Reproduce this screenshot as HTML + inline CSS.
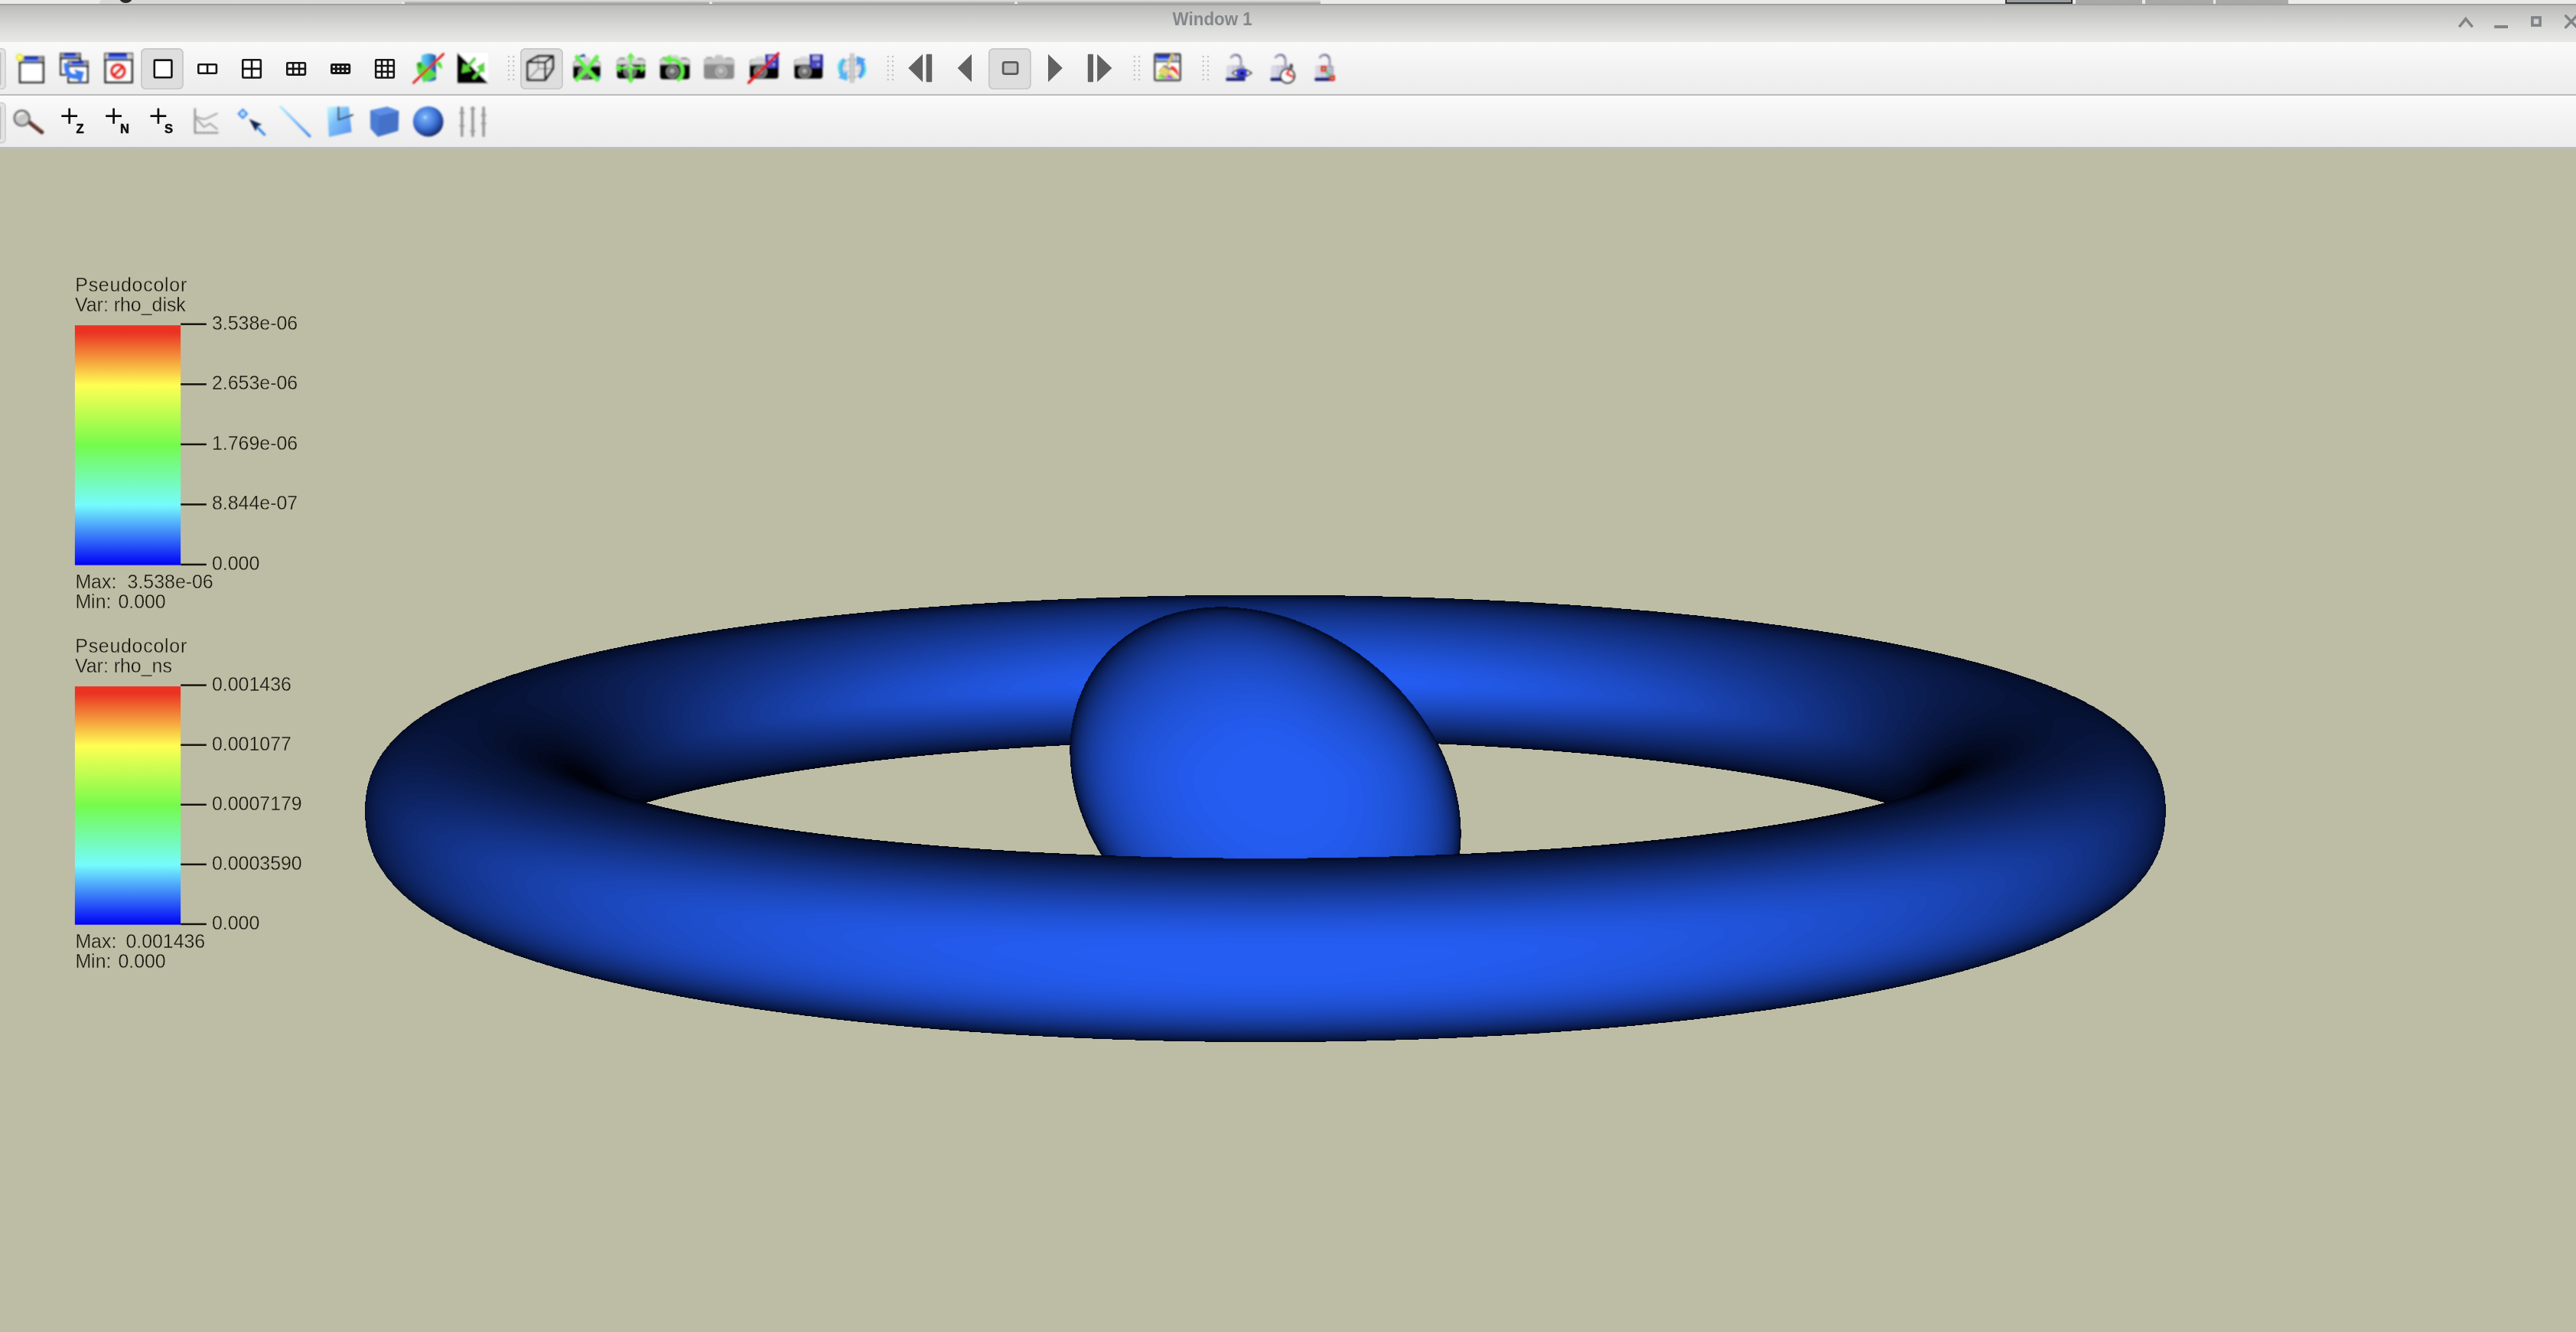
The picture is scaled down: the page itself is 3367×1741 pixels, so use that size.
<!DOCTYPE html>
<html lang="en">
<head>
<meta charset="utf-8">
<title>Window 1</title>
<style>
html,body{margin:0;padding:0;}
body{width:3367px;height:1741px;overflow:hidden;background:#bdbda5;position:relative;font-family:"Liberation Sans",sans-serif;}
#desk{position:absolute;left:0;top:0;width:3367px;height:5.4px;background:#ebebea;overflow:hidden;}
#tabs{position:absolute;left:130px;top:0;width:1596px;height:5px;background:#d9d9d8;border-radius:4px 0 0 0;}
#tabs2{position:absolute;left:527px;top:2.4px;width:1199px;height:3px;background:linear-gradient(#c4c5c2,#a2a4a0);}
.tsep{position:absolute;top:1.5px;width:4px;height:4px;border-radius:2px 2px 0 0;background:#ececec;}
#blob{position:absolute;left:155.5px;top:-11px;width:17px;height:14.5px;border-radius:50%;background:#26282a;}
.ws{position:absolute;top:-4px;height:8.6px;background:#a9a9a8;}
#topline{position:absolute;left:0;top:4.9px;width:3367px;height:2px;background:linear-gradient(#a2a3a0,#9a9b98 60%,#b4b4b2);}
#titlebar{position:absolute;left:0;top:6.8px;width:3367px;height:48px;background:linear-gradient(#bcbcba 0%,#cbcbc9 30%,#dcdcda 65%,#e8e8e6 100%);}
#tb1{position:absolute;left:0;top:54.8px;width:3367px;height:68.4px;background:linear-gradient(#fafafa,#f4f4f4 40%,#ececec);}
#tb2{position:absolute;left:0;top:125px;width:3367px;height:67.4px;background:linear-gradient(#fafafa,#f4f4f4 40%,#ececec);}
.sep{position:absolute;left:0;width:3367px;height:2.2px;background:#bdbdbd;}
#canvas{position:absolute;left:0;top:195px;width:3367px;height:1546px;background:#bdbda5;}
svg{position:absolute;left:0;top:0;will-change:transform;}
.lg{position:absolute;font-family:"Liberation Sans",sans-serif;font-size:24px;line-height:26px;color:#000;white-space:pre;}
</style>
</head>
<body>
<div id="desk"><div id="tabs"></div><div id="tabs2"></div><div class="tsep" style="left:525px"></div><div class="tsep" style="left:927px"></div><div class="tsep" style="left:1326px"></div><div id="blob"></div><div class="ws" style="left:2620.8px;width:88.7px;background:#9a9c9e;box-shadow:inset 0 0 0 2px #2e3436"></div><div class="ws" style="left:2713px;width:87px"></div><div class="ws" style="left:2804px;width:89px"></div><div class="ws" style="left:2896px;width:95px"></div></div>
<div id="topline"></div>
<div id="titlebar"></div>
<div id="tb1"></div>
<div class="sep" style="top:123px"></div>
<div id="tb2"></div>
<div class="sep" style="top:192.3px;height:2.4px"></div>
<svg id="tools" width="3367" height="200" viewBox="0 0 3367 200" style="position:absolute;left:0;top:0">
<defs>
<filter id="bl" x="-5%" y="-20%" width="110%" height="140%"><feGaussianBlur stdDeviation="0.85"/></filter>
<filter id="bl3" x="-5%" y="-20%" width="110%" height="140%"><feGaussianBlur stdDeviation="0.5"/></filter>
<filter id="bl2" x="-5%" y="-20%" width="110%" height="140%"><feGaussianBlur stdDeviation="0.7"/></filter>
<linearGradient id="wt" x1="0" y1="0" x2="0" y2="1"><stop offset="0" stop-color="#10108c"/><stop offset="0.45" stop-color="#2a48e0"/><stop offset="1" stop-color="#8fc0ff"/></linearGradient>
<linearGradient id="cyl" x1="0" y1="0" x2="1" y2="0"><stop offset="0" stop-color="#63d3f3"/><stop offset="0.45" stop-color="#49a8e6"/><stop offset="1" stop-color="#1c4c9c"/></linearGradient>
<linearGradient id="lk" x1="0" y1="0" x2="1" y2="0"><stop offset="0" stop-color="#dcdce8"/><stop offset="0.5" stop-color="#bcbcd0"/><stop offset="1" stop-color="#9c9cb8"/></linearGradient>
<linearGradient id="lkb" x1="0" y1="0" x2="0" y2="1"><stop offset="0" stop-color="#2a3a9c"/><stop offset="1" stop-color="#0c1460"/></linearGradient>
<radialGradient id="lens" cx="0.45" cy="0.4" r="0.6"><stop offset="0" stop-color="#d0d0d0"/><stop offset="0.5" stop-color="#8c8c8c"/><stop offset="1" stop-color="#5a5a5a"/></radialGradient>
<radialGradient id="lensg" cx="0.45" cy="0.4" r="0.6"><stop offset="0" stop-color="#d6d6d6"/><stop offset="0.6" stop-color="#b0b0b0"/><stop offset="1" stop-color="#8e8e8e"/></radialGradient>
<radialGradient id="sph" cx="0.40" cy="0.36" r="0.70"><stop offset="0" stop-color="#c8ecff"/><stop offset="0.10" stop-color="#74acf6"/><stop offset="0.5" stop-color="#4378da"/><stop offset="0.8" stop-color="#23449a"/><stop offset="1" stop-color="#0a1436"/></radialGradient>
<linearGradient id="pln" x1="0" y1="0" x2="1" y2="1"><stop offset="0" stop-color="#c8fbff"/><stop offset="0.4" stop-color="#7cc0f8"/><stop offset="1" stop-color="#5590ee"/></linearGradient>
<linearGradient id="lin" x1="0" y1="0" x2="1" y2="1"><stop offset="0" stop-color="#b4ecff"/><stop offset="1" stop-color="#4a8cec"/></linearGradient>
<linearGradient id="mag" x1="0" y1="0" x2="1" y2="1"><stop offset="0" stop-color="#f0f0f0"/><stop offset="0.5" stop-color="#c4c4c4"/><stop offset="1" stop-color="#e0e0e0"/></linearGradient>
<linearGradient id="rb" x1="0" y1="0" x2="1" y2="0"><stop offset="0" stop-color="#f0f040"/><stop offset="0.25" stop-color="#50e050"/><stop offset="0.5" stop-color="#e040e0"/><stop offset="0.75" stop-color="#4060f0"/><stop offset="1" stop-color="#50e0a0"/></linearGradient>
</defs>
<rect x="-6" y="63.6" width="13" height="52.7" rx="4.5" fill="#e3e3e3" stroke="#cdcdcd" stroke-width="1.6"/>
<rect x="0" y="68.6" width="1.3" height="42.7" fill="#bdbdbd"/>
<rect x="-6" y="134.4" width="13" height="52.2" rx="4.5" fill="#e3e3e3" stroke="#cdcdcd" stroke-width="1.6"/>
<rect x="0" y="139.4" width="1.3" height="42.2" fill="#bdbdbd"/>
<rect x="184.9" y="63.8" width="54.1" height="52.2" rx="5.5" fill="#dedede" stroke="#c6c6c6" stroke-width="1.7"/>
<rect x="680.9" y="63.8" width="54.1" height="52.2" rx="5.5" fill="#dedede" stroke="#c6c6c6" stroke-width="1.7"/>
<rect x="1292.8" y="63.8" width="54.1" height="52.2" rx="5.5" fill="#dedede" stroke="#c6c6c6" stroke-width="1.7"/>
<rect x="663.9" y="72.9" width="2.2" height="2.2" fill="#c3c3c3"/>
<rect x="663.9" y="78.9" width="2.2" height="2.2" fill="#c3c3c3"/>
<rect x="663.9" y="84.9" width="2.2" height="2.2" fill="#c3c3c3"/>
<rect x="663.9" y="90.9" width="2.2" height="2.2" fill="#c3c3c3"/>
<rect x="663.9" y="96.9" width="2.2" height="2.2" fill="#c3c3c3"/>
<rect x="663.9" y="102.9" width="2.2" height="2.2" fill="#c3c3c3"/>
<rect x="670.1" y="72.9" width="2.2" height="2.2" fill="#c3c3c3"/>
<rect x="670.1" y="78.9" width="2.2" height="2.2" fill="#c3c3c3"/>
<rect x="670.1" y="84.9" width="2.2" height="2.2" fill="#c3c3c3"/>
<rect x="670.1" y="90.9" width="2.2" height="2.2" fill="#c3c3c3"/>
<rect x="670.1" y="96.9" width="2.2" height="2.2" fill="#c3c3c3"/>
<rect x="670.1" y="102.9" width="2.2" height="2.2" fill="#c3c3c3"/>
<rect x="1159.6" y="72.9" width="2.2" height="2.2" fill="#c3c3c3"/>
<rect x="1159.6" y="78.9" width="2.2" height="2.2" fill="#c3c3c3"/>
<rect x="1159.6" y="84.9" width="2.2" height="2.2" fill="#c3c3c3"/>
<rect x="1159.6" y="90.9" width="2.2" height="2.2" fill="#c3c3c3"/>
<rect x="1159.6" y="96.9" width="2.2" height="2.2" fill="#c3c3c3"/>
<rect x="1159.6" y="102.9" width="2.2" height="2.2" fill="#c3c3c3"/>
<rect x="1165.8" y="72.9" width="2.2" height="2.2" fill="#c3c3c3"/>
<rect x="1165.8" y="78.9" width="2.2" height="2.2" fill="#c3c3c3"/>
<rect x="1165.8" y="84.9" width="2.2" height="2.2" fill="#c3c3c3"/>
<rect x="1165.8" y="90.9" width="2.2" height="2.2" fill="#c3c3c3"/>
<rect x="1165.8" y="96.9" width="2.2" height="2.2" fill="#c3c3c3"/>
<rect x="1165.8" y="102.9" width="2.2" height="2.2" fill="#c3c3c3"/>
<rect x="1481.7" y="72.9" width="2.2" height="2.2" fill="#c3c3c3"/>
<rect x="1481.7" y="78.9" width="2.2" height="2.2" fill="#c3c3c3"/>
<rect x="1481.7" y="84.9" width="2.2" height="2.2" fill="#c3c3c3"/>
<rect x="1481.7" y="90.9" width="2.2" height="2.2" fill="#c3c3c3"/>
<rect x="1481.7" y="96.9" width="2.2" height="2.2" fill="#c3c3c3"/>
<rect x="1481.7" y="102.9" width="2.2" height="2.2" fill="#c3c3c3"/>
<rect x="1487.9" y="72.9" width="2.2" height="2.2" fill="#c3c3c3"/>
<rect x="1487.9" y="78.9" width="2.2" height="2.2" fill="#c3c3c3"/>
<rect x="1487.9" y="84.9" width="2.2" height="2.2" fill="#c3c3c3"/>
<rect x="1487.9" y="90.9" width="2.2" height="2.2" fill="#c3c3c3"/>
<rect x="1487.9" y="96.9" width="2.2" height="2.2" fill="#c3c3c3"/>
<rect x="1487.9" y="102.9" width="2.2" height="2.2" fill="#c3c3c3"/>
<rect x="1571.6" y="72.9" width="2.2" height="2.2" fill="#c3c3c3"/>
<rect x="1571.6" y="78.9" width="2.2" height="2.2" fill="#c3c3c3"/>
<rect x="1571.6" y="84.9" width="2.2" height="2.2" fill="#c3c3c3"/>
<rect x="1571.6" y="90.9" width="2.2" height="2.2" fill="#c3c3c3"/>
<rect x="1571.6" y="96.9" width="2.2" height="2.2" fill="#c3c3c3"/>
<rect x="1571.6" y="102.9" width="2.2" height="2.2" fill="#c3c3c3"/>
<rect x="1577.9" y="72.9" width="2.2" height="2.2" fill="#c3c3c3"/>
<rect x="1577.9" y="78.9" width="2.2" height="2.2" fill="#c3c3c3"/>
<rect x="1577.9" y="84.9" width="2.2" height="2.2" fill="#c3c3c3"/>
<rect x="1577.9" y="90.9" width="2.2" height="2.2" fill="#c3c3c3"/>
<rect x="1577.9" y="96.9" width="2.2" height="2.2" fill="#c3c3c3"/>
<rect x="1577.9" y="102.9" width="2.2" height="2.2" fill="#c3c3c3"/>
<g filter="url(#bl)">
<rect x="26.1" y="74.7" width="30.5" height="32.8" fill="#fff" stroke="#1c1c1c" stroke-width="2.6"/>
<rect x="26.1" y="74.3" width="30.5" height="6.6" fill="#9a9aa0"/>
<rect x="31.42" y="74.3" width="18.536" height="6.6" fill="url(#wt)"/>
<rect x="24.8" y="80.9" width="33.1" height="2.2" fill="#101018"/>
<circle cx="25.6" cy="75" r="5.3" fill="#eaea52"/><circle cx="25.6" cy="75" r="2.2" fill="#ffffa0"/>
<rect x="79.4" y="70.2" width="25.1" height="27.4" fill="#fff" stroke="#1c1c1c" stroke-width="2.4"/>
<rect x="79.4" y="69.9" width="25.1" height="5.6" fill="#9a9aa0"/>
<rect x="83.7" y="69.9" width="15.4" height="5.6" fill="url(#wt)"/>
<rect x="78.2" y="75.5" width="27.5" height="2.2" fill="#101018"/>
<rect x="89.4" y="80.4" width="25.1" height="27.2" fill="#fff" stroke="#1c1c1c" stroke-width="2.4"/>
<rect x="89.4" y="80.1" width="25.1" height="5.6" fill="#9a9aa0"/>
<rect x="93.7" y="80.1" width="15.4" height="5.6" fill="url(#wt)"/>
<rect x="88.2" y="85.7" width="27.5" height="2.2" fill="#101018"/>
<path d="M83.6 82 C82.4 96 88 104.4 100.4 103.4 L106 108.4 L110 94 L96.6 90.4 L99.4 96.4 C92.6 97.4 89.4 93 90 82 Z" fill="#3a7eee"/>
<rect x="137.8" y="70.4" width="34.7" height="37" fill="#fff" stroke="#1c1c1c" stroke-width="2.8"/>
<rect x="137.8" y="69.9" width="34.7" height="7.4" fill="#9a9aa0"/>
<rect x="142.025" y="69.9" width="23.625" height="7.4" fill="url(#wt)"/>
<rect x="138.65" y="70.9" width="1.6" height="6" fill="#f4f4f4"/><rect x="167.15" y="70.9" width="1.8" height="6" fill="#f4f4f4"/><rect x="170.525" y="70.9" width="1.8" height="6" fill="#f4f4f4"/>
<rect x="136.4" y="77.3" width="37.5" height="2.2" fill="#101018"/>
<circle cx="154.4" cy="93.1" r="8.5" fill="none" stroke="#e6281c" stroke-width="4.2"/>
<path d="M148.6 98.9 L160.2 87.3" stroke="#e6281c" stroke-width="4"/>
</g>
<g filter="url(#bl2)" fill="#fff" stroke="#151515" stroke-width="2.6" stroke-linejoin="round">
<rect x="201.8" y="78.6" width="22.6" height="22.7" rx="1" stroke-width="2.6"/>
<rect x="259.3" y="84.3" width="23.6" height="11.4" rx="1" stroke-width="2.6"/>
<path d="M271.10 84.30V95.70" stroke-width="2.6" fill="none"/>
<rect x="317.3" y="78.3" width="23.5" height="23.2" rx="1" stroke-width="2.6"/>
<path d="M329.05 78.30V101.50M317.30 89.90H340.80" stroke-width="2.6" fill="none"/>
<rect x="375.3" y="82.2" width="23.6" height="15.4" rx="1" stroke-width="2.6"/>
<path d="M383.17 82.20V97.60M391.03 82.20V97.60M375.30 89.90H398.90" stroke-width="2.6" fill="none"/>
<rect x="433.45" y="84.45" width="23.3" height="11.1" rx="1" stroke-width="2.9"/>
<path d="M439.27 84.45V95.55M445.10 84.45V95.55M450.92 84.45V95.55M433.45 90.00H456.75" stroke-width="2.9" fill="none"/>
<rect x="491.2" y="78.3" width="23.6" height="23.2" rx="1" stroke-width="2.6"/>
<path d="M499.07 78.30V101.50M506.93 78.30V101.50M491.20 86.03H514.80M491.20 93.77H514.80" stroke-width="2.6" fill="none"/>
</g>
<g filter="url(#bl)">
<path d="M550.8 72.5 Q560.3 67.5 569.8 72.5 V104 Q560.3 109.5 550.8 104 Z" fill="url(#cyl)"/>
<path d="M544.5 83 Q547 80 551.5 81.5 L569 95.5 L569.5 100 L553 108 L552.5 101.5 Q545 99.5 544.5 83 Z" fill="#58dc42"/>
<path d="M545 83.5 Q547.5 80.6 551 82 L551 89 Q547 89.5 545 83.5Z" fill="#2f9a2a"/>
<path d="M569.5 82.5 L574.5 80.3 Q578.5 84.5 577.7 90.5 Q573 88 569.5 82.5Z" fill="#58dc42"/>
<path d="M540.6 108.2 L579.6 70.6" stroke="#dc2020" stroke-width="3" stroke-linecap="round"/>
<rect x="598" y="69" width="40" height="39.4" fill="#fff"/>
<path d="M598 69 L638 108.4 L598 108.4 Z" fill="#000"/>
<path d="M619.6 74.6 L609.2 86 L605.6 82.4 L603.4 95.6 L616.2 92.6 L612.4 89 L622.6 77.6 Q621.5 74.8 619.6 74.6Z" fill="#5ad23c"/>
<path d="M617.2 101.2 L626.4 91 L622.6 87.4 L633.2 81 L633.4 95.6 L629.6 93.6 L620.2 103.8 Q617.6 103.2 617.2 101.2Z" fill="#5ad23c"/>
<path d="M689.6 81.4 L703.4 73.4 L722.8 73.4 L722.8 89.4 L712.6 104.4 L689.6 104.4 Z" fill="#e4e4e4" fill-opacity="0.9"/>
<path d="M703.4 73.4 L703.4 90 L689.6 104.4 M703.4 90 L722.8 89.4" stroke="#9a9a9a" stroke-width="2" fill="none"/>
<path d="M689.6 81.4 H712.6 V104.4 H689.6 Z M689.6 81.4 L703.4 73.4 H722.8 L712.6 81.4 M722.8 73.4 V89.4 L712.6 104.4" stroke="#202020" stroke-width="2.7" fill="none" stroke-linejoin="round"/>
<rect x="749.5" y="79.5" width="35.1" height="24" rx="3.6" fill="#000"/>
<path d="M749.5 86.94 Q749.5 79.5 753.3 79.5 H780.8 Q784.6 79.5 784.6 86.94 Z" fill="#d6d6d6"/>
<path d="M761.083 80 L763.189 75.1 H770.56 L772.666 80 Z" fill="#d6d6d6"/>
<rect x="752.308" y="77.7" width="7.02" height="2.4" fill="#8c8c8c"/>
<rect x="774.772" y="78.3" width="7.02" height="2.4" fill="#8c8c8c"/>
<rect x="749.5" y="86.04" width="35.1" height="1.8" fill="#4a4a4a"/>
<circle cx="764.242" cy="94.86" r="9.4" fill="#2c2c2c"/>
<circle cx="764.242" cy="94.86" r="8.2" fill="#8e8e8e"/>
<circle cx="764.242" cy="94.86" r="6.4" fill="#4c4c4c"/>
<circle cx="764.242" cy="94.86" r="5.3" fill="url(#lens)"/>
<path d="M754 74.5 L763.5 70.3 L766 74.8 Z" fill="#1f5ca8"/><path d="M781.5 99.5 L785.6 100.5 L782 104.6 Z" fill="#39c6dc"/>
<path d="M750.6 74.4 L754.2 71 L767.2 86.6 L779.6 71 L783.6 74.6 L770.8 90.6 L784.4 104.6 L780 107.6 L767 94.6 L754.4 107.6 L750.4 104 L763.4 90.6 Z" fill="#62ee46"/>
<rect x="806.6" y="77" width="36.6" height="25.4" rx="3.6" fill="#000"/>
<path d="M806.6 84.874 Q806.6 77 810.4 77 H839.4 Q843.2 77 843.2 84.874 Z" fill="#d6d6d6"/>
<path d="M818.678 77.5 L820.874 72.6 H828.56 L830.756 77.5 Z" fill="#d6d6d6"/>
<rect x="809.528" y="75.2" width="7.32" height="2.4" fill="#8c8c8c"/>
<rect x="832.952" y="75.8" width="7.32" height="2.4" fill="#8c8c8c"/>
<rect x="806.6" y="83.974" width="36.6" height="1.8" fill="#4a4a4a"/>
<circle cx="823.436" cy="93.256" r="9.4" fill="#2c2c2c"/>
<circle cx="823.436" cy="93.256" r="8.2" fill="#8e8e8e"/>
<circle cx="823.436" cy="93.256" r="6.4" fill="#4c4c4c"/>
<circle cx="823.436" cy="93.256" r="5.3" fill="url(#lens)"/>
<path d="M824.4 68.8 L829.8 75.6 H826 V87.4 H837.6 V83.8 L844 89 L837.6 94.4 V90.6 H826 V102.4 H829.8 L824.4 109.2 L819 102.4 H822.8 V90.6 H810.8 V94.4 L804 89 L810.8 83.8 V87.4 H822.8 V75.6 H819 Z" fill="#62ee46"/>
<path d="M815.4 88 Q821.6 82.4 827.4 88.4" stroke="#e8e8e8" stroke-width="1.6" fill="none"/>
<rect x="862.8" y="76.4" width="38.6" height="27" rx="3.6" fill="#000"/>
<path d="M862.8 84.77 Q862.8 76.4 866.6 76.4 H897.6 Q901.4 76.4 901.4 84.77 Z" fill="#d6d6d6"/>
<path d="M875.538 76.9 L877.854 72 H885.96 L888.276 76.9 Z" fill="#d6d6d6"/>
<rect x="865.888" y="74.6" width="7.72" height="2.4" fill="#8c8c8c"/>
<rect x="890.592" y="75.2" width="7.72" height="2.4" fill="#8c8c8c"/>
<rect x="862.8" y="83.87" width="38.6" height="1.8" fill="#4a4a4a"/>
<circle cx="879.012" cy="93.68" r="9.4" fill="#2c2c2c"/>
<circle cx="879.012" cy="93.68" r="8.2" fill="#8e8e8e"/>
<circle cx="879.012" cy="93.68" r="6.4" fill="#4c4c4c"/>
<circle cx="879.012" cy="93.68" r="5.3" fill="url(#lens)"/>
<path d="M865.4 78.2 L876.6 71 L877 75.6 C888 75.2 894.6 83 894.4 93 C894.2 100.6 890.6 105 886.4 107 L883.6 103.4 C887.4 101 889.6 97.6 889.6 92.6 C889.6 85.4 884.6 80.4 877.4 80.6 L877.8 84.6 Z" fill="#62ee46"/>
<rect x="920" y="76.2" width="39.6" height="27" rx="3.6" fill="#8a8a8a"/>
<path d="M920 84.57 Q920 76.2 923.8 76.2 H955.8 Q959.6 76.2 959.6 84.57 Z" fill="#c6c6c6"/>
<path d="M933.068 76.7 L935.444 71.8 H943.76 L946.136 76.7 Z" fill="#c6c6c6"/>
<rect x="923.168" y="74.4" width="7.92" height="2.4" fill="#a6a6a6"/>
<rect x="948.512" y="75" width="7.92" height="2.4" fill="#a6a6a6"/>
<rect x="920" y="83.67" width="39.6" height="1.8" fill="#9a9a9a"/>
<circle cx="942.572" cy="93.48" r="9.4" fill="#7c7c7c"/>
<circle cx="942.572" cy="93.48" r="8.2" fill="#bcbcbc"/>
<circle cx="942.572" cy="93.48" r="6.4" fill="#9a9a9a"/>
<circle cx="942.572" cy="93.48" r="5.3" fill="url(#lensg)"/>
<rect x="980.2" y="77.6" width="37.2" height="25.2" rx="3.6" fill="#000"/>
<path d="M980.2 85.412 Q980.2 77.6 984 77.6 H1013.6 Q1017.4 77.6 1017.4 85.412 Z" fill="#d6d6d6"/>
<rect x="980.2" y="84.512" width="37.2" height="1.8" fill="#4a4a4a"/>
<circle cx="993.964" cy="93.728" r="9.4" fill="#2c2c2c"/>
<circle cx="993.964" cy="93.728" r="8.2" fill="#8e8e8e"/>
<circle cx="993.964" cy="93.728" r="6.4" fill="#4c4c4c"/>
<circle cx="993.964" cy="93.728" r="5.3" fill="url(#lens)"/>
<path d="M986 77.4 L989 73.4 H997 L1000 77.4Z" fill="#dcdcdc"/>
<rect x="1000.2" y="71.2" width="17.4" height="17.4" fill="#2c2ca6"/>
<rect x="1004.03" y="72.94" width="9.57" height="5.916" fill="#a8a8e0"/>
<rect x="1002.81" y="80.944" width="10.44" height="7.656" fill="#5050c4"/>
<rect x="1010.29" y="82.684" width="2.436" height="3.48" fill="#b0b0e8"/>
<path d="M978.6 108 L1017.2 70" stroke="#e01818" stroke-width="3.6" stroke-linecap="round"/>
<rect x="1038.4" y="77.6" width="36.8" height="25.2" rx="3.6" fill="#000"/>
<path d="M1038.4 85.412 Q1038.4 77.6 1042.2 77.6 H1071.4 Q1075.2 77.6 1075.2 85.412 Z" fill="#d6d6d6"/>
<rect x="1038.4" y="84.512" width="36.8" height="1.8" fill="#4a4a4a"/>
<circle cx="1052.02" cy="93.728" r="9.4" fill="#2c2c2c"/>
<circle cx="1052.02" cy="93.728" r="8.2" fill="#8e8e8e"/>
<circle cx="1052.02" cy="93.728" r="6.4" fill="#4c4c4c"/>
<circle cx="1052.02" cy="93.728" r="5.3" fill="url(#lens)"/>
<path d="M1044 77.4 L1047 73.4 H1055 L1058 77.4Z" fill="#dcdcdc"/>
<rect x="1058.2" y="71.2" width="17.4" height="17.4" fill="#2c2ca6"/>
<rect x="1062.03" y="72.94" width="9.57" height="5.916" fill="#a8a8e0"/>
<rect x="1060.81" y="80.944" width="10.44" height="7.656" fill="#5050c4"/>
<rect x="1068.29" y="82.684" width="2.436" height="3.48" fill="#b0b0e8"/>
<circle cx="1113.6" cy="89.4" r="12.6" fill="#d4d4d4" stroke="#aaaaaa" stroke-width="1.4"/>
<path d="M1101 89.4 H1126.2 M1104 82.4 H1123.2 M1104 96.4 H1123.2 M1107.6 78.4 V100.4 M1119.6 78.4 V100.4" stroke="#f2f2f2" stroke-width="1.3" fill="none"/>
<rect x="1111" y="69.6" width="5.4" height="38.8" fill="#b4b4b4"/><rect x="1113" y="69.6" width="1.4" height="38.8" fill="#e8e8e8"/>
<path d="M1102.6 75.6 C1094.4 82.6 1093.6 92.4 1098.6 98.8 L1095.4 101.4 L1107.4 105.4 L1107.6 92.6 L1103.4 95.6 C1100.4 90.4 1101 84.6 1105.6 79.4 Z" fill="#52b6f0"/>
<path d="M1099.6 78.6 C1095.2 84 1095.2 90 1097.4 94" stroke="#62e6ec" stroke-width="2.4" fill="none"/>
<path d="M1124.4 103 C1132.8 96.2 1133.4 86.4 1128.6 80 L1131.8 77.4 L1119.6 73.2 L1119.4 86.2 L1123.6 83.2 C1126.6 88.2 1126 94.2 1121.4 99.2 Z" fill="#4a9cf0"/>
<path d="M1127.4 100 C1131.8 94.6 1131.8 88.6 1129.6 84.6" stroke="#62e6dc" stroke-width="2.4" fill="none"/>
</g>
<g filter="url(#bl2)" fill="#626262">
<path d="M1187.2 89 L1206 70.8 V107.2 Z"/><rect x="1210.6" y="70.8" width="7.6" height="36.4" rx="1"/>
<path d="M1251.6 89 L1270 70.8 V107.2 Z"/>
<rect x="1311.1" y="81.4" width="19" height="15.2" rx="2.4" fill="#c2c2c2" stroke="#595959" stroke-width="2.7"/>
<path d="M1388.8 89 L1370 70.8 V107.2 Z"/>
<rect x="1421.8" y="70.8" width="7.2" height="36.4" rx="1"/><path d="M1453.4 89 L1434.2 70.8 V107.2 Z"/>
</g>
<g filter="url(#bl)">
<rect x="1509.6" y="71" width="32.8" height="33.8" fill="#fff" stroke="#444" stroke-width="2.8" rx="1"/>
<rect x="1511.4" y="72.2" width="29.2" height="6.6" fill="url(#wt)"/><rect x="1534" y="72.4" width="6.4" height="6" fill="#e0e0e0"/><rect x="1536.6" y="72.4" width="1.4" height="6" fill="#444"/>
<rect x="1509" y="79.4" width="34" height="2.2" fill="#444"/>
<path d="M1512.6 102.6 V97.4 Q1524 94 1532.2 98.6 Q1536.6 100.6 1540 102.6 Z" fill="url(#rb)"/>
<path d="M1531 85.4 Q1538.4 87.4 1540.2 95 L1540.2 101 Q1536 93 1528.6 90.6 Z" fill="#ee3c2a"/>
<path d="M1526.6 92.6 Q1533.6 94.6 1538.4 101.6 L1534.4 102.4 Q1530.4 97.4 1525.4 96 Z" fill="#f4e63c"/>
<path d="M1531.2 70 L1534.8 71.6 L1526.4 88.6 L1530.6 91.2 L1524.4 101.2 L1513.2 93.6 L1520.6 85 L1523.4 86.6 Z" fill="#dcc65c"/>
<path d="M1521 85.6 L1530 90.6" stroke="#5a4ab4" stroke-width="1.8"/>
<path d="M1516.4 92.6 L1523.6 98.2 M1519 89.6 L1526.4 95" stroke="#f4ec9c" stroke-width="1.4"/>
<path d="M1608.6 76.2 C1611.4 70.4 1621.2 69.6 1622 78.6 V87" stroke="#9c9cb4" stroke-width="3" fill="none"/>
<path d="M1613.8 72.2 C1616.8 70.8 1620 72 1620.8 76.4" stroke="#5c5c8a" stroke-width="1.3" fill="none"/>
<path d="M1602.8 101.6 V88.4 Q1602.8 85.4 1605.8 85.4 H1624.2 Q1627.2 85.4 1627.2 88.4 V101.6 Z" fill="url(#lk)"/>
<path d="M1602.8 90 H1627.2 M1602.8 94 H1627.2 M1602.8 98 H1627.2 M1608.8 86 V101 M1614.8 86 V101" stroke="#e4e4f0" stroke-width="1.1" fill="none"/>
<rect x="1602.5" y="101" width="25" height="4.8" rx="1.2" fill="url(#lkb)"/>
<path d="M1610.6 95.4 Q1623 85.4 1635.6 95.4 Q1623 105.4 1610.6 95.4 Z" fill="#fff" stroke="#1c1c1c" stroke-width="1.7"/>
<ellipse cx="1623" cy="95.4" rx="7.2" ry="5.4" fill="#3a3ae0"/><ellipse cx="1623.6" cy="95.8" rx="2.6" ry="2.1" fill="#04041c"/>
<path d="M1666.8 76.2 C1669.6 70.4 1679.4 69.6 1680.2 78.6 V87" stroke="#9c9cb4" stroke-width="3" fill="none"/>
<path d="M1672 72.2 C1675 70.8 1678.2 72 1679 76.4" stroke="#5c5c8a" stroke-width="1.3" fill="none"/>
<path d="M1661 101.6 V88.4 Q1661 85.4 1664 85.4 H1682.4 Q1685.4 85.4 1685.4 88.4 V101.6 Z" fill="url(#lk)"/>
<path d="M1661 90 H1685.4 M1661 94 H1685.4 M1661 98 H1685.4 M1667 86 V101 M1673 86 V101" stroke="#e4e4f0" stroke-width="1.1" fill="none"/>
<rect x="1660.7" y="101" width="25" height="4.8" rx="1.2" fill="url(#lkb)"/>
<rect x="1685.6" y="83.6" width="4.2" height="6.4" rx="1.4" fill="#4a4a4a"/>
<circle cx="1682.8" cy="99.2" r="9.2" fill="#fbfbfb" stroke="#262626" stroke-width="2.2"/>
<path d="M1684.6 92.4 L1682 96.6 L1689 100" stroke="#ee2a1c" stroke-width="3.2" fill="none" stroke-linejoin="round" stroke-linecap="round"/>
<path d="M1724.6 76.2 C1727.4 70.4 1737.2 69.6 1738 78.6 V87" stroke="#9c9cb4" stroke-width="3" fill="none"/>
<path d="M1729.8 72.2 C1732.8 70.8 1736 72 1736.8 76.4" stroke="#5c5c8a" stroke-width="1.3" fill="none"/>
<path d="M1718.8 101.6 V88.4 Q1718.8 85.4 1721.8 85.4 H1740.2 Q1743.2 85.4 1743.2 88.4 V101.6 Z" fill="url(#lk)"/>
<path d="M1718.8 90 H1743.2 M1718.8 94 H1743.2 M1718.8 98 H1743.2 M1724.8 86 V101 M1730.8 86 V101" stroke="#e4e4f0" stroke-width="1.1" fill="none"/>
<rect x="1718.5" y="101" width="25" height="4.8" rx="1.2" fill="url(#lkb)"/>
<path d="M1730.2 90.2 L1741.2 102" stroke="#44d68c" stroke-width="3.6"/>
<rect x="1727.2" y="87.2" width="5.6" height="5.6" fill="#46cc84" stroke="#e42828" stroke-width="2.6"/>
<rect x="1738.8" y="99.4" width="4.8" height="4.8" fill="#46cc84" stroke="#e42828" stroke-width="2.6"/>
</g>
<g filter="url(#bl)">
<path d="M38.6 160 L54.6 172.8" stroke="#4a2c28" stroke-width="5.2" stroke-linecap="round"/>
<path d="M40.6 160.4 L53.6 170.8" stroke="#8a4a3c" stroke-width="1.6" stroke-linecap="round"/>
<circle cx="28.6" cy="154.4" r="9.8" fill="url(#mag)" stroke="#6c6c6c" stroke-width="2.6"/>
<path d="M22.6 151.6 Q26 146.6 31.6 148.4" stroke="#fafafa" stroke-width="2.2" fill="none"/>
<path d="M254.9 141.6 V173.6 H285.6" stroke="#8a8a8a" stroke-width="2.4" fill="none"/>
<path d="M253 143.8 H255 M253 148.6 H255 M253 153.4 H255 M253 158.2 H255 M253 163 H255 M253 167.8 H255 M259.6 174.6 V172.6 M264.6 174.6 V172.6 M269.6 174.6 V172.6 M274.6 174.6 V172.6 M279.6 174.6 V172.6 M284.4 174.6 V172.6" stroke="#b4b4b4" stroke-width="1.4" fill="none"/>
<path d="M256.4 152.4 L262.6 155 L268 155.8 L284.4 148.2" stroke="#9c9c9c" stroke-width="2" fill="none"/>
<path d="M256.4 154.6 L266.6 166 L274.4 161.4 L284.4 169.2" stroke="#9c9c9c" stroke-width="2" fill="none"/>
<path d="M317.3 143.2 L322.8 148.7 L317.3 154.2 L311.8 148.7 Z" fill="#b4e4ff" stroke="#4a8cee" stroke-width="2.4"/>
<path d="M335.6 165.6 L346.6 176.8" stroke="#3c8ae4" stroke-width="3.2"/>
<path d="M325.6 155.4 L342.2 162.8 L336.6 165 L334.2 171.6 Z" fill="#0c2450"/>
<path d="M366.8 139.6 L404.8 178" stroke="url(#lin)" stroke-width="3.4" stroke-linecap="round"/>
<path d="M427.4 139.4 H456 L459.6 172.4 L430 179 Z" fill="url(#pln)"/>
<path d="M442.4 139.4 V156.6 L461.6 150" stroke="#2c3c5c" stroke-width="2" fill="none"/>
<path d="M484 144.4 L506 139.4 L521.4 145.2 L520.6 171 L494 178.8 L484.4 168 Z" fill="#4472c8"/>
<path d="M484 144.4 L506 139.4 L521.4 145.2 L496 151.6 Z" fill="#5c8ee6"/>
<path d="M484 144.4 L496 151.6 L494 178.8 L484.4 168 Z" fill="#4c7cd6"/>
<circle cx="559.7" cy="158.8" r="19.8" fill="url(#sph)"/>
<path d="M603.8 139.6 V178.8 M617.9 139.6 V178.8 M632.1 139.6 V178.8" stroke="#9a9a9a" stroke-width="3.6" fill="none"/>
<path d="M599.6 148.4 H608 L603.8 143.4Z M599.6 163.6 H608 L603.8 168.6Z M613.7 143 H622.1 L617.9 139Z M613.7 170.6 H622.1 L617.9 175.6Z M627.9 151.6 H636.3 L632.1 146.6Z M627.9 160.6 H636.3 L632.1 165.6Z" fill="#9a9a9a"/>
</g>
<g filter="url(#bl2)">
<path d="M90.7 141.6 V161.8 M80.3 151.6 H101.1" stroke="#111" stroke-width="2.7" fill="none"/>
<text x="99.6" y="174.4" font-family="'Liberation Sans',sans-serif" font-weight="bold" font-size="16.6" fill="#111" stroke="#111" stroke-width="0.5">Z</text>
<path d="M148.6 141.6 V161.8 M138.2 151.6 H159" stroke="#111" stroke-width="2.7" fill="none"/>
<text x="156.9" y="174.4" font-family="'Liberation Sans',sans-serif" font-weight="bold" font-size="16.6" fill="#111" stroke="#111" stroke-width="0.5">N</text>
<path d="M206.9 141.6 V161.8 M196.5 151.6 H217.3" stroke="#111" stroke-width="2.7" fill="none"/>
<text x="215.1" y="174.4" font-family="'Liberation Sans',sans-serif" font-weight="bold" font-size="16.6" fill="#111" stroke="#111" stroke-width="0.5">S</text>
</g>
<g fill="none" stroke="#808487" stroke-width="3.3">
<path d="M3215.4 33.9 L3222.9 24.6 L3230.6 33.9" stroke-linecap="square" stroke-linejoin="miter" stroke-width="3.5"/>
<path d="M3260.2 35 H3278" stroke-width="3.9"/>
<rect x="3309.9" y="22.9" width="10.2" height="10.2" stroke-width="3.6"/>
<path d="M3353.6 20.8 L3368 35.6 M3353.6 35.6 L3368 20.8" stroke-linecap="round" stroke-width="3.5"/>
</g>
<text x="1532.6" y="32.9" textLength="104.2" lengthAdjust="spacingAndGlyphs" font-family="'Liberation Sans',sans-serif" font-weight="bold" font-size="24.4" fill="#84878a" filter="url(#bl3)">Window 1</text>
</svg>
<svg id="scene" width="3367" height="1741" viewBox="0 0 3367 1741">
<defs><linearGradient id="hot" x1="0" y1="0" x2="0" y2="1"><stop offset="0" stop-color="#ea3323"/><stop offset="0.03" stop-color="#ea3323"/><stop offset="0.25" stop-color="#ffff54"/><stop offset="0.5" stop-color="#75fb4c"/><stop offset="0.75" stop-color="#75fbfd"/><stop offset="1" stop-color="#0000f5"/></linearGradient></defs>
<g font-family="'Liberation Sans',sans-serif" font-size="24.9" fill="#15150f" stroke="#bdbda5" stroke-width="0.35">
<text x="98.3" y="381" letter-spacing="0.75" xml:space="preserve">Pseudocolor</text>
<text x="98" y="406.6" xml:space="preserve">Var: rho_disk</text>
<rect x="97.8" y="425" width="138.4" height="313.9" fill="url(#hot)"/>
<rect x="236.2" y="422.45" width="33.6" height="2.5" fill="#15150f" stroke="none"/>
<text x="277" y="430.6" xml:space="preserve">3.538e-06</text>
<rect x="236.2" y="501" width="33.6" height="2.5" fill="#15150f" stroke="none"/>
<text x="277" y="509.15" xml:space="preserve">2.653e-06</text>
<rect x="236.2" y="579.55" width="33.6" height="2.5" fill="#15150f" stroke="none"/>
<text x="277" y="587.7" xml:space="preserve">1.769e-06</text>
<rect x="236.2" y="658.1" width="33.6" height="2.5" fill="#15150f" stroke="none"/>
<text x="277" y="666.25" xml:space="preserve">8.844e-07</text>
<rect x="236.2" y="736.65" width="33.6" height="2.5" fill="#15150f" stroke="none"/>
<text x="277" y="744.8" xml:space="preserve">0.000</text>
<text y="768.6" xml:space="preserve"><tspan x="98.4">Max:</tspan><tspan x="150"> </tspan><tspan x="166.6">3.538e-06</tspan></text>
<text y="794.8" xml:space="preserve"><tspan x="98.4">Min:</tspan><tspan x="146"> </tspan><tspan x="154.4">0.000</tspan></text>
<text x="98.3" y="853" letter-spacing="0.75" xml:space="preserve">Pseudocolor</text>
<text x="98" y="878.6" xml:space="preserve">Var: rho_ns</text>
<rect x="97.8" y="897" width="138.4" height="311.9" fill="url(#hot)"/>
<rect x="236.2" y="894.35" width="33.6" height="2.5" fill="#15150f" stroke="none"/>
<text x="277" y="902.5" xml:space="preserve">0.001436</text>
<rect x="236.2" y="972.425" width="33.6" height="2.5" fill="#15150f" stroke="none"/>
<text x="277" y="980.575" xml:space="preserve">0.001077</text>
<rect x="236.2" y="1050.5" width="33.6" height="2.5" fill="#15150f" stroke="none"/>
<text x="277" y="1058.65" xml:space="preserve">0.0007179</text>
<rect x="236.2" y="1128.58" width="33.6" height="2.5" fill="#15150f" stroke="none"/>
<text x="277" y="1136.73" xml:space="preserve">0.0003590</text>
<rect x="236.2" y="1206.65" width="33.6" height="2.5" fill="#15150f" stroke="none"/>
<text x="277" y="1214.8" xml:space="preserve">0.000</text>
<text y="1238.6" xml:space="preserve"><tspan x="98.4">Max:</tspan><tspan x="150"> </tspan><tspan x="164.4">0.001436</tspan></text>
<text y="1264.8" xml:space="preserve"><tspan x="98.4">Min:</tspan><tspan x="146"> </tspan><tspan x="154.4">0.000</tspan></text>
</g>
<g fill-rule="evenodd">
<path fill="#00020c" d="M1549 778.5l0.5-0.5 208 0 1 1 48 0 1 1 36 0 1 1 30 0 1 1 25 0 1 1 23 0 1 1 21 0 1 1 19 0 1 1 18 0 1 1 17 0 1 1 15 0 1 1 15 0 1 1 15 0 1 1 13 0 1 1 13 0 1 1 13 0 1 1 12 0 1 1 11 0 1 1 12 0 1 1 10 0 1 1 11 0 1 1 10 0 1 1 10 0 1 1 9 0 1 1 10 0 1 1 9 0 1 1 9 0 1 1 8 0 1 1 8 0 1 1 9 0 1 1 8 0 1 1 7 0 1 1 8 0 1 1 7 0 1 1 8 0 1 1 7 0 1 1 7 0 1 1 6 0 1 1 7 0 1 1 7 0 1 1 6 0 1 1 6 0 1 1 6 0 1 1 6 0 1 1 6 0 1 1 6 0 1 1 6 0 1 1 5 0 1 1 6 0 1 1 5 0 1 1 6 0 1 1 5 0 1 1 5 0 1 1 5 0 1 1 5 0 1 1 5 0 1 1 4 0 1 1 5 0 1 1 4 0 1 1 5 0 1 1 4 0 1 1 5 0 1 1 4 0 1 1 4 0 1 1 4 0 1 1 4 0 1 1 4 0 1 1 4 0 1 1 4 0 1 1 4 0 1 1 4 0 1 1 3 0 1 1 4 0 1 1 3 0 1 1 4 0 1 1 3 0 1 1 4 0 1 1 3 0 1 1 3 0 1 1 3 0 1 1 3 0 1 1 4 0 1 1 3 0 1 1 3 0 1 1 2 0 1 1 3 0 1 1 3 0 1 1 3 0 1 1 3 0 1 1 2 0 1 1 3 0 1 1 3 0 1 1 2 0 1 1 3 0 1 1 2 0 1 1 3 0 1 1 2 0 1 1 2 0 1 1 3 0 1 1 2 0 1 1 2 0 1 1 2 0 1 1 2 0 1 1 2 0 1 1 2 0 1 1 2 0 1 1 2 0 1 1 2 0 1 1 2 0 1 1 2 0 1 1 5 1 3 2 2 0 1 1 2 0 3 2 5 1 3 2 2 0 3 2 2 0 5 3 2 0 5 3 2 0 9 5 2 0 1 1 1 0 1 1 1 0 1 1 1 0 1 1 1 0 1 1 7 3 2 2 1 0 1 1 7 3 2 2 1 0 4 3 3 1 2 2 1 0 2 2 1 0 2 2 1 0 2 2 1 0 2 2 1 0 3 3 1 0 3 3 1 0 4 4 1 0 5 5 1 0 15.5 15.5 0 1 5 5 0 1 6 7 0 1 4 5 1 3 2 2 0 1 6 11 0 2 2 3 0 2 1 1 0 2 1 1 0 2 1 1 0 3 1 1 0 3 1 1 0 4 1 1 0 5 1 1 0 10 1 1 0 16-1 1 0 11-1 1 0 6-1 1 0 4-1 1 0 4-1 1 0 2-1 1 0 3-1 1-1 5-2 3 0 2-1 1 0 1-1 1 0 1-1 1 0 1-1 1 0 1-1 1-3 7-2 2-1 3-2 2 0 1-2 2 0 1-7 8 0 1-6 6 0 1-11.5 11.5-1 0-7 7-1 0-9 8-1 0-3 3-1 0-2 2-1 0-2 2-1 0-2 2-1 0-8 6-3 1-2 2-3 1-2 2-5 2-2 2-1 0-1 1-1 0-1 1-1 0-1 1-7 3-4 3-2 0-1 1-1 0-1 1-1 0-11 6-2 0-1 1-1 0-5 3-2 0-5 3-2 0-3 2-2 0-3 2-2 0-1 1-1 0-1 1-2 0-3 2-5 1-3 2-2 0-1 1-2 0-1 1-5 1-3 2-2 0-1 1-2 0-1 1-2 0-1 1-2 0-1 1-2 0-1 1-2 0-1 1-2 0-1 1-2 0-1 1-3 0-1 1-2 0-1 1-2 0-1 1-2 0-1 1-3 0-1 1-2 0-1 1-2 0-1 1-3 0-1 1-2 0-1 1-3 0-1 1-2 0-1 1-3 0-1 1-2 0-1 1-3 0-1 1-3 0-1 1-2 0-1 1-3 0-1 1-3 0-1 1-3 0-1 1-3 0-1 1-3 0-1 1-3 0-1 1-3 0-1 1-3 0-1 1-3 0-1 1-3 0-1 1-3 0-1 1-4 0-1 1-3 0-1 1-3 0-1 1-4 0-1 1-3 0-1 1-4 0-1 1-4 0-1 1-3 0-1 1-4 0-1 1-4 0-1 1-4 0-1 1-3 0-1 1-4 0-1 1-4 0-1 1-5 0-1 1-4 0-1 1-4 0-1 1-4 0-1 1-5 0-1 1-4 0-1 1-5 0-1 1-4 0-1 1-5 0-1 1-5 0-1 1-4 0-1 1-5 0-1 1-5 0-1 1-5 0-1 1-6 0-1 1-5 0-1 1-5 0-1 1-6 0-1 1-5 0-1 1-6 0-1 1-6 0-1 1-5 0-1 1-6 0-1 1-6 0-1 1-7 0-1 1-6 0-1 1-6 0-1 1-7 0-1 1-7 0-1 1-7 0-1 1-7 0-1 1-7 0-1 1-7 0-1 1-8 0-1 1-7 0-1 1-8 0-1 1-8 0-1 1-9 0-1 1-8 0-1 1-9 0-1 1-9 0-1 1-9 0-1 1-9 0-1 1-10 0-1 1-10 0-1 1-11 0-1 1-10 0-1 1-12 0-1 1-11 0-1 1-12 0-1 1-13 0-1 1-13 0-1 1-13 0-1 1-15 0-1 1-15 0-1 1-16 0-1 1-18 0-1 1-18 0-1 1-20 0-1 1-23 0-1 1-25 0-1 1-29 0-1 1-37 0-1 1-52 0-1 1-157 0-1-1-53 0-1-1-36 0-1-1-29 0-1-1-25 0-1-1-23 0-1-1-20 0-1-1-19 0-1-1-17 0-1-1-16 0-1-1-15 0-1-1-15 0-1-1-13 0-1-1-14 0-1-1-12 0-1-1-12 0-1-1-12 0-1-1-11 0-1-1-11 0-1-1-10 0-1-1-10 0-1-1-10 0-1-1-9 0-1-1-9 0-1-1-9 0-1-1-9 0-1-1-9 0-1-1-8 0-1-1-8 0-1-1-8 0-1-1-7 0-1-1-8 0-1-1-7 0-1-1-7 0-1-1-8 0-1-1-6 0-1-1-7 0-1-1-7 0-1-1-6 0-1-1-7 0-1-1-6 0-1-1-6 0-1-1-6 0-1-1-6 0-1-1-5 0-1-1-6 0-1-1-6 0-1-1-5 0-1-1-5 0-1-1-6 0-1-1-5 0-1-1-5 0-1-1-5 0-1-1-5 0-1-1-5 0-1-1-4 0-1-1-5 0-1-1-5 0-1-1-4 0-1-1-5 0-1-1-4 0-1-1-4 0-1-1-4 0-1-1-5 0-1-1-4 0-1-1-4 0-1-1-4 0-1-1-4 0-1-1-3 0-1-1-4 0-1-1-4 0-1-1-4 0-1-1-3 0-1-1-4 0-1-1-3 0-1-1-4 0-1-1-3 0-1-1-4 0-1-1-3 0-1-1-3 0-1-1-3 0-1-1-3 0-1-1-3 0-1-1-4 0-1-1-3 0-1-1-2 0-1-1-3 0-1-1-3 0-1-1-3 0-1-1-3 0-1-1-3 0-1-1-2 0-1-1-3 0-1-1-3 0-1-1-2 0-1-1-3 0-1-1-2 0-1-1-3 0-1-1-2 0-1-1-2 0-1-1-3 0-1-1-2 0-1-1-2 0-1-1-2 0-1-1-3 0-1-1-2 0-1-1-2 0-1-1-2 0-1-1-2 0-1-1-2 0-1-1-2 0-1-1-2 0-1-1-2 0-1-1-5-1-3-2-2 0-1-1-5-1-3-2-5-1-3-2-2 0-3-2-2 0-3-2-2 0-3-2-2 0-5-3-2 0-5-3-2 0-11-6-2 0-1-1-1 0-1-1-1 0-1-1-1 0-1-1-7-3-2-2-1 0-1-1-7-3-2-2-5-2-2-2-1 0-4-3-3-1-2-2-1 0-2-2-1 0-2-2-1 0-2-2-1 0-3-3-1 0-3-3-1 0-3-3-1 0-4-4-1 0-6-6-1 0-15.5-15.5 0-1-9-10 0-1-2-2 0-1-6-8 0-1-3-4 0-1-5-9 0-2-2-3 0-2-1-1 0-2-1-1 0-2-1-1 0-2-1-1 0-2-1-1 0-4-1-1 0-4-1-1 0-5-1-1 0-9-1-1 0-23 1-1 0-8 1-1 0-5 1-1 0-4 1-1 0-3 1-1 0-2 1-1 0-3 1-1 0-2 2-3 0-2 1-1 0-1 1-1 0-1 1-1 0-1 1-1 0-1 1-1 3-7 2-2 0-1 3-4 0-1 3-3 0-1 3-3 0-1 4-4 0-1 18.5-18.5 1 0 10-9 1 0 3-3 1 0 2-2 1 0 3-3 1 0 5-4 3-1 2-2 1 0 2-2 5-2 2-2 5-2 2-2 1 0 1-1 1 0 1-1 1 0 1-1 1 0 1-1 1 0 1-1 1 0 1-1 1 0 11-6 2 0 7-4 2 0 5-3 2 0 3-2 2 0 3-2 2 0 1-1 1 0 1-1 2 0 3-2 5-1 3-2 2 0 1-1 2 0 1-1 2 0 1-1 5-1 3-2 2 0 1-1 2 0 1-1 2 0 1-1 3 0 1-1 2 0 1-1 2 0 1-1 2 0 1-1 2 0 1-1 3 0 1-1 2 0 1-1 2 0 1-1 3 0 1-1 2 0 1-1 3 0 1-1 2 0 1-1 3 0 1-1 2 0 1-1 3 0 1-1 3 0 1-1 3 0 1-1 2 0 1-1 3 0 1-1 3 0 1-1 3 0 1-1 3 0 1-1 3 0 1-1 3 0 1-1 4 0 1-1 3 0 1-1 3 0 1-1 4 0 1-1 3 0 1-1 3 0 1-1 4 0 1-1 4 0 1-1 3 0 1-1 4 0 1-1 4 0 1-1 4 0 1-1 3 0 1-1 4 0 1-1 5 0 1-1 4 0 1-1 4 0 1-1 4 0 1-1 4 0 1-1 5 0 1-1 4 0 1-1 5 0 1-1 5 0 1-1 4 0 1-1 5 0 1-1 5 0 1-1 5 0 1-1 5 0 1-1 5 0 1-1 6 0 1-1 5 0 1-1 5 0 1-1 6 0 1-1 6 0 1-1 5 0 1-1 6 0 1-1 6 0 1-1 6 0 1-1 7 0 1-1 6 0 1-1 7 0 1-1 6 0 1-1 7 0 1-1 7 0 1-1 7 0 1-1 7 0 1-1 8 0 1-1 7 0 1-1 8 0 1-1 8 0 1-1 8 0 1-1 9 0 1-1 8 0 1-1 9 0 1-1 9 0 1-1 9 0 1-1 10 0 1-1 10 0 1-1 10 0 1-1 10 0 1-1 11 0 1-1 11 0 1-1 12 0 1-1 12 0 1-1 13 0 1-1 13 0 1-1 13 0 1-1 14 0 1-1 15 0 1-1 16 0 1-1 17 0 1-1 18 0 1-1 19 0 1-1 21 0 1-1 23 0 1-1 25 0 1-1 30 0 1-1 35 0 1-1 48 0zM1880.5 972l-0.5 1.5 1 1 0 1 4 7 0 2 4 7 0 2 2 3 0 2 2 3 1 5 2 3 0 2 1 1 0 2 1 1 0 2 1 1 0 3 1 1 0 2 1 1 0 3 1 1 0 3 1 1 0 3 1 1 0 4 1 1 0 4 1 1 0 4 1 1 0 6 1 1 0 8 1 1 0 15 1 1 0 10-1 1 0 15-1 1 0 4 0.5 0.5 14 0 1-1 19 0 1-1 18 0 1-1 16 0 1-1 16 0 1-1 15 0 1-1 14 0 1-1 13 0 1-1 13 0 1-1 12 0 1-1 11 0 1-1 12 0 1-1 10 0 1-1 11 0 1-1 10 0 1-1 9 0 1-1 10 0 1-1 9 0 1-1 9 0 1-1 8 0 1-1 9 0 1-1 8 0 1-1 8 0 1-1 7 0 1-1 8 0 1-1 7 0 1-1 7 0 1-1 7 0 1-1 7 0 1-1 7 0 1-1 6 0 1-1 6 0 1-1 7 0 1-1 6 0 1-1 5 0 1-1 6 0 1-1 6 0 1-1 5 0 1-1 6 0 1-1 5 0 1-1 5 0 1-1 5 0 1-1 5 0 1-1 5 0 1-1 5 0 1-1 4 0 1-1 5 0 1-1 4 0 1-1 4 0 1-1 5 0 1-1 4 0 1-1 4 0 1-1 4 0 1-1 4 0 1-1 3 0 1-1 4 0 1-1 4 0 1-1 3 0 1-1 4 0 1-1 3 0 1-1 3 0 1-1 4 0 1-1 3 0 1-1 3 0 1-1 3 0 1-1 3 0 1-1 3 0 0.5-0.5-2.5-1.5-3 0-1-1-2 0-1-1-3 0-1-1-3 0-1-1-2 0-1-1-3 0-1-1-3 0-1-1-3 0-1-1-2 0-1-1-3 0-1-1-3 0-1-1-4 0-1-1-3 0-1-1-3 0-1-1-3 0-1-1-4 0-1-1-3 0-1-1-4 0-1-1-3 0-1-1-4 0-1-1-3 0-1-1-4 0-1-1-4 0-1-1-4 0-1-1-4 0-1-1-4 0-1-1-4 0-1-1-5 0-1-1-4 0-1-1-4 0-1-1-5 0-1-1-5 0-1-1-4 0-1-1-5 0-1-1-5 0-1-1-5 0-1-1-5 0-1-1-5 0-1-1-6 0-1-1-5 0-1-1-6 0-1-1-5 0-1-1-6 0-1-1-6 0-1-1-6 0-1-1-7 0-1-1-6 0-1-1-6 0-1-1-7 0-1-1-7 0-1-1-7 0-1-1-7 0-1-1-7 0-1-1-8 0-1-1-8 0-1-1-8 0-1-1-8 0-1-1-8 0-1-1-9 0-1-1-9 0-1-1-9 0-1-1-10 0-1-1-10 0-1-1-10 0-1-1-11 0-1-1-11 0-1-1-11 0-1-1-12 0-1-1-13 0-1-1-13 0-1-1-14 0-1-1-15 0-1-1-16 0-1-1-17 0-1-1-18 0-1-1-20 0-1-1zM1385.5 974l-1 1-17 0-1 1-16 0-1 1-15 0-1 1-14 0-1 1-13 0-1 1-13 0-1 1-12 0-1 1-11 0-1 1-11 0-1 1-11 0-1 1-10 0-1 1-10 0-1 1-10 0-1 1-9 0-1 1-9 0-1 1-9 0-1 1-8 0-1 1-8 0-1 1-8 0-1 1-8 0-1 1-8 0-1 1-7 0-1 1-7 0-1 1-7 0-1 1-7 0-1 1-7 0-1 1-6 0-1 1-7 0-1 1-6 0-1 1-6 0-1 1-6 0-1 1-6 0-1 1-5 0-1 1-6 0-1 1-5 0-1 1-6 0-1 1-5 0-1 1-5 0-1 1-5 0-1 1-5 0-1 1-5 0-1 1-5 0-1 1-4 0-1 1-5 0-1 1-4 0-1 1-5 0-1 1-4 0-1 1-4 0-1 1-4 0-1 1-4 0-1 1-4 0-1 1-4 0-1 1-4 0-1 1-3 0-1 1-4 0-1 1-4 0-1 1-3 0-1 1-4 0-1 1-3 0-1 1-3 0-1 1-4 0-1 1-3 0-1 1-3 0-1 1-3 0-1 1-3 0-1 1-3 0-1 1-2 0-1 1-3 0-1 1-3 0-1 1-3 0-1 1-2 0-1 1-3 0-1 1-2 0-1 1-3 0-2.5 1.5 0.5 0.5 3 0 1 1 3 0 1 1 3 0 1 1 3 0 1 1 3 0 1 1 3 0 1 1 4 0 1 1 3 0 1 1 4 0 1 1 3 0 1 1 4 0 1 1 3 0 1 1 4 0 1 1 4 0 1 1 4 0 1 1 4 0 1 1 4 0 1 1 4 0 1 1 5 0 1 1 4 0 1 1 5 0 1 1 4 0 1 1 5 0 1 1 5 0 1 1 5 0 1 1 5 0 1 1 5 0 1 1 5 0 1 1 6 0 1 1 5 0 1 1 6 0 1 1 5 0 1 1 6 0 1 1 6 0 1 1 6 0 1 1 7 0 1 1 6 0 1 1 7 0 1 1 7 0 1 1 6 0 1 1 8 0 1 1 7 0 1 1 7 0 1 1 8 0 1 1 8 0 1 1 8 0 1 1 8 0 1 1 9 0 1 1 9 0 1 1 9 0 1 1 9 0 1 1 10 0 1 1 10 0 1 1 11 0 1 1 10 0 1 1 11 0 1 1 12 0 1 1 12 0 1 1 13 0 1 1 13 0 1 1 14 0 1 1 15 0 1 1 15 0 1 1 17 0 1 1 18 0 1 1 19 0 1 1 21 0 1 1 23 0 1 1 8 0 0.5-0.5-2-2-1-3-2-2-3-7-2-2 0-1-1-1 0-1-6-11 0-2-4-7 0-2-1-1 0-1-1-1 0-2-2-3 0-2-1-1 0-2-2-3 0-2-1-1 0-2-1-1 0-2-1-1 0-3-1-1 0-2-1-1 0-3-1-1 0-3-1-1 0-3-1-1 0-4-1-1 0-4-1-1 0-4-1-1 0-6-1-1 0-8-1-1 0-15-1-1 0-10 1-1-0.5-0.5z"/>
<path fill="#010412" d="M1549.4 778.5l199.1-0.2 9 0.1 1 0.7 45 0.2 3 0.1 1 0.7 35 0.2 2 0.8 29 0.3 2 0.7 25 0.3 1 0.7 22 0.2 2 0.8 20 0.2 2 0.8 18 0.2 2 0.8 18 0.3 1 0.7 33 1.2 1 0.8 15 0.2 1 0.8 14 0.2 2 0.8 13 0.2 1 0.8 13 0.2 1 0.8 12 0.2 2 0.8 24 1.2 1 0.8 11 0.2 2 0.8 10 0.2 1 0.8 22 1.2 1 0.8 10 0.3 1 0.7 9 0.2 1 0.8 10 0.3 1 0.8 9 0.2 1 0.8 18 1.1 1 0.9 8 0.1 1 0.8 18 1.3 1 0.8 7 0.1 1 0.9 8 0.1 1 0.9 7 0.1 1 0.9 16 1.2 1 0.8 7 0.2 1 0.8 6 0.1 1 0.9 7 0.1 1 0.9 7 0.2 1 0.8 6 0.1 1 0.9 6 0.1 1 0.9 6 0.1 1 0.9 6 0.1 1 0.9 6 0.1 1 0.9 6 0.1 1 0.9 6 0.1 1 0.9 5 0.1 1 0.9 6 0.1 1 0.9 5 0.1 1 0.9 6 0.2 1 0.8 5 0.1 1 0.9 5 0.1 1 0.9 5 0.1 1 0.9 11 1.2 1 0.8 4 0.1 1 0.9 5 0.1 1 0.9 4 0.1 1 0.9 5 0.1 1 0.9 4 0.1 1 0.9 5 0.1 1 0.9 4 0.1 1 0.9 4 0.1 1 0.9 4 0.1 1 0.9 4 0.1 1 0.9 4 0.1 1 0.9 4 0.1 1 0.9 4 0.1 1 0.9 9 1.1 1 0.9 3 0.1 1 0.9 4 0.1 1 0.9 3 0.1 1 0.9 4 0.1 1 0.9 3 0.1 1 0.9 4 0.1 1 0.9 3 0.1 1 0.9 3 0.1 1 0.9 3 0.1 1 0.9 3 0.1 1 0.9 4 0.1 1 0.9 3 0.1 1 0.9 6 1.1 1 0.9 3 0.1 1 0.9 3 0.1 1 0.9 7 1.1 1 0.9 2 0.1 1 0.9 7 1.1 1 0.9 2 0.1 1 0.9 3 0.1 1 0.9 2 0.1 1 0.9 3 0.1 1 0.9 2 0.1 1 0.9 2 0.1 1 0.9 3 0.1 1 0.9 2 0.1 1 0.9 2 0.1 1 0.9 2 0.1 1 0.9 2 0.1 1 0.9 2 0 1 1 2 0 1 1 2 0 1 1 2 0 1 1 2 0 1 1 2 0 1 1 2 0.1 1 0.9 5 1.1 3 1.9 5 1.1 3 1.9 2 0 1 1 2 0.1 1 0.9 1 0 1 1 2 0.1 3 1.9 2 0.1 5 2.9 2 0 1 1 1 0 3 2 2 0.1 9 4.9 2 0.1 16 7.9 2 2 9 4 2 2 3 1 2 2 3 1 8 5.9 1 0.1 2 1.9 1 0.1 2 1.9 1 0.1 7 5.9 1 0.1 4 3.9 1 0.1 5 4.9 1 0.1 15.4 15.3 0 1 5 5 0 1 6 7 0 1 4 5 1 3 2 2 0 1 6 11 0.1 2 1.9 3 1.1 5 0.9 1 0.1 2 0.9 1 0.1 3 0.9 1 0.1 3 0.9 1 0.1 4 0.9 1 0.1 5 0.9 1 0.1 10 0.9 1 0 16-0.9 1-0.1 11-0.9 1-0.1 6-0.9 1-0.1 4-0.9 1-0.1 4-0.9 1-0.1 2-0.9 1-0.1 3-0.9 1-1.1 5-1.9 3-0.1 2-7.9 15-0.1 1-1.9 2-1.1 3-1.9 2-0.1 1-1.9 2-0.1 1-6.9 8-0.1 1-6 6 0 1-6.4 6.4-13 12-1 0-9 7.9-1 0.1-3 2.9-1 0.1-2 2-1 0-2 2-1 0-2 2-1 0-2 2-1 0-2 2-1 0-2 1.9-3 1.1-2 1.9-3 1.1-2 1.9-5 2.1-2 1.9-13 6.1-4 2.8-2 0.2-15 7.9-2 0.1-3 1.9-4 2-2 0.1-5 2.8-2 0.2-3 1.9-2 0.1-3 1.9-2 0.1-1 0.9-4 1.1-3 1.8-5 1.2-3 1.8-5 1.2-1 0.9-2 0.1-1 0.9-2 0.1-3 1.8-2 0.2-1 0.9-2 0.1-1 0.9-2 0.1-1 0.9-2 0.1-1 0.9-2 0.1-1 0.9-2 0.1-1 0.9-2 0.1-4 1.8-3 0.2-1 0.9-2 0.1-1 0.9-2 0.1-4 1.9-3 0.1-1 0.9-2 0.1-4 1.9-3 0.1-1 0.9-2 0.1-1 0.9-3 0.1-4 1.9-3 0.1-4 1.8-7 1.2-1 0.9-2 0.1-1 0.8-7 1.2-1 0.9-3 0.1-1 0.9-3 0.1-1 0.9-3 0.1-1 0.9-3 0.1-1 0.9-3 0.1-1 0.9-3 0.1-1 0.9-3 0.1-1 0.9-3 0.1-1 0.8-3 0.2-1 0.8-4 0.2-1 0.9-3 0.1-1 0.8-3 0.2-1 0.8-4 0.2-1 0.9-3 0.1-1 0.8-9 1.2-1 0.9-3 0.1-1 0.8-4 0.2-1 0.9-4 0.1-1 0.9-4 0.1-1 0.9-3 0.1-1 0.8-4 0.2-1 0.8-4 0.2-1 0.8-5 0.2-1 0.9-4 0.1-1 0.9-4 0.1-1 0.8-4 0.2-1 0.8-5 0.2-1 0.9-4 0.1-1 0.8-5 0.2-1 0.9-4 0.1-1 0.8-5 0.2-1 0.8-5 0.2-1 0.9-4 0.1-1 0.8-11 1.2-1 0.8-5 0.2-1 0.8-6 0.2-1 0.9-5 0.1-1 0.8-5 0.2-1 0.8-6 0.2-1 0.9-5 0.1-1 0.8-13 1.2-1 0.9-12 1.1-1 0.8-6 0.2-1 0.7-7 0.3-1 0.8-6 0.2-1 0.8-14 1.2-1 0.8-7 0.2-1 0.8-7 0.2-1 0.8-7 0.2-1 0.8-7 0.2-1 0.8-7 0.2-1 0.8-8 0.2-1 0.8-7 0.2-1 0.8-8 0.2-1 0.8-8 0.2-1 0.8-9 0.2-1 0.8-18 1.2-1 0.8-9 0.2-1 0.8-9 0.2-1 0.8-9 0.2-1 0.8-10 0.2-1 0.8-10 0.2-1 0.8-11 0.2-1 0.8-10 0.2-2 0.8-11 0.2-1 0.8-11 0.2-1 0.8-12 0.2-1 0.8-13 0.2-1 0.8-13 0.2-1 0.8-29 1.2-1 0.8-15 0.2-1 0.8-16 0.2-2 0.8-17 0.2-1 0.8-18 0.2-1 0.8-20 0.2-1 0.7-2 0.1-21 0.2-2 0.8-24 0.2-2 0.8-28 0.2-2 0.8-36 0.2-1 0.8-3 0-49 0.2-2 0.8-155 0-2-0.8-49-0.2-4-0.1-1-0.7-35-0.2-2-0.8-28-0.2-2-0.8-25-0.2-1-0.8-22-0.2-2-0.8-20-0.2-1-0.8-18-0.2-2-0.8-17-0.2-1-0.8-16-0.2-1-0.8-31-1.2-1-0.8-13-0.2-1-0.8-13-0.2-2-0.8-12-0.2-1-0.8-12-0.2-1-0.8-24-1.2-1-0.8-11-0.3-1-0.7-10-0.2-1-0.8-10-0.2-1-0.8-20-1.2-1-0.8-9-0.2-1-0.8-9-0.2-1-0.8-9-0.2-1-0.8-9-0.2-1-0.8-8-0.2-1-0.8-8-0.2-1-0.8-16-1.2-1-0.8-16-1.2-1-0.8-7-0.2-1-0.8-8-0.3-1-0.7-6-0.2-1-0.8-15-1.2-1-0.8-6-0.2-1-0.8-7-0.3-1-0.7-6-0.2-1-0.8-6-0.2-1-0.8-6-0.2-1-0.8-12-1.2-1-0.8-13-1.2-1-0.8-5-0.2-1-0.8-5-0.1-1-0.9-6-0.2-1-0.8-5-0.2-1-0.8-5-0.2-1-0.8-5-0.2-1-0.8-11-1.2-1-0.8-4-0.1-1-0.9-5-0.2-1-0.8-5-0.2-1-0.8-4-0.2-1-0.8-5-0.2-1-0.8-4-0.2-1-0.8-4-0.1-1-0.9-4-0.1-1-0.9-5-0.2-1-0.8-4-0.2-1-0.8-4-0.2-1-0.8-4-0.2-1-0.8-4-0.2-1-0.8-3-0.1-1-0.9-9-1.2-1-0.8-4-0.2-1-0.8-3-0.1-1-0.9-4-0.2-1-0.8-3-0.1-1-0.9-4-0.2-1-0.8-3-0.1-1-0.9-4-0.2-1-0.8-3-0.2-1-0.8-3-0.1-1-0.9-3-0.1-1-0.9-3-0.1-1-0.9-3-0.1-1-0.9-4-0.2-1-0.8-6-1.1-1-0.9-3-0.1-1-0.9-7-1.1-1-0.9-3-0.2-1-0.8-6-1.1-1-0.9-7-1.2-1-0.8-2-0.1-1-0.9-3-0.2-4-1.8-3-0.2-4-1.8-2-0.1-1-0.9-3-0.2-4-1.8-2-0.1-1-0.9-2-0.1-1-0.9-3-0.2-4-1.8-2-0.1-1-0.9-2-0.1-1-0.9-2-0.1-1-0.9-2-0.1-1-0.9-2-0.1-1-0.9-2-0.1-1-0.9-2-0.1-1-0.9-2-0.1-1-0.9-2-0.2-3-1.8-2-0.1-1-0.9-5-1.1-3-1.9-5-1.1-3-1.9-2-0.1-2-1-1-0.9-2-0.1-3-1.9-2-0.1-3-1.9-2-0.1-5-2.9-2-0.1-5-2.9-2-0.1-11-5.9-2-0.1-14-7-2-1.9-9-4.1-2-1.9-5-2.1-2-1.9-1 0-4-3-3-1.1-8-5.9-1-0.1-2-1.9-1-0.1-11-8.9-1 0-4-4-1 0-6-6-1-0.1-15.4-15.3 0-1-9-10-0.1-1-1.9-2-0.1-1-1.9-2-0.1-1-1.9-2-0.1-1-1.9-2-1.1-3-1.9-2-1.1-3-0.9-1-0.1-1-2.9-5-0.1-2-1.9-3-0.1-2-0.9-1-0.1-2-0.9-1-0.1-2-0.9-1-0.1-2-0.9-1-0.1-2-0.9-1-0.1-4-0.9-1-0.1-4-0.9-1-0.1-5-0.9-1-0.1-9-0.9-1 0-23 0.9-1 0.1-8 0.9-1 0.1-5 0.9-1 0.1-4 0.9-1 0.1-3 0.9-1 0.1-2 0.9-1 0.1-3 0.9-1 0.1-2 0.9-1 0.1-1 0.9-1 0.1-2 8-15 0-1 2-2 0-1 3-4 0-1 6-7 0-1 4-4 0.1-1 18.3-18.3 1-0.1 5-4.9 1-0.1 8-6.9 1-0.1 2-1.9 1-0.1 3-2.9 1 0 5-4 3-1 5-4 5-2 2-2 5-2 2-1.9 24-12 2-0.1 3-2 1 0 3-1.9 2-0.1 5-2.9 2-0.1 3-1.9 2-0.1 3-2 2 0 1-1 1 0 1-0.9 2-0.1 3-1.9 5-1.1 3-1.9 5-1.1 1-0.9 2-0.1 1-1 2 0 1-1 2 0 3-1.9 2-0.1 1-0.9 2-0.1 4-1.9 3-0.1 1-1 2 0 1-1 2 0 1-0.9 2-0.1 1-0.9 2-0.1 1-0.9 3-0.1 1-1 2 0 1-0.9 2-0.1 1-0.9 3-0.1 1-0.9 2-0.1 1-0.9 3-0.1 1-0.9 2-0.1 1-0.9 3-0.1 1-0.9 2-0.1 1-0.9 7-1.1 1-0.9 3-0.1 1-0.9 2-0.1 1-0.9 7-1.1 1-0.9 3-0.1 1-0.9 3-0.1 1-0.9 3-0.1 1-0.9 3-0.1 1-0.9 4-0.1 1-0.9 3-0.1 1-0.9 3-0.1 1-0.9 4-0.1 1-0.9 3-0.1 1-0.9 3-0.1 1-0.9 4-0.1 1-0.9 4-0.1 1-0.9 3-0.1 1-0.9 4-0.1 1-0.9 4-0.1 1-0.9 4-0.1 1-0.9 3-0.1 1-0.8 4-0.2 1-0.8 5-0.2 1-0.9 4-0.1 1-0.9 4-0.1 1-0.9 4-0.1 1-0.9 4-0.1 1-0.8 5-0.2 1-0.9 4-0.1 1-0.9 5-0.1 1-0.9 5-0.1 1-0.9 4-0.1 1-0.9 5-0.1 1-0.9 5-0.1 1-0.9 5-0.1 1-0.9 5-0.1 1-0.9 5-0.1 1-0.9 6-0.1 1-0.9 5-0.1 1-0.9 5-0.1 1-0.8 13-1.2 1-0.9 12-1.1 1-0.8 6-0.2 1-0.8 6-0.2 1-0.8 7-0.2 1-0.9 6-0.1 1-0.9 7-0.1 1-0.9 6-0.1 1-0.8 7-0.2 1-0.9 7-0.1 1-0.9 7-0.1 1-0.9 7-0.1 1-0.8 8-0.2 1-0.9 7-0.1 1-0.8 8-0.2 1-0.8 8-0.2 1-0.9 18-1.2 1-0.8 8-0.1 1-0.8 9-0.2 1-0.9 9-0.1 1-0.9 9-0.1 1-0.8 10-0.3 1-0.8 10-0.2 1-0.8 10-0.2 1-0.8 22-1.2 1-0.7 11-0.3 2-0.8 11-0.2 1-0.8 12-0.2 1-0.8 13-0.2 1-0.8 13-0.2 1-0.8 28-1.2 2-0.8 14-0.2 2-0.8 15-0.2 1-0.7 17-0.3 1-0.7 38-1.3 2-0.8 20-0.2 1-0.7 23-0.3 2-0.8 24-0.2 2-0.8 29-0.2 2-0.8 34-0.2 1-0.7 4-0.1 44-0.2zM1880.5 971.8l-0.8 0.7 0.2 1 8.7 18 0.3 2 1.8 3 0.2 2 1.8 3 1.2 5 2.7 6 2.3 9 1.7 4 0.3 3 0.8 1 0.2 3 0.8 1 0.2 3 0.7 1 0.3 4 0.8 1 0.2 4 0.8 1 1.2 11 0.8 2 0.2 7 0.7 1 0.3 15 0.7 2-0.9 23-0.8 3-0.1 4 0.7 0.9 14-0.2 2.4-0.7 36.6-1.3 2.2-0.7 31.8-1.3 2.2-0.7 13.8-0.3 1.8-0.7 13.2-0.3 1.7-0.7 12.3-0.3 2-0.7 25-1.3 1.7-0.7 23.3-1.3 1.5-0.7 9.5-0.2 2.2-0.8 9.8-0.2 1.6-0.8 9.4-0.2 1.7-0.8 19.3-1.2 1.8-0.8 8.2-0.2 1.9-0.8 8.1-0.2 1.7-0.8 7.3-0.2 2.3-0.8 7.7-0.2 1.6-0.8 7.4-0.2 1.7-0.8 15.3-1.2 2.3-0.8 6.7-0.2 1.8-0.8 6.2-0.2 2.1-0.8 21.9-2.2 1.9-0.8 6.1-0.2 1.5-0.8 5.5-0.2 1.9-0.8 5.1-0.2 2.3-0.8 5.7-0.2 1.4-0.8 5.6-0.2 1.5-0.8 18.5-2.2 1.7-0.8 11.3-1.2 1.6-0.8 4.4-0.2 1.9-0.8 4.1-0.2 2-0.8 10-1.2 2-0.8 4-0.2 1.8-0.8 4.2-0.2 1.6-0.8 9.4-1.2 1.7-0.8 3.3-0.1 7.5-1.9 3.5-0.2 1.7-0.8 3.3-0.1 1.9-0.9 3.1-0.1 1.9-0.9 3.1-0.1 1.9-0.9 3.1-0.1 1.8-0.9 12.2-2.1 2-0.9 20-4.1 22.2-5.9-0.2-1-2-0.6-43-11.3-35-8-7.1-1.1-1.9-0.9-3-0.1-2-0.9-12.9-2.1-2.1-0.9-3.1-0.1-1.9-0.9-14-2.1-2-0.9-3.4-0.1-1.6-0.8-4-0.2-2-0.9-9.4-1.1-1.6-0.8-4.2-0.2-1.8-0.8-10.2-1.2-1.8-0.8-4.3-0.2-1.7-0.8-4.6-0.2-1.4-0.8-5-0.2-2-0.8-4.4-0.2-1.6-0.8-11.7-1.2-1.3-0.8-5.5-0.2-1.5-0.8-5.5-0.2-1.5-0.8-5.6-0.2-1.4-0.8-5.9-0.2-2.1-0.8-5.2-0.2-1.8-0.8-5.8-0.2-1.2-0.8-6.4-0.2-1.6-0.8-6.3-0.2-1.7-0.8-6.3-0.2-1.7-0.8-6.5-0.2-1.5-0.8-6.9-0.2-1.1-0.8-7.4-0.2-1.6-0.8-7.2-0.2-1.8-0.8-7.2-0.2-1.8-0.8-7.3-0.2-1.7-0.8-7.8-0.2-1.2-0.7-8.5-0.3-1.5-0.7-8.5-0.3-1.5-0.7-8.7-0.3-1.3-0.7-9.3-0.3-1.7-0.7-9.2-0.3-1.8-0.7-9.4-0.3-1.6-0.7-22-1.3-2-0.7-10.7-0.3-1.3-0.7-11.7-0.3-1.3-0.7-12.3-0.3-1.7-0.7-12.6-0.3-1.4-0.7-13.5-0.3-1.5-0.7-31-1.3-2-0.7-16-0.3-2-0.7-17-0.3-2-0.7-19-0.3zM2503.5 1037.1l0 1.2 2.6-0.8zM2554.5 1004.5l-9 3.2-10 5.8-9.9 8-10.1 11-3 1.2-1 1.3-2-0.1-1 1.3-2-0.1-0.4 0.4 0.4 0.8 30-11.1 11-5.1 9.6-5.6 7.1-6 1.2-2 0.2-2-1.1-1.1-3-0.8zM743.5 1004.2l-1.2 1.3-0.2 1 1.5 3 4.3 4 7.7 5 19.9 9.5 26 9.4 0.4-0.9-0.4-0.4-2 0.1-1-1.3-2 0.1-1-1.3-3.2-1.2-12.2-13-12.6-9.1-7-3.5-7-2.4-6-0.9zM802.5 1037.3l-0.8 0.2 2.8 0.9 0.3-0.9zM805.5 1038.3l-0.7 0.2 2.7 0.8 0.3-0.8zM1383.5 974.5l-16 0.3-2.1 0.7-30.9 1.3-1.7 0.7-13.3 0.3-1.7 0.7-12.3 0.3-2 0.7-12 0.3-1.5 0.7-11.5 0.3-1.5 0.7-10.5 0.3-2 0.7-22 1.3-1.8 0.7-9.2 0.3-2 0.7-9 0.3-2 0.7-9 0.3-1.5 0.7-8.5 0.3-1.7 0.7-8.3 0.2-1.7 0.8-17.3 1.2-1.8 0.8-16.2 1.2-2 0.8-7 0.2-2 0.8-7 0.2-1.4 0.8-6.6 0.2-1.7 0.8-6.3 0.2-1.9 0.8-6.1 0.2-1.9 0.8-6.1 0.2-1.8 0.8-6.2 0.2-1.5 0.8-5.5 0.2-2 0.8-6 0.2-1.4 0.8-5.6 0.2-1.6 0.8-5.4 0.2-1.7 0.8-5.3 0.2-1.7 0.8-5.3 0.2-1.5 0.8-11.5 1.2-1.8 0.8-11.2 1.2-1.6 0.8-4.4 0.2-1.8 0.8-4.2 0.2-2 0.8-10 1.2-1.9 0.8-4.1 0.2-1.8 0.8-4.2 0.2-1.6 0.8-9.4 1.2-7.2 1.8-3.8 0.1-1.6 0.9-3.4 0.1-1.9 0.9-3.1 0.1-2.1 0.9-22.9 4.1-2.1 0.9-20.9 4.1-33 7.9-32 8.6-1.2 0.4-0.2 1 26.4 6.9 25.2 5.1 1.8 0.9 3 0.1 2 0.9 13 2.1 2 0.9 3.1 0.1 1.9 0.9 3.3 0.1 1.7 0.8 9.1 1.2 1.9 0.8 9.2 1.2 1.8 0.8 4 0.2 2 0.8 3.8 0.2 14.2 2.8 3.9 0.2 2.1 0.8 4.2 0.2 1.8 0.8 11.1 1.2 1.9 0.8 11.4 1.2 1.6 0.8 5.3 0.2 1.7 0.8 5.4 0.2 1.6 0.8 5.5 0.2 1.5 0.8 5.8 0.2 2.2 0.8 20.7 2.2 2.3 0.8 5.6 0.2 1.4 0.8 6.7 0.2 2.3 0.8 6 0.2 2 0.8 6.5 0.2 1.5 0.8 7.2 0.2 1.8 0.8 16.2 1.2 1.8 0.8 7.5 0.2 1.5 0.8 8.1 0.2 1.9 0.8 8 0.2 2 0.8 8.1 0.2 1.9 0.8 8.4 0.2 1.6 0.8 9.1 0.2 1.9 0.8 9.2 0.2 1.8 0.8 9.5 0.2 2.5 0.8 9.3 0.2 1.7 0.8 10.5 0.2 1.5 0.7 11.1 0.3 1.9 0.7 11.2 0.3 1.8 0.7 26.1 1.3 1.9 0.7 13 0.3 2 0.7 13.6 0.3 2.4 0.7 14.1 0.3 1.9 0.7 15.6 0.3 2.4 0.7 16 0.3 3 0.7 17.4 0.3 2.6 0.7 19 0.3 3 0.7 21 0.3 3 0.7 8 0.1 0.6-0.8-1.7-2-6.3-12-1.7-2-11-23-0.3-2-1.8-3-0.2-2-2.8-6-0.2-2-1.7-3-3.3-12-1.7-4-1.3-7-0.8-1-0.2-3-0.7-1-0.3-4-0.8-1-0.2-4-0.8-1-0.2-4-0.8-2-0.2-5-0.7-1-0.3-8-0.8-2-0.2-14-0.6-2 0-8.5 0.6-1.5-0.6-0.9-13 0.2z"/>
<path fill="#020616" d="M1549.8 778.5l197.7-0.2 10 0.2 1 0.7 45 0.2 3 0.1 1 0.7 35 0.2 2 0.8 29 0.2 2 0.8 24 0.2 2 0.8 22 0.2 2 0.8 20 0.2 2 0.8 37 1.2 2 0.8 33 1.2 1 0.8 15 0.2 1 0.8 14 0.2 2 0.8 13 0.2 1 0.8 13 0.2 1 0.8 12 0.2 2 0.8 24 1.2 1 0.8 11 0.2 2 0.8 10 0.2 1 0.8 11 0.2 1 0.8 10 0.2 1 0.8 10 0.2 1 0.8 9 0.2 1 0.8 10 0.3 1 0.7 9 0.3 1 0.7 18 1.2 1 0.8 8 0.2 1 0.8 9 0.3 1 0.7 8 0.3 1 0.7 7 0.2 1 0.8 8 0.2 1 0.8 7 0.2 1 0.8 16 1.2 1 0.8 7 0.3 1 0.7 6 0.2 1 0.8 7 0.2 1 0.8 7 0.3 1 0.7 6 0.2 1 0.8 6 0.2 1 0.8 6 0.2 1 0.8 6 0.2 1 0.8 6 0.2 1 0.8 6 0.2 1 0.8 6 0.2 1 0.8 5 0.2 1 0.8 6 0.2 1 0.8 5 0.2 1 0.8 6 0.3 1 0.8 5 0.1 1 0.9 5 0.1 1 0.8 5 0.2 1 0.9 5 0.1 1 0.9 10 1.1 1 0.8 5 0.2 1 0.9 4 0.1 1 0.8 5 0.2 1 0.9 4 0.1 1 0.8 5 0.2 1 0.9 4 0.1 1 0.9 4 0.1 1 0.9 4 0.1 1 0.9 4 0.1 1 0.9 4 0.1 1 0.9 4 0.1 1 0.9 4 0.1 1 0.9 9 1.1 1 0.9 3 0.1 1 0.9 4 0.1 1 0.9 3 0.1 1 0.9 4 0.1 1 0.9 3 0.1 1 0.9 4 0.1 1 0.9 3 0.1 1 0.9 3 0.1 1 0.9 3 0.1 1 0.9 3 0 1 1 4 0.1 1 0.9 3 0.1 1 0.9 6 1 1 1 3 0 1 1 3 0.1 1 0.9 7 1.1 1 0.9 2 0 1 1 7 1.1 1 0.9 2 0 1 1 3 0.1 1 0.9 2 0 1 1 3 0.1 1 0.9 2 0.1 1 0.9 2 0 1 1 3 0.1 4 1.9 2 0.1 1 0.9 2 0 1 1 2 0 1 1 2 0 1 1 2 0 1 1 2 0 1 1 2 0 1 1 2 0 1 1 2 0 1 1 2 0 1 1 5 1.1 3 1.9 5 1 3 2 2 0 1 1 2 0.1 2 0.9 1 1 2 0 3 2 2 0.1 5 2.9 2 0 1 1 1 0 3 1.9 2 0.1 9 4.9 2 0.1 16 8 2 1.9 9 4.1 2 1.9 3 1.1 2 1.9 3 1.1 8 5.9 1 0.1 2 1.9 1 0.1 2 1.9 1 0.1 7 5.9 1 0.1 4 3.9 1 0 5 5 1 0.1 15.3 15.2 0 1 5 5 0.1 1 2.9 3 0.1 1 4.9 6 0.1 1 2.9 4 0.1 1 1.9 2 0.1 1 5.9 11 0.1 2 1.9 3 1.1 5 1 1 0 2 1 1 0 3 1 1 0 3 1 1 0 4 1 1 0 5 1 1 0 10 0.9 1 0.1 1-0.1 15-0.9 1 0 11-1 1 0 6-1 1 0 4-1 1 0 4-1 1 0 2-1 1 0 3-1 1-1 5-2 3 0 2-8 15 0 1-2 2-1.1 3-1.9 2-0.1 1-1.9 2-0.1 1-6.9 8-0.1 1-5.9 6-0.1 1-6.3 6.3-13 12-1 0.1-9 7.9-1 0.1-3 2.8-1 0.1-2 2-1 0.1-2 1.9-1 0.1-2 1.9-1 0.1-2 1.9-1 0.1-2 1.9-1 0.1-2 1.9-3 1.1-2 1.9-3 1.1-2 1.9-5 2.1-2 1.8-13 6.1-4 2.9-2 0.1-15 7.9-2 0.1-3 2-4 1.9-2 0.1-5 2.9-2 0.1-3 1.9-2 0.1-3 1.9-2 0.1-1 1-4 1-3 1.8-5 1.2-3 1.8-5 1.2-1 0.9-2 0.1-1 0.9-2 0.1-3 1.9-2 0.1-1 0.9-2 0.1-1 0.9-2 0.1-1 0.9-2 0.1-1 0.9-2 0.1-1 0.9-2 0.1-1 0.9-2 0.1-4 1.8-3 0.2-1 0.9-2 0.1-1 0.9-2 0.1-4 1.9-3 0.1-1 0.9-2 0.1-4 1.9-3 0.1-1 0.9-2 0.1-1 0.9-3 0.1-4 1.9-3 0.1-4 1.9-7 1.1-4 1.8-7 1.2-1 0.9-3 0.1-1 0.9-3 0.1-1 0.9-3 0.1-1 0.9-3 0.1-1 0.9-3 0.1-1 0.9-3 0.1-1 0.9-3 0.1-1 0.9-3 0.1-1 0.9-3 0.1-1 0.8-4 0.2-1 0.9-3 0.1-1 0.9-3 0.1-1 0.8-4 0.2-1 0.9-3 0.1-1 0.8-9 1.2-1 0.9-3 0.1-1 0.8-4 0.2-1 0.9-4 0.1-1 0.9-4 0.1-1 0.9-3 0.1-1 0.8-4 0.2-1 0.8-4 0.2-1 0.8-5 0.2-1 0.9-4 0.1-1 0.9-4 0.1-1 0.9-4 0.1-1 0.8-5 0.2-1 0.9-4 0.1-1 0.8-5 0.2-1 0.9-4 0.1-1 0.8-5 0.2-1 0.9-5 0.1-1 0.9-4 0.1-1 0.8-11 1.2-1 0.8-5 0.2-1 0.8-6 0.2-1 0.9-5 0.1-1 0.9-5 0.1-1 0.8-6 0.2-1 0.9-5 0.1-1 0.8-13 1.2-1 0.9-12 1.1-1 0.8-6 0.2-1 0.7-7 0.3-1 0.9-6 0.1-1 0.8-14 1.2-1 0.8-7 0.2-1 0.8-7 0.2-1 0.9-7 0.1-1 0.8-7 0.2-1 0.8-7 0.2-1 0.8-8 0.2-1 0.8-7 0.2-1 0.8-8 0.2-1 0.8-8 0.2-1 0.8-9 0.2-1 0.8-18 1.2-1 0.8-9 0.2-1 0.8-9 0.2-1 0.8-9 0.2-1 0.8-10 0.2-1 0.8-10 0.2-1 0.8-11 0.2-1 0.8-10 0.2-2 0.8-11 0.2-1 0.8-11 0.2-1 0.8-12 0.2-1 0.8-13 0.2-1 0.8-13 0.2-1 0.8-29 1.2-1 0.8-15 0.2-2 0.8-15 0.2-2 0.8-17 0.2-1 0.8-18 0.2-2 0.8-43 1.2-2 0.8-24 0.2-2 0.8-28 0.2-2 0.8-36 0.3-1 0.7-3 0-49 0.3-1 0.6-2 0.1-153 0-2-0.1-1-0.6-49-0.3-4-0.1-1-0.7-35-0.2-2-0.8-28-0.2-2-0.8-24-0.2-2-0.8-21-0.2-2 0-1-0.8-20-0.2-1-0.8-18-0.2-2-0.8-16-0.2-2-0.8-16-0.2-1-0.8-31-1.2-1-0.8-13-0.2-1-0.8-13-0.2-2-0.8-12-0.2-1-0.8-12-0.2-1-0.8-24-1.2-1-0.8-10-0.2-2-0.8-10-0.2-1-0.8-10-0.2-1-0.8-20-1.2-1-0.8-9-0.2-1-0.8-9-0.2-1-0.8-9-0.2-1-0.8-18-1.2-1-0.8-8-0.2-1-0.8-8-0.2-1-0.8-7-0.1-1-0.9-8-0.2-1-0.8-7-0.2-1-0.8-7-0.1-1-0.9-15-1.1-1-0.9-15-1.2-1-0.8-6-0.2-1-0.8-7-0.3-1-0.7-6-0.2-1-0.8-6-0.2-1-0.8-6-0.2-1-0.8-12-1.1-1-0.9-13-1.2-1-0.8-5-0.2-1-0.8-5-0.1-1-0.9-6-0.2-1-0.8-5-0.2-1-0.8-5-0.2-1-0.8-5-0.2-1-0.8-11-1.2-1-0.8-4-0.1-1-0.9-5-0.1-1-0.9-5-0.2-1-0.8-4-0.1-1-0.9-5-0.2-1-0.8-4-0.2-1-0.8-4-0.1-1-0.9-4-0.1-1-0.9-5-0.2-1-0.8-4-0.2-1-0.8-4-0.2-1-0.8-4-0.2-1-0.8-4-0.2-1-0.8-3-0.1-1-0.9-9-1.1-1-0.9-4-0.2-1-0.8-3-0.1-1-0.9-4-0.2-1-0.8-3-0.1-1-0.9-4-0.2-1-0.8-3-0.1-1-0.9-4-0.2-1-0.8-3-0.1-1-0.9-3-0.1-1-0.9-3-0.1-1-0.9-3-0.1-1-0.9-3-0.1-1-0.9-4-0.2-1-0.8-6-1.1-1-0.9-3-0.1-1-0.9-7-1.1-1-0.9-3-0.1-1-0.9-6-1.1-1-0.9-7-1.2-4-1.8-3-0.2-4-1.8-3-0.2-4-1.8-2-0.1-1-0.9-3-0.1-4-1.9-2-0.1-1-0.9-2-0.1-1-0.9-3-0.1-4-1.9-2-0.1-1-0.9-2-0.1-1-0.9-2-0.1-1-0.9-2-0.1-1-0.9-2-0.1-1-0.9-2-0.1-1-0.9-2-0.1-1-0.9-2-0.1-1-0.9-2-0.1-3-1.9-2-0.1-1-0.9-5-1.1-3-1.9-5-1.1-3-1.9-2-0.1-2-0.9-1-1-2-0.1-3-1.9-2-0.1-3-1.9-2-0.1-5-2.9-2-0.1-5-2.9-2-0.1-11-5.9-2-0.1-14-7-2-1.9-9-4.1-2-1.8-5-2.2-2-1.9-1 0-4-3-3-1.1-11-7.9-1-0.1-11-8.8-1-0.1-4-3.9-1-0.1-6-5.9-1-0.1-15.3-15.3-0.1-1-8.9-10-0.1-1-1.9-2-0.1-1-2-2 0-1-2-2 0-1-1.9-2-1.1-3-1.9-2-1.1-3-1-1 0-1-2.9-5-0.1-2-2-3 0-2-1-1 0-2-1-1 0-2-1-1 0-2-1-1 0-2-0.9-1-0.1-4-1-1 0-4-1-1 0-5-1-1 0-9-0.9-1-0.1-23 1-1 0-8 1-1 0-5 1-1 0-4 1-1 0-3 1-1 0-2 1-1 0.1-3 0.9-1 0.1-2 0.9-1 0-1 1-1 0.1-2 7.9-15 0.1-1 1.9-2 0.1-1 2.9-4 0.1-1 5.9-7 0.1-1 4-4 0-1 18.3-18.3 1 0 5-5 1 0 8-6.9 1-0.1 2-1.9 1-0.1 3-2.9 1-0.1 5-3.9 3-1.1 5-3.9 5-2.1 2-1.9 5-2.1 2-1.9 24-11.9 2-0.2 3-1.9 1 0 3-2 2 0 5-3 2 0 3-2 2 0 3-2 2 0 1-1 1 0 1-1 2 0 3-1.9 5-1.1 3-1.9 5-1.1 1-1 2 0 1-1 2 0 1-1 2 0 3-1.9 2-0.1 1-0.9 2-0.1 4-1.9 3-0.1 1-1 2 0 1-1 2 0 1-1 2 0 1-0.9 2-0.1 1-0.9 3-0.1 1-1 2 0 1-1 2 0 1-0.9 3-0.1 1-1 2 0 1-0.9 3-0.1 1-1 2 0 1-0.9 3-0.1 1-1 2 0 1-0.9 7-1.1 1-0.9 3-0.1 1-1 2 0 1-0.9 7-1.1 1-0.9 3-0.1 1-0.9 3-0.1 1-0.9 3-0.1 1-0.9 3-0.1 1-0.9 4-0.1 1-0.9 3-0.1 1-0.9 3-0.1 1-0.9 4-0.1 1-0.9 3-0.1 1-0.9 3-0.1 1-0.9 9-1.1 1-0.9 3-0.1 1-0.9 4-0.1 1-0.9 4-0.1 1-0.9 4-0.1 1-0.9 3-0.1 1-0.8 10-1.3 1-0.8 4-0.2 1-0.8 4-0.1 1-0.9 4-0.1 1-0.9 4-0.1 1-0.9 5-0.2 1-0.8 4-0.1 1-0.9 5-0.2 1-0.8 5-0.2 1-0.8 4-0.1 1-0.9 5-0.1 1-0.9 5-0.2 1-0.8 5-0.2 1-0.8 5-0.2 1-0.8 5-0.2 1-0.8 6-0.2 1-0.8 5-0.2 1-0.8 5-0.2 1-0.8 13-1.2 1-0.8 12-1.2 1-0.8 6-0.2 1-0.8 6-0.2 1-0.7 7-0.3 1-0.8 6-0.2 1-0.8 7-0.2 1-0.8 6-0.2 1-0.7 7-0.3 1-0.8 7-0.2 1-0.8 7-0.2 1-0.8 7-0.2 1-0.7 8-0.3 1-0.8 7-0.2 1-0.7 8-0.3 1-0.8 8-0.2 1-0.8 18-1.2 1-0.8 8-0.2 1-0.7 9-0.3 1-0.8 9-0.2 1-0.8 9-0.2 1-0.7 10-0.3 1-0.8 10-0.2 1-0.8 10-0.2 1-0.8 22-1.2 2-0.8 10-0.2 2-0.8 11-0.2 1-0.8 12-0.2 1-0.8 13-0.2 1-0.8 13-0.2 1-0.8 28-1.2 2-0.8 14-0.2 2-0.8 15-0.2 2-0.8 16-0.2 1-0.8 38-1.2 2-0.8 20-0.2 1-0.8 23-0.2 1-0.8 2 0 23-0.2 1-0.7 2-0.1 28-0.2 2-0.8 34-0.2 1-0.7 2-0.1 46-0.2zM1577.5 1121.5l21 0.4 0-0.4zM1709.5 1121.5l0 0.4 20.9-0.4zM1775.5 1120.5l0 0.4 11.1-0.4zM1816.5 1119.5l0 0.4 8.5-0.4zM1876.5 1117.4l0 0.5 6.3-0.4zM1880.5 971.7l-0.9 0.8 0.2 1 8.7 18 0.4 2 1.7 3 0.3 2 1.7 3 1.3 5 2.6 6 4 13 0.4 3 0.7 1 0.3 3 1.6 5 0.4 4 0.7 1 0.3 4 0.7 1 1.3 11 0.7 2 0.3 7 0.6 1 0.4 15 0.6 3-0.9 22-0.7 3-0.2 4 0.8 1 34-1.2 5.6-0.8 13.4-0.2 5.1-0.8 11.9-0.2 5.5-0.8 11.5-0.2 4.9-0.8 11.1-0.2 4.5-0.8 10.5-0.2 4.3-0.8 36.7-2.2 4-0.8 21-1.2 3.7-0.8 7.3-0.2 37.4-3.8 6.6-0.2 3.8-0.8 6.2-0.2 3.9-0.8 6.1-0.2 3.7-0.8 33.3-3.1 3.6-0.9 13.4-1.1 3.7-0.9 36.3-4.1 49-7 49-8 47-8.9 38-8.5 35-8.8 30-9 26-9.4 20.4-9.3 8.4-5 5.4-4 3.6-4 1.3-3-0.5-2-1.6-1.3-6-1-8 1.2-10 3.4-10 5.3-9 6.3-6.9 6.1-8.6 9-3.3 2-2.9 4-1.3 0.1-1 1.1-2 0.1-1 1.1-2 0-1 1.1-2-0.1-1 1.2-2-0.1-1 1.2-2-0.2-1 1.2-3-0.2-1 1.2-2-0.2-1 1.2-2-0.2-1 1.3-3-0.3-1 1.2-2-0.3-1 1.3-3-0.4-1 1.2-69-16.1-55-11.4-63-10.9-40-6-3.9-0.1-3.1-0.9-19-2.1-3-0.9-4.7-0.1-27.3-3.9-5.1-0.1-2.9-0.8-5.7-0.2-3.3-0.8-23.6-2.2-3.4-0.8-6.1-0.2-2.9-0.8-6.8-0.2-3.2-0.8-17-1.2-3-0.8-7.5-0.2-3.5-0.8-7.4-0.2-3.6-0.8-7.6-0.2-3.4-0.8-32.8-2.2-3.2-0.8-9.8-0.2-3.2-0.8-10.3-0.2-3.7-0.8-10.5-0.2-3.5-0.8-11.4-0.2-3.6-0.8-12.1-0.2-3.9-0.8-12.7-0.2-4.3-0.8-13.5-0.2-4.5-0.8-14.6-0.2-4.4-0.8-16.4-0.2zM1381.5 974.4l-14 0.3-4.5 0.8-12.5 0.2-4.1 0.8-26.9 1.2-3.7 0.8-10.3 0.2-3.9 0.8-10.1 0.2-3.4 0.8-9.6 0.2-3.4 0.8-32.6 2.2-3.6 0.8-7.4 0.2-3.8 0.8-7.2 0.2-3.7 0.8-7.3 0.2-3.2 0.8-6.8 0.2-3.5 0.8-25.5 2.2-3.6 0.8-32.4 3.2-3.1 0.8-4.9 0.1-3.4 0.9-43.6 5.1-3.1 0.9-3.9 0.1-47 7-58 10-60 12.2-69 16.1-1-1.1-3 0.4-1-1.3-2 0.3-1-1.2-3 0.2-1-1.2-2 0.2-1-1.2-3 0.3-1-1.3-2 0.2-1-1.2-2 0.1-1-1.1-2 0.1-1-1.2-2 0.1-1-1.1-2 0-1-1.1-2-0.1-1-1.1-1.5-0.1-2.9-4-3.6-2.3-8.3-8.7-6.7-5.9-9-6.4-10-5.3-10-3.5-8-1.2-6 0.9-1.8 1.4-0.5 2 2 4 4.1 4 7.3 5 9.2 5 24.7 10.5 30 10.1 37 10.1 49 11.3 41 7.9 47 8 85 12 4.8 0.1 47.2 5.9 5.5 0.1 3.5 0.8 36.4 3.2 3.6 0.8 7 0.2 4 0.8 7 0.2 4 0.8 31.2 2.2 3.8 0.8 8.8 0.2 4.2 0.8 8.8 0.2 4.2 0.8 23.5 1.2 4.5 0.8 10.3 0.2 4.7 0.8 10.9 0.2 5.1 0.8 11.3 0.2 4.7 0.8 31.2 1.2 5.8 0.8 14.1 0.2 5.9 0.8 15.7 0.2 6.3 0.8 32 1.1 0.7-0.9-1.8-2-6.2-12-2.8-4-9.9-21-0.3-2-1.8-3-0.2-2-2.9-6-0.2-2-1.6-3.1-5-16-2.3-10.9-0.7-1-0.4-4-0.7-1-0.3-4-0.7-1-0.2-4-0.8-2-0.2-5-0.8-2-1.9-26 0.1-7 0.6-2-0.7-1-13 0.2zM1521.5 1120.5l10 0.4 0-0.4z"/>
<path fill="#02081b" d="M1553.4 778.5l194.1-0.1 10 0.3 1 0.6 44 0.2 4 0.1 1 0.7 34.4 0.2 2.6 0.8 55 1.2 2 0.8 22 0.2 2 0.8 19.9 0.2 2.1 0.8 37 1.2 2 0.8 32.8 1.2 1.2 0.8 14.9 0.2 1.1 0.8 14 0.2 2 0.8 12.8 0.2 1.2 0.8 12.8 0.2 1.2 0.8 12 0.2 2 0.8 24 1.2 1 0.8 11 0.2 2 0.8 10 0.2 1 0.8 21.7 1.2 1.3 0.8 9.5 0.2 1.5 0.8 9 0.2 1 0.8 9.4 0.2 1.6 0.8 8.5 0.2 1.5 0.8 18 1.2 1 0.8 8 0.2 1 0.8 8.4 0.2 1.6 0.8 7.4 0.2 1.6 0.8 7 0.2 1 0.8 7.8 0.2 1.2 0.8 7 0.2 1 0.8 7.5 0.2 1.5 0.8 6.6 0.2 1.4 0.8 14 1.2 1 0.8 7 0.2 1 0.8 6.5 0.2 1.5 0.8 6 0.2 1 0.8 6 0.2 1 0.8 6 0.2 1 0.8 6 0.2 1 0.8 6 0.2 1 0.8 6 0.2 1 0.8 5.9 0.2 1.1 0.8 5 0.2 1 0.8 6 0.2 1 0.8 5 0.2 1 0.8 11.8 1.2 1.2 0.8 4.9 0.2 1.1 0.8 4.9 0.2 1.1 0.8 4.8 0.2 1.2 0.8 10 1.2 1 0.8 10 1.1 1 0.9 10 1.2 1 0.8 10 1.2 1 0.8 4 0.2 1 0.8 4 0.2 1 0.8 4 0.1 1 0.9 4 0.1 1 0.9 4 0.2 1 0.8 4 0.2 1 0.8 8.7 1.2 1.3 0.8 3 0.2 1 0.8 4 0.2 1 0.8 3 0.1 1 0.9 4 0.2 1 0.8 3 0.1 1 0.9 3.9 0.2 1.1 0.8 3 0.2 1 0.8 3 0.1 1 0.9 3 0.1 1 0.9 3 0.1 1 0.9 7.9 1.2 1.1 0.9 6 1 1 0.9 3 0.1 1 0.9 3 0.1 1 0.9 7 1.2 1 0.8 2 0.1 1 0.9 7 1.2 1 0.9 2 0 1 0.9 3 0.2 1 0.9 2 0 1 0.9 3 0.2 1 0.9 2 0 1 0.9 2 0.1 1 0.9 3 0.2 4 1.9 2 0 1 0.9 2 0.1 1 0.9 2 0.1 1 0.9 2 0.1 1 0.9 2 0.1 1 0.9 2 0.1 1 0.9 2 0.1 1 0.9 2 0.1 1 0.9 2 0.1 1 0.9 2 0.1 1 0.9 5 1.2 3 1.8 5 1.1 3 1.9 2 0.1 1 0.9 2 0.1 2 1 1 0.9 2 0.1 3 1.9 2 0.1 5 2.9 2 0.1 2 1 3 1.9 2 0.1 9 4.9 2 0.1 16 8 2 1.9 9 4.1 2 1.9 3 1.1 2 1.9 3 1.1 8 5.9 1 0 2 2 1 0 2 2 1 0 7 6 1 0 4 4 1 0 5 5 1 0 15.2 15.2 0.1 1 4.9 5 0.1 1 3 3 0 1 5 6 0 1 3 4 0 1 2 2 0 1 6 11 0 2 2 3 1 5 1 1 0 2 1 1 0.1 3 0.9 1 0.1 3 0.9 1 0.1 4 0.9 1 0.1 5 0.9 1 0.1 10 0.9 1 0 1 0 15-0.9 1-0.1 11-0.9 1-0.1 6-0.9 1-0.1 4-0.9 1-0.1 4-0.9 1-0.1 2-0.9 1-0.1 3-0.9 1-1.1 5-1.9 3-0.1 2-8 16-1.9 2-1.1 3-2 2 0 1-2 2-0.1 1-6.9 8 0 1-6 6-0.1 1-6.2 6.3-13 11.9-1 0.1-9 7.9-1 0.1-3 2.9-4 2.1-2 1.9-1 0.1-2 1.9-1 0.1-2 1.9-1 0.1-2 1.9-1 0.1-2 1.9-3 1.1-2 1.9-3 1.1-2 1.9-5 2.1-2 1.9-13 6.1-4 2.8-2 0.2-15 7.8-2 0.2-3 1.9-4 1.9-2 0.2-5 2.8-2 0.2-3 1.8-2 0.2-3 1.8-2 0.2-8 3.7-5 1.3-3 1.7-5 1.3-1 0.8-2 0.2-1 0.9-2 0.1-3 1.8-2 0.1-1 0.9-2 0.1-1 0.9-2 0.1-1 0.9-2 0.1-1 0.9-2 0.1-1 0.9-2 0.1-1 0.9-2 0.1-4 1.9-3 0.2-1 0.9-2 0.1-1 0.9-2 0.1-4 1.8-3 0.2-1 0.9-2 0.1-4 1.8-3 0.2-1 0.9-6 1.1-4 1.8-3 0.2-4 1.8-7 1.2-4 1.8-7 1.2-1 0.8-3 0.2-1 0.8-3 0.2-1 0.8-3 0.2-1 0.8-3 0.2-1 0.8-3 0.2-1 0.8-3 0.2-1 0.8-3 0.2-1 0.8-3 0.2-1 0.8-3 0.1-1 0.8-4 0.3-1 0.8-3 0.2-1 0.8-3 0.1-1 0.8-4 0.3-1 0.8-3 0.1-1 0.8-9 1.3-1 0.8-3 0.2-1 0.8-4 0.2-1 0.8-4 0.2-1 0.8-4 0.2-1 0.8-3 0.1-1.1 0.8-3.9 0.2-1 0.8-4 0.2-1.1 0.8-4.9 0.3-1 0.8-4 0.2-1 0.8-4 0.2-1 0.8-4 0.2-1 0.7-5 0.3-1 0.8-4 0.2-1 0.8-5 0.2-1 0.8-4 0.2-1 0.7-5 0.3-1 0.8-5 0.2-1 0.8-10 1.2-1 0.7-5 0.3-1 0.7-5 0.3-1 0.7-6 0.3-1 0.8-5 0.2-1 0.8-5 0.2-1 0.7-6 0.3-1 0.8-5 0.2-1 0.7-13 1.3-1 0.8-12 1.2-1.1 0.7-5.9 0.3-2 0.8-6 0.2-1 0.8-6 0.2-1 0.7-14 1.3-1 0.7-7 0.3-1 0.8-7 0.2-1 0.8-7 0.2-1 0.8-7 0.2-1 0.8-7 0.2-1 0.7-8 0.3-1 0.8-7 0.2-1.2 0.7-7.8 0.3-1 0.7-8 0.3-1.1 0.7-8.9 0.3-1 0.8-18 1.2-1 0.7-9 0.3-1 0.7-9 0.3-1 0.7-9 0.3-2 0.8-9 0.2-1 0.7-10 0.3-1 0.7-11 0.3-1 0.7-10 0.3-2 0.8-11 0.2-1 0.8-11 0.2-1 0.7-12 0.3-1 0.7-13 0.3-1 0.7-13 0.3-1 0.7-29 1.3-2 0.8-14 0.2-2 0.8-15 0.2-2 0.7-17 0.3-1 0.7-18 0.3-2 0.7-43 1.3-2 0.7-24 0.3-2 0.7-28 0.3-2 0.7-36 0.3-1 0.7-4 0.1-48 0.2-3 0.7-153 0-3-0.7-48-0.2-5-0.2-1-0.6-35-0.3-2-0.7-28-0.3-2-0.7-24-0.3-2-0.7-43-1.3-2-0.7-18-0.3-2-0.7-16-0.3-2-0.7-15-0.2-2-0.8-30-1.2-2-0.8-13-0.3-1-0.7-13-0.3-2-0.7-12-0.3-1-0.7-12-0.3-1-0.7-11-0.2-2-0.8-22-1.2-2-0.8-21-1.3-1-0.7-10-0.3-1-0.7-9-0.3-1-0.7-9-0.2-1-0.8-9-0.2-1-0.8-9-0.3-1-0.7-18-1.3-1-0.7-8-0.3-1-0.7-8-0.3-1-0.7-7-0.2-1-0.8-8-0.3-1-0.7-7-0.2-1-0.8-7-0.2-1-0.8-15-1.2-1-0.8-7-0.2-1-0.8-7-0.3-1-0.7-6-0.2-1-0.8-6-0.2-2-0.8-6-0.3-1-0.7-6-0.3-1-0.7-6-0.3-1-0.7-12-1.2-1-0.8-12.9-1.3-1.1-0.7-5-0.2-1-0.8-5-0.2-1-0.8-6-0.3-1-0.7-5-0.3-1-0.7-5-0.2-1-0.8-5-0.2-1-0.8-11-1.3-1-0.7-4-0.2-1-0.8-5-0.2-1-0.8-5-0.3-1-0.7-4-0.2-1-0.8-5-0.3-1-0.7-4-0.2-1-0.8-4-0.2-1-0.8-4-0.2-1-0.8-5-0.3-1-0.7-4-0.3-1-0.7-4-0.3-1-0.7-4-0.3-1-0.7-4-0.3-1-0.8-3-0.1-1-0.8-9-1.2-1-0.8-4-0.3-1-0.8-3-0.1-1-0.8-4-0.2-1-0.8-3-0.2-1-0.8-4-0.2-1-0.8-3-0.2-1-0.8-4-0.3-1-0.8-3-0.1-1-0.8-3-0.2-1-0.8-3-0.2-1-0.8-3-0.2-1-0.8-3-0.2-1-0.8-8-1.3-1-0.8-2-0.1-1-0.8-3-0.2-1-0.8-7-1.2-1-0.8-3-0.2-1-0.9-6-1.1-1-0.8-7-1.3-4-1.7-3-0.2-4-1.8-3-0.3-4-1.7-2-0.1-1-0.9-3-0.2-4-1.8-2-0.2-1-0.8-2-0.1-1-0.9-3-0.2-4-1.9-2-0.1-1-0.8-2-0.2-1-0.8-2-0.2-1-0.8-2-0.2-1-0.8-2-0.2-1-0.8-2-0.2-1-0.8-2-0.2-1-0.8-2-0.2-1-0.9-2-0.1-3-1.8-2-0.1-1-0.9-5-1.2-3-1.8-5-1.2-8-3.8-2-0.1-3-1.9-2-0.1-3-1.9-2-0.2-5-2.8-2-0.2-5-2.8-2-0.2-11-5.8-2-0.2-14-7-2-1.8-9-4.1-2-1.9-5-2.1-2-1.9-1-0.1-4-2.9-3-1.2-11-7.8-1-0.1-11-8.9-1-0.1-4-3.9-1-0.1-6-5.9-1-0.1-15.2-15.2-0.1-1-8.9-10-0.1-1-2-2 0-1-2-2-0.1-1-1.9-2-0.1-1-1.9-2-1.1-3-1.9-2-2-4 0-1-3-5-0.1-2-1.9-3-0.1-2-0.9-1-0.1-2-0.9-1-0.1-2-0.9-1-0.1-2-0.9-1-0.1-2-0.9-1-0.1-4-0.9-1-0.1-4-0.9-1-0.1-5-0.9-1-0.1-9-0.9-1 0-23 0.9-1 0.1-8 0.9-1 0.1-5 0.9-1 0.1-4 0.9-1 0.1-3 0.9-1 0.1-2 0.9-1 0.1-3 1-1 0-2 1-1 0-1 1-1 0-2 8-15 0-1 2-2 0-1 3-4 0.1-1 5.9-7 0.1-1 3.9-4 0.1-1 18.2-18.2 1 0 5-5 1 0 8-7 1 0 2-2 1 0 3-2.9 1-0.1 5-3.9 3-1.1 5-3.9 5-2.1 2-1.9 5-2.1 2-1.9 24-12 2-0.1 3-1.9 1-0.1 3-1.9 2-0.1 5-2.9 2-0.1 3-1.9 2-0.1 3-1.9 2-0.1 1-0.9 1-0.1 1-0.9 2-0.1 3-1.9 5-1.1 3-1.8 5-1.2 1-0.9 2-0.1 1-0.9 2-0.1 1-0.9 2-0.1 3-1.8 2-0.1 1-0.9 2-0.1 4-1.9 3-0.2 1-0.9 2-0.1 1-0.9 2-0.1 1-0.9 2-0.1 4-1.8 3-0.2 1-0.9 2-0.1 1-0.9 2 0 1-0.9 3-0.2 1-0.9 2-0.1 1-0.8 3-0.2 1-0.9 2-0.1 1-0.8 3-0.2 1-0.9 2 0 1-0.9 7-1.2 1-0.9 3-0.1 1-0.9 6-1.1 1-0.8 3-0.2 1-0.8 3-0.2 1-0.8 3-0.2 1-0.8 3-0.2 1-0.8 3-0.2 1.2-0.8 3.8-0.2 1-0.9 3-0.1 1-0.8 3-0.2 1-0.8 4-0.2 1-0.9 3-0.1 1-0.8 3-0.2 1.3-0.8 3.7-0.2 1-0.8 4-0.2 1-0.9 3-0.1 1-0.8 4-0.2 1-0.8 4-0.2 1-0.9 4-0.1 1-0.9 3-0.1 1.4-0.8 9.6-1.2 1-0.9 4-0.1 1-0.9 4-0.1 1-0.8 4-0.2 1-0.8 4-0.2 1.4-0.8 4.6-0.2 1-0.8 4-0.2 1.2-0.8 10.8-1.2 1-0.9 10-1.1 1-0.8 5-0.2 1-0.8 5-0.2 1-0.8 5-0.2 1-0.8 5-0.2 1.2-0.8 11.8-1.2 1-0.8 12-1.2 1-0.8 6-0.2 1-0.8 12-1.2 1.4-0.8 5.6-0.2 1.4-0.8 5.6-0.2 1.6-0.8 6.4-0.2 1-0.8 6-0.2 1.2-0.8 6.8-0.2 1-0.8 14-1.2 1.2-0.8 6.8-0.2 1.1-0.8 6.9-0.2 1.3-0.8 6.7-0.2 1.6-0.8 7.4-0.2 1-0.8 7-0.2 1.7-0.8 7.3-0.2 1.4-0.8 7.6-0.2 1.4-0.8 17.6-1.2 1-0.8 8-0.2 1.5-0.8 8.5-0.2 1.3-0.8 8.7-0.2 1.4-0.8 8.6-0.2 1.7-0.8 9.3-0.2 1.2-0.8 9.8-0.2 1-0.8 10-0.2 1.2-0.8 21.8-1.2 2-0.8 10-0.2 2-0.8 11-0.2 1.4-0.8 11.6-0.2 1.5-0.8 12.5-0.2 1-0.8 13-0.2 1-0.8 28-1.2 2-0.8 14-0.2 2-0.8 15-0.2 2-0.8 35-1.2 2-0.8 18-0.2 2-0.8 20-0.2 1.8-0.8 48.2-1.2 3-0.8 28-0.2 2.4-0.8 33.6-0.2 3.6-0.8 45.4-0.2zM1562.5 1121.5l36 0.6 0.1-0.6zM1588.5 793.4l0 0.6 16 0 0.1-0.5zM1709.5 1121.4l0 0.7 36.3-0.6zM1775.5 1120.4l0 0.7 20.6-0.6zM1816.5 1119.4l0 0.7 16-0.6zM1849.5 1118.4l0 0.7 13-0.6zM1876.5 1117.4l0 0.7 12.1-0.6zM1880.5 971.6l-1 0.9 0.2 1 3.8 7.1 7 15.9 0.3 2 1.7 3 1.3 5 0.8 1 2.9 8.3 3.3 12.7 0.7 1 0.3 3 0.7 1 4 20 1.3 14 0.7 2 0.8 17-0.8 22.7-1 7-6 0.2 0 0.7 60-2.7 65-4 66-5 55-5 57-6 57-6.9 51-7.3 50-8.1 43-8.1 42-9 35-8.9 34-10.1 27-9.9 20.4-9.6 8.4-5 6.5-5 3.6-4 1.7-4-0.2-2-1.7-2-2.7-1.3-5-0.7-11 1.3-13 4.3-11 5.6-11.2 7.8-15.8 14.8-5 3.2-5.9 8-1.1 0.1-1 1-2 0.1-1 1-2 0-1 1.1-2-0.1-1 1.1-3 0-1 1-2 0-1 1.1-2-0.1-1 1.1-3-0.2-1 1.1-2-0.1-1 0.9-12.8-2.1-75.2-16.6-47-9-60-10-65-9.3-85-10-63-6-92-7zM1396.5 973.5l-62 3.1-92 7-63 6-85 10-65 9.2-60 10.1-47 9-75.4 16.6-12.6 2.1-1-0.9-2 0-1-1-3 0.1-1-1-2 0-1-1-3 0.1-1-1.1-2 0-1-1-2 0-1-1.1-2 0-1-1-2-0.1-1-1-1.3-0.1-5.9-8-4.8-3-16-15-11-7.7-11-5.6-13-4.3-11-1.4-5 0.7-2.9 1.3-1.7 2-0.2 2 1.7 4 3.6 4 6.5 5 8.4 5 22.6 10.5 28 10 34 10 37 9.2 42 8.9 50 9.1 53 8.3 59 7.9 101 11 57 5 69 5 89 5 54 2 0.7-0.9-1.7-2.1-9-16-9.1-18.9-6-15-0.2-2-1.7-3.4-3.3-11.6-0.7-1-4-15.3-0.3-3.7-0.7-1-0.3-4-0.7-1-0.3-4-0.7-2-0.3-5-0.7-2-1.8-26 0.5-9-0.7-1.2zM1475.5 1119.5l15 0.6 0.1-0.6zM1512.5 1120.5l19 0.6 0.1-0.6zM1445.5 1118.5l13 0.6 0.1-0.6z"/>
<path fill="#03091f" d="M1562.1 778.5l183.6 0 12.8 0.8 40.6 0.2 8.4 0.8 29.8 0.2 7.2 0.8 51.5 1.2 5.5 0.8 18.8 0.2 5.2 0.8 17 0.2 5 0.8 34.5 1.2 4.5 0.8 13.5 0.2 4.5 0.8 12.4 0.2 3.6 0.8 12.6 0.2 3.4 0.8 12 0.2 4 0.8 10.7 0.2 3.3 0.8 10.8 0.2 3.2 0.8 10.4 0.2 3.6 0.8 22.1 1.2 2.9 0.8 9.4 0.2 3.6 0.9 8.3 0.1 2.7 0.8 8.8 0.2 3.2 0.9 8 0.1 3 0.9 7.9 0.1 3.1 0.9 7.5 0.1 2.5 0.9 7.8 0.1 3.2 0.9 6.9 0.1 3.1 0.9 16.3 1.1 2.7 0.9 6.7 0.1 2.3 0.9 15.9 1.1 3.1 0.9 5.7 0.1 2.3 0.9 6.3 0.1 2.7 0.9 5.8 0.1 2.2 0.9 6.1 0.1 2.9 0.9 21 2.1 2 0.9 5.7 0.1 2.3 0.9 5.2 0.1 2.8 0.9 4.7 0.1 2.3 0.9 5 0.1 2 0.9 5.1 0.1 1.9 0.9 5.2 0.1 1.8 0.9 5.1 0.1 1.9 0.9 4.9 0.1 2.1 0.9 4.6 0.1 2.4 0.9 4.2 0.1 1.8 0.9 4.7 0.1 2.3 0.9 4.1 0.1 1.9 0.9 4.3 0.1 8.7 1.9 3.7 0.1 2.3 0.9 3.7 0.1 2.3 0.9 15.2 2.1 1.8 0.9 9.4 1.1 1.6 0.9 9.4 1.1 1.6 0.9 9 1.1 2 0.9 3.2 0.1 1.8 0.9 3.3 0.1 1.7 0.9 3.4 0.1 1.6 0.9 3.4 0.1 1.6 0.9 3.3 0.1 1.7 0.9 3.2 0.1 1.8 0.9 3 0.1 2 0.9 7.4 1.1 1.6 0.9 3.1 0.1 1.9 0.9 2.6 0.1 1.4 0.9 3.1 0.1 5.9 1.9 2.9 0.1 6.1 1.9 2.4 0.1 1.6 0.9 2.7 0.1 1.3 0.9 2.8 0.1 1.2 0.9 3 0.1 6 1.9 2 0.1 2 0.9 2 0.1 1 0.9 2.8 0.1 1.2 0.9 2.7 0.1 1.3 0.9 2.4 0.1 1.6 0.9 6 1.1 1 0.9 2.6 0.1 1.4 0.9 5.8 1.1 1.2 0.9 2.2 0.1 4.8 1.9 2.2 0.1 4.8 1.9 2 0.1 1 0.9 2.2 0.1 4.8 1.9 1.7 0.1 1.3 0.9 2 0.1 1 0.9 2 0.1 1 0.9 2 0.1 1 0.9 2 0.1 1 0.9 2 0.1 1 0.9 2 0.1 1 0.9 2 0.1 1 0.9 2 0.1 1 0.9 4.9 1.1 1.1 0.9 4 1.1 1 0.9 4.9 1.1 3.1 1.9 2 0.1 1 0.9 4 1.1 1 0.9 1.9 0.1 3.1 1.9 1.8 0.1 5.2 2.9 2 0.1 5 2.9 2 0.1 9 4.9 2 0.1 16 8 2 1.9 9 4.1 2 1.9 3 1 2 2 3 1 8 6 1 0 2 2 1 0 2 2 1 0 7 5.9 1 0.1 4 3.9 1 0.1 5 4.9 1 0.1 15.1 15.1 0.1 1 5 5 0 1 3 3 0 1 5 6 0 1 3 4 0.1 1 1.9 2 6 12 0.1 2 1.9 3 1.1 5 0.9 1 0.1 2 0.9 1 0.1 3 1 1 0 3 0.9 1 0.1 4 0.9 1 0.1 5 0.9 1 0.1 10 0.9 1 0 1 0 15-0.9 1 0 11-1 1 0 6-1 1 0 4-1 1-0.1 4-0.9 1 0 2-1 1-0.1 3-0.9 1-1.1 5-1.9 3-0.1 2-8 16-1.9 2-1.1 3-1.9 2-0.1 1-1.9 2-0.1 1-6.9 8-0.1 1-5.9 6-0.1 1-6.2 6.2-13 11.9-1 0.1-9 7.9-1 0.1-3 2.9-4 2.1-2 2-1 0-2 2-1 0-2 2-1 0-2 1.9-1 0.1-2 1.9-3 1.1-2 1.9-3 1.1-2 1.9-5 2.1-2 1.9-13 6.1-4 2.8-2 0.2-15 7.8-2 0.2-3 1.9-4 1.9-2 0.2-5 2.8-2 0.2-3 1.8-2 0.2-8 3.8-2 0.2-3.2 1.8-4.8 1.2-1 0.9-4 1.1-1 0.8-2 0.2-1 0.9-5 1.1-6 2.8-2 0.2-1 0.8-2 0.2-1 0.8-2 0.2-1 0.8-2 0.2-1 0.8-2 0.2-1 0.8-2 0.2-4.1 1.8-2.9 0.2-1 0.9-2 0.1-1 0.9-2 0.1-4 1.8-3 0.2-1 0.9-2 0.1-4 1.8-3 0.2-1 0.9-6 1.1-4 1.8-3 0.2-4.1 1.8-6.9 1.2-1 0.9-2 0.1-1.2 0.8-6.8 1.2-1 0.8-3 0.2-1 0.8-3 0.2-1 0.9-3 0.1-1 0.9-3 0.1-1 0.9-3 0.1-1 0.8-3 0.2-1 0.8-3 0.2-1 0.8-3 0.2-1 0.8-3 0.2-1.4 0.8-3.6 0.2-1 0.8-3 0.2-1 0.8-3 0.2-1.5 0.8-3.5 0.2-1 0.8-3 0.2-1.4 0.8-3.6 0.2-1 0.8-4 0.2-1 0.8-3 0.2-1.2 0.8-3.8 0.2-1 0.8-4 0.2-1 0.8-4 0.2-1 0.8-13 2.2-1.7 0.8-4.3 0.2-1 0.8-4 0.2-1 0.8-4 0.2-1 0.8-4 0.2-1.4 0.8-4.6 0.2-1 0.8-4 0.2-1.2 0.8-4.8 0.2-1 0.8-10 1.2-1 0.8-5 0.2-1 0.8-10 1.2-1.6 0.8-4.4 0.2-1.6 0.8-4.4 0.2-1.7 0.8-5.3 0.2-1 0.8-5 0.2-1 0.8-12 1.2-1 0.8-5 0.2-1.5 0.8-5.5 0.2-1.1 0.8-5.9 0.2-1 0.8-19 2.2-2 0.8-6 0.2-1.1 0.8-5.9 0.2-1.5 0.8-5.5 0.2-1.9 0.8-6.1 0.2-1.6 0.8-6.4 0.2-1.3 0.8-6.7 0.2-1.2 0.8-6.8 0.2-1.2 0.8-6.8 0.2-1.5 0.8-15.5 1.2-1.3 0.8-15.7 1.2-1.9 0.8-7.1 0.2-2 0.8-8 0.2-1.3 0.8-17.7 1.2-1.6 0.8-8.4 0.2-1.6 0.8-8.4 0.2-1.8 0.8-8.2 0.2-2.3 0.8-8.7 0.2-2.1 0.8-8.9 0.2-2.2 0.8-9.8 0.2-1.6 0.8-22.4 1.2-1.6 0.8-10.4 0.2-2.2 0.8-10.8 0.2-2.3 0.8-11.7 0.2-1.9 0.8-12.1 0.2-2.1 0.8-27.9 1.2-2.4 0.8-13.6 0.2-2.8 0.8-14.2 0.2-3.1 0.8-15.9 0.2-2.5 0.8-37.5 1.2-3.8 0.8-20.2 0.2-3.5 0.8-22.5 0.2-4.2 0.8-25.8 0.2-5.2 0.8-32.8 0.2-5.8 0.8-47.2 0.2-2 0.5-15 0.3-131.4 0-9.6-0.3-1-0.5-47.4-0.2-6.6-0.8-32-0.2-5-0.8-26-0.2-4-0.8-22.7-0.2-3.3-0.8-41.9-1.2-3.1-0.8-16.7-0.2-3.3-0.8-15.1-0.2-2.9-0.8-14.4-0.2-2.6-0.8-29.3-1.2-2.7-0.8-12.1-0.2-1.9-0.8-12.3-0.2-2.7-0.8-10.9-0.2-2.1-0.8-11-0.2-2-0.8-10.6-0.2-2.4-0.8-21.6-1.2-2.4-0.8-9-0.2-2-0.8-9.1-0.2-1.9-0.8-8.9-0.2-2.1-0.8-8.4-0.2-1.6-0.8-8.7-0.2-1.3-0.8-8.6-0.2-1.4-0.8-17.9-1.2-2.1-0.8-7.2-0.2-1.8-0.8-7.2-0.2-1.8-0.8-7.1-0.2-1.9-0.8-6.9-0.2-1.1-0.8-7.4-0.2-1.6-0.8-6.8-0.2-1.2-0.8-7-0.2-1-0.8-14.9-1.2-1.1-0.8-6.6-0.2-1.4-0.8-6.2-0.2-1.8-0.8-5.7-0.2-1.3-0.8-6-0.2-2-0.8-5.3-0.2-1.7-0.8-5.4-0.2-1.6-0.8-5.4-0.2-1.6-0.8-12-1.2-1-0.8-5.7-0.2-1.3-0.8-5.2-0.2-1.8-0.8-4.8-0.2-1.2-0.8-5-0.2-1-0.8-5.3-0.2-1.7-0.8-4.5-0.2-1.5-0.8-4.6-0.2-1.4-0.8-4.6-0.2-1.4-0.8-4.5-0.2-1.5-0.8-10-1.2-1-0.8-4.9-0.2-1.1-0.8-10-1.2-1-0.8-9.8-1.2-1.2-0.8-4-0.2-1-0.8-4-0.2-1-0.8-4.5-0.2-1.5-0.8-3.6-0.2-1.4-0.8-3.7-0.2-1.3-0.8-3.6-0.2-1.4-0.8-8-1.2-1-0.8-4-0.2-1-0.8-4-0.2-1-0.8-8-1.2-1-0.8-3.9-0.2-1.1-0.8-3-0.2-1-0.8-3.8-0.2-1.2-0.8-3-0.2-1-0.8-3.4-0.2-1.6-0.8-2.9-0.2-1.1-0.8-3-0.2-1-0.8-3-0.2-1-0.8-3-0.1-1-0.9-3-0.1-1-0.9-7.5-1.2-1.5-0.8-2-0.1-1-0.9-3-0.1-1-0.9-3-0.1-1-0.9-3-0.2-1-0.8-3-0.2-1-0.8-6-1.1-1-0.9-3-0.2-1-0.8-6-1.2-1-0.8-2.8-0.2-4.2-1.8-2.7-0.2-4.3-1.8-2-0.1-1-0.9-3-0.2-4-1.8-2-0.1-1-0.9-2-0.1-1-0.9-3-0.2-4-1.8-2-0.2-1-0.8-2-0.1-1-0.9-2-0.1-1-0.9-2-0.1-1-0.9-2-0.1-1-0.9-2-0.1-1-0.9-2-0.1-1-0.9-2-0.2-1-0.8-2-0.2-3-1.8-2-0.1-1-0.9-5-1.2-3-1.8-5-1.2-8-3.8-2-0.1-3-1.9-2-0.1-3-1.9-2-0.1-5-2.9-2-0.1-5-2.9-2-0.2-11-5.8-2-0.2-14-6.9-2-1.9-9-4.1-2-1.9-5-2.1-2-1.9-3-1.1-2-1.9-6-3.1-2-1.9-1-0.1-2-1.9-4-2.1-3-2.9-1-0.1-7-5.9-1-0.1-4-3.9-1-0.1-6-5.8-1-0.2-15.2-15.1-0.1-1-8.9-10-0.1-1-1.9-2-0.1-1-1.9-2-0.1-1-1.9-2-0.1-1-1.9-2-1.1-3-1.9-2-2-4-3-6-0.1-2-1.9-3-0.1-2-1-1 0-2-1-1 0-2-1-1 0-2-1-1 0-2-0.9-1-0.1-4-1-1 0-4-1-1 0-5-0.9-1-0.1-9-0.9-1 0-23 0.9-1 0.1-8 0.9-1 0-5 1-1 0.1-4 0.9-1 0.1-3 0.9-1 0-2 1-1 0.1-3 0.9-1 0.1-2 0.9-1 0.1-1 0.9-1 0.1-2 7.9-15 0.1-1 1.9-2 0.1-1 3-4 0-1 6-7 0-1 4-4 0.1-1 18.1-18.1 1-0.1 5-4.9 1-0.1 8-6.9 1-0.1 2-1.9 1-0.1 3-2.9 1 0 5-3.9 3-1.1 5-3.9 5-2.1 2-2 5-2 2-1.9 22-11 4-1.1 5-2.9 4-1.1 5.1-2.9 1.9-0.1 3-1.9 2-0.1 3-1.9 2-0.1 3-1.9 2-0.1 3.3-1.9 4.7-1.1 1-0.9 4-1.1 1.1-0.9 1.9-0.1 1-0.9 2-0.1 1-0.9 2-0.1 1-0.9 2-0.1 3.6-1.9 9.1-3 2.3-0.1 1-0.9 2-0.1 1-0.9 2-0.1 1-0.9 2-0.1 4.6-1.9 2.4-0.1 1-0.9 2-0.1 4.7-1.9 2.3-0.1 1-0.9 6-1.1 1-0.9 6-1.1 1.2-0.9 5.8-1.1 1.6-0.9 2.4-0.1 1.3-0.9 2.7-0.1 1.1-0.9 13.9-3.1 1.8-0.9 2.2-0.1 1.9-0.9 2.1-0.1 6.1-1.9 2.9-0.1 1.3-0.9 2.7-0.1 5.9-1.9 3.1-0.1 1.3-0.9 2.7-0.1 6.2-1.9 2.8-0.1 1.8-0.9 3.2-0.1 1.4-0.9 2.6-0.1 2-0.9 3-0.1 1.8-0.9 3.2-0.1 1.6-0.9 3.4-0.1 1.5-0.9 7.5-1.1 2.4-0.9 3.6-0.1 1.5-0.9 3.5-0.1 1.6-0.9 3.4-0.1 7-1.9 9-1.1 1.9-0.9 9.1-1.1 1.9-0.9 4.1-0.1 1.6-0.9 9.4-1.1 2.2-0.9 3.8-0.1 2.1-0.9 3.9-0.1 2.1-0.9 3.9-0.1 2.2-0.9 3.8-0.1 2.5-0.9 10.5-1.1 2.1-0.9 10.9-1.1 2.2-0.9 4.8-0.1 1.9-0.9 18.1-2.1 2.7-0.9 4.3-0.1 2.9-0.9 5.1-0.1 2.1-0.9 12.9-1.1 2.1-0.9 12.9-1.1 2.6-0.9 5.4-0.1 2.6-0.9 5.4-0.1 2.7-0.9 5.3-0.1 3-0.9 6-0.1 2.5-0.9 5.5-0.1 3.1-0.9 5.9-0.1 2.9-0.9 6.1-0.1 2.9-0.9 16.1-1.1 2.5-0.9 6.5-0.1 3-0.9 7-0.1 2.9-0.9 7.1-0.1 3-0.9 7-0.1 3.3-0.9 7.7-0.1 2.9-0.9 8.1-0.1 2.8-0.9 8.2-0.1 3-0.9 20-1.1 3.4-0.9 8.6-0.1 3.7-0.9 9.3-0.2 3.3-0.8 9.7-0.2 3.4-0.8 10.6-0.2 3-0.8 11-0.2 3.1-0.8 10.9-0.2 3.9-0.8 11.1-0.2 4.2-0.8 11.8-0.2 4.4-0.8 12.6-0.2 4.3-0.8 32.7-1.2 4.4-0.8 15.6-0.2 4.8-0.8 17.2-0.2 5-0.8 45-1.2 6.6-0.8 24.4-0.2 7-0.8 29-0.2 9.2-0.8 39.8-0.2zM1573.5 794.4l0 0.6 4.8-0.5zM1588.5 793.3l0 0.9 16 0 0.2-0.7zM1615.5 794.5l5 0.6 0.1-0.6zM1709.5 1121.4l0 0.9 53.3-0.8zM1775.5 1120.4l0 0.9 32.2-0.8zM1816.5 1119.4l0 1 25.4-0.9zM1849.5 1118.4l0 0.9 21.2-0.8zM1876.5 1117.4l0 1 19.4-0.9zM1879.5 971.9l0.2 1.6 10.8 23.2 6 16.4 6 20.8 4 19.9 1.3 13.7 0.7 2.7 0.6 15.3-0.6 22.5-1 7.9-6 0.4 0 1 60-2.8 65-4 70-5.3 56-5.1 57-6 57-7 56-8 49-8.1 47-9 40-8.9 39-10.2 32-10 28-10.9 20.3-10.5 7.3-5 5.5-5 2.9-4 1-4-1.2-3-2.5-2-4.3-1.4-6-0.5-13 1.6-15 4.9-12 6-12 8.1-18 16.2-6 3.5-9 9.9-4.2 3.7-1.6 1-2.2 0-1 1-2 0-1 1-7 0.5-20-2.6-82-16.5-61-11-59-9.1-68-8.9-75-8.1-82-7.3-89-5.9-58-3zM1391.5 973.5l-72 4.1-77 5.9-67 6.4-70 8-60 8.1-57 8.9-56 10.1-81 16.4-20 2.5-7-0.4-1-1-3 0-1-1-1.4 0-1.6-1-4-3.5-9-9.9-6-3.5-18-16.3-12-8.1-12-6-15-5-7-1.2-7-0.4-5 0.5-4.5 1.4-2.5 2-1.2 3 1 4 3.8 5 5.9 5 7.6 5 11.2 6 11.7 5.3 30 11.2 33 10 40 10.1 47 10 49 8.9 52 8.2 59 7.9 61 7 62 6 66 5.4 75 5 79 4 51 1.9 0-1-18 0-11-19.3-8-16.6-7-17-0.2-2-3.8-9.7-7-26.8-4-27.5-0.7-18 0.5-7-0.8-1.5zM1545.5 1121.5l53 0.8 0.1-0.8zM1466.5 1119.5l24 0.8 0.1-0.8zM1500.5 1120.5l31 0.8 0.1-0.8z"/>
<path fill="#040b23" d="M1578.2 778.5l151.4 0 132.7 3 133.6 6 78 5 63.8 5 64.9 6 64.7 7 56 7 56.1 8 49.3 8 49 9 47.8 10 42 10 37 10 35.6 11 31.2 11 27.1 11 25.5 12 23.3 13 5.3 3.9 1 0.1 2 1.9 1 0.1 2 1.9 1 0.1 2 1.9 1 0.1 7 5.9 1 0.1 4 3.9 1 0.1 5 4.9 1 0.1 15.1 15 0.1 1 4.9 5 0.1 1 2.9 3 0.1 1 4.9 6 0.1 1 3 4 0 1 1.9 2 6 12 0.1 2 2 3 1 5 1 1 0 2 1 1 1.1 7 0.9 1 0.1 4 0.9 1 0.1 5 0.9 1 0.1 10 0.9 2 0 15-0.9 1-0.1 11-0.9 1-0.1 6-0.9 1-0.1 4-0.9 1-0.1 4-0.9 1-0.1 2-0.9 1-0.1 3-0.9 1-1.1 5-1.9 3-0.1 2-8 16-2 2-1.1 3-1.9 2-2.1 4-6.9 8-0.1 1-5.9 6-0.1 1-6.1 6.1-13 12-1 0.1-9 7.8-1 0.2-3 2.8-4 2.2-2 1.9-1 0.1-2 1.9-1 0.1-2 1.9-1 0.1-2 1.9-1 0.1-2 1.8-3 1.2-2 1.9-3 1.1-2 1.8-5 2.2-2 1.8-13 6.2-4.4 2.8-1.6 0.2-13 6.8-4 1.2-5 2.8-4 1.1-3 1.9-4 1.1-3.3 1.9-1.7 0.1-8.3 3.9-1.7 0.1-6.1 2.9-1.9 0.1-6.3 2.9-1.7 0.1-1 0.9-5 1.1-1 0.9-5.5 2-21.2 7-2.3 0.1-1 0.9-2 0.1-4.3 1.9-5.7 1.1-1 0.9-2 0.1-4.6 1.9-2.4 0.1-1 0.9-6 1.1-1 0.9-6 1.1-1.1 0.9-5.9 1.1-1.4 0.9-2.6 0.1-1.1 0.9-9.9 2.1-1.5 0.9-2.5 0.1-1.4 0.9-6.6 1.1-1.3 0.9-2.7 0.1-1.3 0.9-2.7 0.1-1.4 0.9-2.6 0.1-1.5 0.9-2.5 0.1-5.8 1.9-7.2 1.1-1.4 0.9-11.6 2.1-6.2 1.9-2.8 0.1-1.8 0.9-3.2 0.1-1 0.8-3 0.2-2 0.9-8 1.1-1.6 0.9-3.4 0.1-1.5 0.9-15 3-3.5 0.1-1.6 0.9-3.4 0.1-1.8 0.9-3.2 0.1-2 0.9-9 1.1-7.2 1.9-3.8 0.1-1.7 0.9-9.3 1.1-2 0.9-4 0.1-1.8 0.9-21.2 3.1-2.7 0.9-4.3 0.1-1.9 0.9-4.1 0.1-2.2 0.9-10.8 1.1-2 0.9-11 1.1-2.3 0.9-4.7 0.1-2.1 0.9-3.9 0.1-17.1 2.9-4.9 0.1-2.4 0.9-4.6 0.1-2.8 0.9-12.2 1.1-2.9 0.9-5.1 0.1-10.6 1.9-5.4 0.1-2.7 0.9-5.3 0.1-2.9 0.9-14.1 1.1-2.8 0.9-23.2 2.1-3.6 0.9-6.4 0.2-2.9 0.8-6.1 0.1-3.5 0.9-6.5 0.2-3.3 0.8-6.7 0.2-3.3 0.8-6.7 0.1-3.6 0.9-28.4 2.1-4.1 0.9-7.9 0.2-3.6 0.8-20.4 1.2-3.7 0.8-8.3 0.2-4.4 0.8-8.6 0.2-4.6 0.8-9.4 0.2-4.3 0.8-9.7 0.2-4.5 0.8-25.5 1.2-5.1 0.8-10.9 0.2-5.6 0.8-11.4 0.2-6.1 0.8-12.9 0.2-5.7 0.8-34.3 1.2-7.6 0.8-16.4 0.2-7.7 0.8-18.3 0.2-8.9 0.8-59.1 1.2-13.3 0.8-39.7 0.2-25.9 0.8-107.4 0-106-2-10.7-0.8-21.3-0.2-8.7-0.8-18.5-0.2-7.5-0.8-38.4-1.2-6.6-0.8-13.5-0.2-6.5-0.8-12.1-0.2-5.9-0.8-11.6-0.2-5.4-0.8-11.1-0.2-4.9-0.8-10.8-0.2-5.2-0.8-24-1.2-5-0.9-8.6-0.1-4.4-0.8-8.8-0.2-4.2-0.8-8.5-0.2-16.5-1.9-7.6-0.1-15.4-1.9-7.3-0.1-3.7-0.9-7.1-0.1-3.9-0.9-6.7-0.1-3.3-0.8-6.9-0.2-3.1-0.8-7-0.2-3-0.8-6.7-0.2-3.3-0.9-6.3-0.1-3.7-0.9-14.7-1.1-3.3-0.9-5.6-0.1-3.4-0.9-5.4-0.1-2.6-0.8-5.9-0.2-11.1-1.9-5.5-0.1-2.5-0.8-13.5-1.2-2.5-0.9-13-1.1-10-1.9-4.8-0.1-17.2-2.9-4.2-0.1-2.8-0.9-4.1-0.1-2.9-0.9-3.9-0.1-2.1-0.9-4.5-0.1-2.5-0.9-4.1-0.1-71.9-12-2-0.9-14.2-2.1-1.8-0.9-3.4-0.1-1.6-0.9-3.6-0.1-25-5-1.4-0.9-3.4-0.1-1.6-0.9-7.8-1.1-6.2-1.9-12-2.1-6-1.9-2.8-0.1-10.2-2.9-2.6-0.1-1.4-0.9-2.7-0.1-1.3-0.9-2.9-0.1-1.1-0.9-2.9-0.1-8-2-1.1-0.9-2.8-0.1-1.2-0.9-6.5-1.1-1.5-0.9-6.1-1.1-4.9-1.9-2.4-0.1-1.6-0.9-5.7-1.1-1.3-0.9-5.7-1.1-1.3-0.9-5.6-1.1-1.4-0.9-2-0.1-1-0.9-2.3-0.1-4.7-1.9-2-0.1-4-1.9-2.3-0.1-27.3-9-5.4-2-1-0.9-2-0.1-1-0.9-4.6-1.1-3.4-1.9-4.6-1.1-3.4-1.9-1.9-0.1-8.1-3.9-2-0.1-3-1.9-1.8-0.1-5.2-2.8-2-0.2-5-2.9-4-1.1-9-4.8-1.7-0.2-12.3-6-4-2.8-5-2.1-4-2.1-2-1.8-5-2.2-2-1.8-3-1.2-2-1.8-6-3.2-2-1.8-1-0.2-2-1.8-4-2.2-3-2.8-1-0.1-7-5.9-1-0.1-4-3.9-1-0.1-6-5.9-1-0.1-15.1-15.1-0.1-1-8.9-10-0.1-1-2-2 0-1-2-2 0-1-2-2 0-1-2-2-1-3-1.9-2-2.1-4-2.9-6-0.2-2-1.9-3-0.1-2-0.9-1-0.1-2-0.9-1-0.1-2-0.9-1-0.1-2-0.9-1-0.1-2-0.8-1-0.2-4-0.9-1-0.1-4-0.9-1-0.1-5-0.9-1-0.1-9-0.9-1 0-23 0.9-1 0.1-8 0.9-1 0.1-5 0.9-1 0.1-4 1-1 0-3 1-1 0-2 1-1 0-3 1-1 0.1-2 0.9-2 1-1 0-2 8.1-16 1.9-2 0-1 3-4 0.1-1 5.9-7 0.1-1 3.9-4 0.1-1 18.1-18 1-0.1 5-4.9 1-0.1 8-6.9 1-0.1 2-1.9 1-0.1 3.2-2.9 6.2-4 2.6-1.1 2-1.9 1-0.1 11-6.9 3-1.1 14.4-7.9 33.8-15 40.9-15 45.8-14 50.2-13 54.5-12 58.2-11 61.7-10 72.6-10 68.6-8 82.3-8 75.5-6 77.9-5 80.8-4 85.4-3zM1588.5 793.3l0 1 16 0 0.2-0.8zM1611.5 794.5l9 0.8 0.2-0.8zM1624.5 795.5l5 0.8 0.2-0.8zM1879.5 971.4l-0.3 1.1 8.3 17.4 8 20.5 5 16.2 4 16.8 2 11.3 2 17.2 0.5 20.6-0.5 13.9-1 9.2-6 0.7-1 1.2-24-0.1-1 1.1-26-0.1-1 1.1-32-0.1-1 1.1-40-0.1-1 1.1-65-0.1-1 1.1-109 0-1-1.1-66 0.1-1-1.1-40 0.1-1-1.1-31 0.1-1-1.2-18-0.2-8-13.6-10-20-8-19.5-6-18.3-5-20.3-3-18.6-1-10.3-0.2-23-0.8-1.8-72 4.2-69 5-67 6.1-73 7.9-55 7.1-54 7.9-60 10.1-82.5 15.5-16.5 2.5-11 0.8-10-0.7-8-3.1-4-2.8-10-9-7-3.8-14-12.6-10-7.8-13-7.9-14-6.2-17-4.6-8-0.9-7 0-6.4 1.1-4.5 2-2.8 3-0.7 3 0.6 3 1.6 3 5.3 6 9.4 7 12.3 7 15.1 7 17.1 6.8 20 6.8 23 7 51 12.9 58 12 65 11 72 10.1 78 9 75 7 81 6.1 87 5 97 3.9 89 2.1 94 0.7 94-0.7 83-1.9 63-2.3 80-3.9 77-5 74-5.9 62-6.1 61-7 59-8 57-9 49-9 46-10 43-11.1 35-11 29.5-11.5 21.2-11 8.6-6 5.4-5 3.5-5 0.9-5-2.1-3.9-4-2.5-7-1.6-8-0.2-10 1.3-10 2.6-16 6.3-15 8.7-10.9 8.3-14.4 13-6.7 3.6-10 8.9-5 3.4-8 2.8-11 0.6-25.8-3.3-82.2-15.5-60-10.1-55-8.1-63-7.9-75-8-69-6-73-5.1zM1399.5 959.3l0 5.1 0.6-4.9zM1557.5 796.3l0 1 4.7-0.8zM1564.5 795.3l0 1 5.7-0.8zM1573.5 794.3l0 1 8.8-0.8z"/>
<path fill="#040d27" d="M1610.5 778.5l86.8 0 77 1 107.4 3 70 3 72.1 4 72.2 5 60.2 5 62 6 62.2 7 54.1 7 54.3 8 48 8 47.6 9 46.6 10 40.9 10 39.6 11 31.6 10 30.6 11 26.9 11 25.4 12 23.4 13 17.9 12 16.2 13 13 13 0.1 1 4.9 5 0.1 1 3 3 0 1 3 3 0 1 4 5 1 3 2 2 6 12 0.1 2 1.9 3 1.1 5 0.9 1 0.1 2 0.9 1 1.1 7 0.9 1 0.1 4 0.9 1 0.1 5 0.9 1 0.1 10 0.9 2 0 15-0.9 1-0.1 11-0.9 1-0.1 6-0.9 1-0.1 4-0.9 1-0.1 4-0.9 1 0 2-1 1-0.1 3-0.9 1-1.1 5-1.9 3-0.1 2-8 16-1.9 2-1.1 3-1.9 2-2.2 4-6.8 8-0.1 1-6 6-0.1 1-7 7.1-12 10.9-1 0.1-9.2 7.9-26.9 18-2.9 1.1-2.3 1.9-4.7 2.1-6 3.9-22 11-34.9 15-38.3 14-44.8 14-56.5 15-57.6 13-67.7 13-67.5 11-72.3 10-77.6 9-84.2 8-78.5 6-84.2 5-95.5 4-76.8 2-108.6 1-107.8-1-76.8-2-95.5-4-84.2-5-90.1-7-82-8-83.7-10-76.3-11-70-12-64.4-13-62.7-15-49.6-14-47.8-16-40.1-16-37-18-15.7-9-2.3-1.9-1-0.1-10.8-7-6.2-4.9-1-0.1-3-2.9-1-0.1-3-2.9-1-0.1-11-9.9-1-0.1-15-15-0.2-1-4.9-5-0.1-1-3.8-4-0.2-1-1.9-2-0.1-1-1.9-2-0.1-1-1.9-2-0.1-1-1.9-2-1.1-3-1.9-2-5-10-0.1-2-1.9-3-0.1-2-0.9-1-0.1-2-1-1 0-2-1-1 0-2-0.9-1-0.1-2-0.9-1-0.1-4-0.9-1-0.1-4-0.9-1-0.1-5-0.9-1-0.1-9-0.9-1 0-23 0.9-1 0.1-8 0.9-1 0.1-5 0.9-1 0.1-4 0.9-1 0.1-3 0.9-1 0.1-2 0.9-1 0.1-3 0.9-1 0.1-2 1.9-3 0.1-2 8-16 2-2 0-1 3-4 0.1-1 2.9-3 0-1 3-3 0.1-1 3.9-4 1.1-2 15-15 7.1-6 14.9-11 15.9-10 30.6-16 37.5-16 39.3-14 46.4-14 51-13 55.2-12 59.1-11 69.6-11 75.3-10 71.9-8 75.2-7 78.8-6 83-5 89.8-4 107.4-3zM1621.5 795.5l8 1 0.2-1zM1630.5 796.5l6 0.9 0.2-0.9zM1637.5 797.5l5 0.9 0.2-0.9zM1643.5 798.5l5 1 0.2-1zM1649.5 799.5l4 1 0.2-1zM1677.5 806.5l3 1 0.2-1zM1681.5 807.5l-0.9 0 2.9 1 0-1.1zM1878.5 970l-0.6 0.5 8.6 17.5 8 20 6 19.2 4 17 2 11.5 2 18.4 0.3 19.4-1.5 22-5.8 0.7-1 1.2-24-0.1-1 1.2-26-0.1-1 1.1-32-0.1-1 1.1-40-0.1-1 1.1-65-0.1-1 1.1-109 0-1-1.1-66 0.1-1-1.1-40 0.1-1-1.1-31 0-1-1.1-18-0.5-10-17.4-9-18.5-7-17.3-6-18.5-4-15.8-3-16.4-2-18.8-0.1-20.6-0.9-2.1-64 3.5-70 5-69 6.1-66 6.9-57 7-50 7-57 9-89.2 15.6-17.8 2.5-13 0.8-12-0.9-5-1.4-5-2.3-14-10-7-3.3-17.6-15.4-12.4-9.1-15-8.4-15-6.1-10-2.9-9-1.7-9-0.8-8 0.3-7 1.4-5 2.3-3.1 3-1.3 4 0.4 3 1.2 3 4.6 6 8.2 7 11.1 7 13.8 7 17.1 7.3 20 7.4 22 7 48 12.9 59 12.9 62 11.1 74 10.9 75 9 82 8.1 89 6.9 85 5 94 4 83 2.2 91 1 93-0.3 86-1.6 68-2.2 84-3.9 68-4.1 78-6 65-6 63-7 62-8 59-9.1 55-9.9 48-10.2 43-10.8 39-12 30.3-11.6 12.8-6 11-6 9-6 5.9-5 5-6 2.2-6-0.3-3-1-2-3.9-3.5-7-2.6-9-0.9-11 0.6-12 2.3-18 6.2-17 8.8-14 9.8-19 16.5-7 3.4-15 10.5-5 2.2-5 1.2-14 0.8-28-3.3-89-15.5-57-9.1-57-7.9-58-7-59-6.1-68-6-86-5.9-78-4.1zM1399.5 959.3l0 7.8 0.8-7.6zM1400.5 951.3l0 5 0.8-4.8zM1433.5 869.4l-1.1 1.1 0.1 1.6 1.9-2.6zM1436.5 865.4l-1.1 1.1 0.1 1.5 1.9-2.5zM1441.5 859.4l-2.1 2.1 0.1 1.5 2.9-3.5zM1455.5 844.4l-10.1 10.1 0.1 1.5 11.6-11.5zM1462.5 838.4l-2.1 2.1 0.1 0.9 3.5-2.9zM1467.5 834.4l-1.1 1.1 0.1 1 2.6-2zM1471.5 831.4l-1.1 1.1 0.1 0.9 2.7-1.9zM1474.5 829.4l-1.1 1.1 0.1 0.8 2.5-1.8zM1483.5 823.4l-1.1 1.1 0.1 0.8 2.9-1.8zM1490.5 819.4l-1 1-1 0-1.1 1.1 0.1 0.8 4.9-2.8zM1508.5 810.3l-1 1.1-3 1 0 1.1 6.8-3zM1513.5 808.3l-1 1.1-1.1 0.1 0.1 0.9 4.9-1.9zM1524.5 804.3l-1 1.1-2-0.1-1 1.1-1 0 0 1 8.5-2.9zM1542.5 799.3l-1 1.2-3-0.2-1 1.2-3-0.2-1 1.2-2-0.1 0 1.1 15.7-4zM1547.5 798.3l0 1.2 4.7-1zM1564.5 795.3l-1 1.2-6-0.2-1 1.2-4-0.2 0 1.2 20.9-3zM1588.5 793.2l-1 1.3-14-0.2 0 1.2 23-1.1 24 1.1 0.2-1-15.2 0-1-1.3z"/>
<path fill="#050e2b" d="M1557.4 779.5l137.1-0.5 55.9 0.5 88.6 2 81.7 3 61 3 65.8 4 67.5 5 67.7 6 58 6 58.7 7 58.2 8 51.1 8 50.5 9 49 10 43 10 37.9 10 36.7 11 35 12 30.7 12 28.9 13 22.9 12 20.9 13 18.3 14 9 8.4 8 8.6 10 13 0.1 1 2.9 4 0.1 1 1.9 2 6 12 0.1 2 1.9 3 1.1 5 1 1 0 2 0.9 1 1.1 7 1 1 0 4 1 1 0 5 1 1 0.1 10 0.9 2-0.1 15-0.9 1 0 11-0.9 1-0.1 6-0.9 1-0.1 4-0.9 1-0.2 4-0.9 1 0 2-0.9 1-0.1 3-1 1-1.1 5-1.9 3 0 2-8.1 16-1.9 2-1.1 3-1.9 2-2.1 3.9-6.9 8.1-0.1 1-11 12-12 11-11.2 9-14.2 10-12.6 8-31.5 17-38.4 17-40.5 15-47.9 15-56.7 15-57.8 13-62.3 12-66.8 11-71.4 10-76.4 9-82.5 8-91 7-85.6 5-98.5 4-83.9 2-92.8 0.7-92-0.7-83.9-2-98.5-4-85.6-5-91-7-82.5-8-76.4-9-71.4-10-72.4-12-66.2-13-56.5-13-52-14-47.3-15-40.1-15-37.9-17-31.1-17-25.2-17-10-8-13-12-12-13-0.1-1-5.9-7-0.1-1-5.9-8-1.1-3-1.9-2-5-10-0.1-2-2-3 0-2-1-1-0.1-2-0.9-1-0.1-2-0.9-1 0-2-1-1 0-2-0.9-1-0.2-4-0.9-1-0.1-4-0.9-1-0.1-5-0.9-1 0-9-0.9-1-0.1-22 0.9-2 0.1-8 1-1 0-5 1-1 0-4 1-1 0-3 1-1 0-2 1-1 0.1-3 0.9-1 0.1-2 0.9-2 1-1 0.1-2 8-16 1.9-2 1.1-2.7 4.9-6.3 0.1-0.9 10-11.8 10.6-10.3 13.5-11 13-9 27.8-16 34.2-16 40.9-16 45.6-15 46.6-13 54.8-13 54.4-11 63.6-11 68.1-10 72.6-9 77.4-8 82.7-7 90-6 78.8-4 81.7-3zM1588.5 793.2l-1 1.2-14-0.2-1 1.2-8-0.1-1 1.1-6-0.2-1 1.2-4-0.1-1 1.1-4-0.1-1 1.1-4-0.1-1 1.1-3-0.1-1 1.1-3-0.1-1 1.1-2-0.1-1 1.1-2-0.1-1 1.1-3-0.1-1 1.1-2-0.1-3 2.1-2-0.1-1 1.1-2-0.1-3 2.1-2-0.1-1 1.1-1-0.1-5 3.1-1 0-1 1-1 0-5 3-1 0-1 1-1 0-1 1-1-0.1-2 2.1-3 1-5 4-1 0-5 4-1 0-3 3-1 0-4 4-1 0-6 6-1 0-10.1 10.1 0.1 1-6.1 6 0.1 2 12.8-14 13.6-12 15.4-11 17.7-10 18.5-8 18.9-6 17.9-4 21.2-2.8 20-0.9 20.7 0.7 24.9 3 19.9 4 21.6 6 19.8 7 20.8 9 19.3 9.9 0.1-0.9-1.1-1.1-1 0-1-1-1 0-1-1-1 0-1-1-1 0.1-5-3.1-1 0.1-1-1.1-1 0.1-5-3.1-1 0-1-1-1 0-1-1.1-2 0.2-5-3.2-2 0.2-3-2.1-2 0.1-3-2.2-2 0.1-1-1-2 0.1-3-2.2-2 0.1-1-1.1-2 0.1-1-1.1-2 0.1-1-1.1-2 0.1-1-1.1-3 0.2-1-1.2-2 0.1-1-1.1-3 0.1-1-1.1-3 0.2-1-1.2-3 0.2-1-1.2-3 0.1-1-1.1-3 0.1-1-1.1-4 0.1-1-1.1-5 0.1-1-1.1-5 0.1-1-1.1-6 0.1-1-1.1-8 0.1-1-1.2-15 0.2-1-1.2zM1743.5 834.5l-0.8 0 6.8 3.9 0.1-0.9-1.1-1.1-1 0-1-1zM1750.5 838.5l-0.8 0 4.8 2.9 0.1-0.9-1.1-1.1zM1755.5 841.5l-0.8 0 4.8 3 0.1-1-1.1-1.1zM1760.5 844.5l-0.9 0 2.9 1.9 0.1-0.9-1.1-1.1zM1763.5 846.5l-0.8 0 2.8 1.9 0.1-0.9-1.1-1.1zM1766.5 848.5l-0.8 0 2.8 1.9 0.1-0.9-1.1-1.1zM1769.5 850.5l-0.8 0 2.8 1.9 0.1-0.9-1.1-1.1zM1772.5 852.5l-0.8 0 2.8 2 0.1-1-1-1zM1775.5 854.5l-1 0 4 2.9 0.1-0.9-2.1-2.1zM1779.5 857.5l-0.8 0 3.8 2.8 0.1-0.8-2.1-2.1zM1783.5 860.5l-0.8 0 3.8 2.9 0.1-0.9-2.1-2.1zM1787.5 863.5l-0.8 0 3.8 3 0.1-1-2.1-2.1zM1792.5 867.5l-0.7 0 4.7 3.9 0.1-0.9-3.1-3.1zM1798.5 872.5l-0.7 0 4.7 4 0.1-1-3.1-3.1zM1806.5 879.5l-0.6 0 6.6 6 0.1-1-5-5zM1828.5 900.4l-1 0.1 4 4.4 0.1-1.4zM1837.5 910.4l-1 0.1 2 2.3 0.1-1.3zM1842.5 916.4l-0.9 0.1 1.9 2.3 0.1-1.3zM1846.5 921.4l-0.9 0.1 1.9 2.3 0.1-1.3zM696.5 966.5l-10 2.3-4 2.1-3.1 2.6-1.8 3-0.6 3 0.3 3 1.6 4 5.3 7 9.6 8 13 8 16.1 8 18.6 7.7 20.3 7.3 23.7 7.4 25 7 56 13.2 68 13 70 10.9 71 9.1 84 8.9 84 7.1 91 5.9 88 4.2 95 3 98 1.4 98-0.2 87-1.5 90-2.9 97-4.8 89-6 81-7.1 75-8 70-9 71-11.1 63-11.9 53-12.2 48-13.6 20-6.8 18.2-7 15.6-7 15-8 10.4-7 7.8-7 4.9-7 1.4-6-1.1-4-3.5-4-5.7-3-7-1.7-9-0.7-10 0.4-10 1.6-11 2.7-17 6.2-17 8.8-16 11.1-21 18.1-7 3-14 8.7-6 2.5-6 1.6-15 1.2-14-1-19.9-2.5-95.1-15.5-54-8-96-12.1-68-7-71-6-73-5-84-4.4-1.7-1 0.3-1-1.6-1.2 10 21.1 7 17.4 6 18.5 4 16 3 16.8 2 20.2 0 23.6-1.4 14.6-5.6 0.6-1 1.2-24 0-1 1.1-26-0.1-1 1.1-32 0-1 1-40 0-1 1.1-65-0.1-1 1.1-109 0-1-1.1-66 0-1-1-40 0-1-1.1-31 0.1-1-1.1-15-0.1-3-0.7-10-17.5-9-18.6-7-17.5-6-18.5-4-16.1-3-16.9-2-21.2-0.1-17.7-0.1-1-0.8-0.6-71 4-58 4.1-69 5.9-60 6.1-59 7-59 8-142 22.5-17 1.9-13 0.6-10-0.8-9-2.2-7-3.3-13-8.1-4-1.3-5-3.5-16.3-14.3-9.7-7.3-13-8.2-14-6.8-14-5.1-14-3.4-13-1.5zM1399.5 959.2l0 12 0.9-11.7zM1400.5 951.3l0 7.1 0.9-6.9zM1401.5 945.3l0 5.4 0.9-5.2zM1402.5 940.4l0 4.3 0.9-4.2zM1403.5 935.4l0 4.2 0.9-4.1zM1404.5 931.4l0 3.7 0.9-3.6zM1405.5 927.4l0 3.7 1-3.6zM1410.5 912.4l0 1.1-1.1 1 0.1 2-1.1 1 0.1 2-1.1 1 0.1 3.5 3.9-11.5zM1412.5 907.4l0 1.1-1.1 1 0.1 2.7 1.9-4.7zM1414.5 902.4l0 1.1-1.1 1 0.1 2.6 2-4.6zM1420.5 890.4l-1.1 1.1 0 1-2 3 0.1 2.7 3.9-7.7zM1424.5 883.4l-2.1 3.1 0.1 2 2.9-5zM1438.5 863.4l-3.1 3.1 0.1 1-3.1 3 0.1 1-2.1 2 0.1 1-4.1 5 0.1 1-1.1 1 0.1 1.8 7-10.6 7-9.2z"/>
<path fill="#06102f" d="M1603.4 779.5l136.1 0.4 79.9 1.6 62.5 2 69.2 3 71.4 4 120 9 62.9 6 54.5 6 55.6 7 55.4 8 48.8 8 48.2 9 47 10 41 10 39.6 11 34.6 11 33.3 12 32.1 13 30.7 14 22.9 12 19.2 12 16.9 13 13.3 13 11 13.9 9 15.5 7 17.9 0.1 2.7 0.9 1 0.1 3 0.9 1 0.1 4 0.9 1 0.1 5 0.9 1.3 0.1 9.7 0.9 2.7 0 11.8-0.2 2.5-0.7 1-0.1 11-0.9 1-0.1 6-0.9 1-0.1 4-0.9 1-0.1 3.8-0.9 1.2-0.1 2-0.9 1-0.1 2.9-0.9 1.1-0.1 2-0.9 1-1.1 4-0.9 1-1.1 4-6 12-9 13.8-9 11.2-8 8.4-9.1 8.6-12.2 10-13.8 10-14.2 9-31.2 17-38.1 17-43.2 16-48.1 15-52.8 14-57.4 13-67.3 13-67.1 11-71.7 10-76.9 9-83.2 8-92.1 7-87.3 5-102.6 4-90.7 1.9-100 0.4-101.4-1.3-69.4-2-91.5-4-82.3-5-88.7-7-81.1-8-82.9-10-75.8-11-69.6-12-64-13-58.6-14-49.9-14-45.5-15-43.2-17-33.6-16-29.5-17-11.8-8-13.2-10-11.5-10-9.5-9.5-9-10.5-8-11.1-0.1-0.9-1.9-2.3-5-8.8-3-6.4-0.1-1.5-1.9-3.1-0.1-1.9-0.9-1-0.1-2-0.9-1-0.1-2-0.9-1-0.1-2-0.9-1-0.1-2-0.9-1.6-0.1-3.4-0.9-1-0.1-4-0.9-1-0.1-5-0.9-1.1-0.1-8.9-0.9-2.3 0-21 0.9-1.7 0.1-8 0.9-1 0.1-5 0.9-1 0.1-4 0.9-1 0.1-2.9 0.9-1.1 0.1-2 0.9-1 0.1-2.4 2-5.6 0.9-1 1.1-3.8 4-8.2 8-12.8 8-10.2 9-9.4 11-9.7 12-8.9 14.1-9 14.2-8 17.9-9 41-18 42.2-16 46.8-15 52-14 52.6-12 62.2-12 60.9-10 71.8-10 77.6-9 84.1-8 78-6 82.3-5 88.7-4 105.5-3zM1834.5 907.4l-1 0.1 5 5.7 0.1-1.7zM1840.5 914.4l-0.9 0.1 3.9 4.7 0.1-1.7zM1845.5 920.4l-1 0.1 3 3.8 0.1-1.8zM1848.5 924.4l-0.8 0.1 2.8 3.7 0.1-1.7zM1852.5 929.4l-1 0.1 2 2.7 0.1-1.7zM1854.5 932.4l-0.8 0.1 2.8 3.8 0.2-1.8zM1857.5 936.4l-0.9 0.1 1.9 2.7 0.2-1.7zM1859.5 939.4l-0.8 0.1 1.8 2.6 0.2-1.6zM1861.5 942.4l-0.8 0.1 1.8 2.6 0.2-1.6zM1863.5 945.4l-0.8 0.1 1.8 2.7 0.2-1.7zM1865.5 948.4l-0.8 0.1 1.8 2.8 0.2-1.8zM1868.5 953.4l-0.7 0.1 1.7 2.7 0.3-1.7zM1871.5 958.3l-0.7 0.2 1.7 2.8 0.3-1.8zM1588.5 793.2l-1 1.2-14-0.2-1 1.2-8-0.2-1 1.2-6-0.2-1 1.2-4-0.2-1 1.2-4-0.1-1 1.1-4-0.2-1 1.2-3-0.2-1 1.2-3-0.2-1 1.2-2-0.1-1 1.1-2-0.1-1 1.1-3-0.2-1 1.2-2-0.2-3 2.2-2-0.1-1 1.1-2-0.1-3 2.1-2-0.1-1 1.1-1-0.1-5 3.1-1-0.1-1 1.1-1-0.1-5 3.1-1-0.1-1 1.1-1-0.1-1 1.1-1-0.1-2 2.1-3 0.9-5 4.1-1 0-5 4-1-0.1-3 3.1-1-0.1-4 4.1-1-0.1-6 6.1-1-0.1-10.2 10.2 0.1 1-6 6 0 1-7 8 0 1-4 5 0 1-2 2-0.9 3-2.1 2 0 1-1 1-0.9 3-2.1 2 0 1-2 3 0.1 2-3.1 5 0 1-1 1 0.1 2-2.1 3 0.1 2-2.1 3 0 2-1 1 0 2-1.1 1 0.2 3-1.1 1 0 2-1 1 0.1 3-1.1 1 0.1 3-1.2 1 0.2 4-1.2 1 0.2 4-1.2 1 0.1 5-1.2 1 0.2 7-1.3 1 0.1 10-0.7 1.9-64 3.5-60 4.1-60 4.9-62 6.1-62 7-54 6.9-145 21.6-20 2.1-15 0.6-11-0.9-9-2-8-3.2-13-7.1-5-1.6-5.5-3.9-19.5-16.9-13-9.5-16-9.2-18-7.8-18-5.3-18-2.8-16 0.1-7 1.2-6 1.9-6.9 4.3-2.4 3-1.2 3-0.3 3 0.7 4 3.7 7 7.6 8 10.8 8 13.8 8 16.8 8 19.8 8 19.9 7 47.7 14 57 13.4 64 12.3 49 8 56 7.9 58 7.1 58 6.1 66 5.9 66 4.9 68 4.1 65 3 75 2.6 64 1.5 73 0.8 73 0 73-1 73-1.8 63-2.4 73-3.6 66-4.1 65-5 64-5.9 58-6.3 55-6.8 56-8.1 53-8.8 47-9.1 43-9.7 38.1-10 32.4-10 29.7-11 23.8-11 10.6-6 8.9-6 7.3-6 4.6-5 3.3-5 1.7-5-0.4-6-3-4.7-5-3.6-8-2.8-10-1.5-11 0-12 1.3-13 2.8-21 7.2-11 5.1-10 5.6-16 10.9-22 18.9-5.4 3.8-4.6 1.4-14 7.5-8 3.1-10 2.1-13 0.6-14-0.8-18-2-144-21.4-107-13.1-71-6.9-73-5.9-65-4.3-76-3.8-1.3-0.5 0-1-1.7-1.3-0.6 0.3 9.6 19.2 8 19.7 6 18.7 4 16.3 3 17.3 2 22.8-0.2 18-0.8 11.1-1 5.1-5 0.4-1 1.2-24 0-1 1.1-26-0.1-1 1.1-32-0.1-1 1.1-40-0.1-1 1.1-65 0-1 1-109 0-1-1.1-66 0.1-1-1.1-40 0.1-1-1.1-31 0.1-1-1.2-17-0.4-2-2.3-8-14.1-11-22.9-9-24-6-21.8-4-22.1-1.9-23.1 0.4-20 2.5-21.1 4-17.8 7-20.6 9-18.7 10-15.9 12-15.1 14.9-14.8 15.2-12 17.7-11 18.9-9 19.8-7 20.4-5 20.3-3 21.8-1.2 23 0.7 22 2.5 24.9 5 24 7 21.4 8 21.7 10 21.8 12 20.2 13 20 15 20.6 18 18.4 18.8 0.1-1.8-24.1-24.1-1 0.1-7-7.1-1 0-5-5-1 0-4-4-1 0-7-6-1 0-3-3-1 0-2-2-1 0-2-2-1 0-2-2-1 0-5-4-1 0-2-2-1 0-1-1-1 0-2-2-3-1-2-2-1 0-1-1-3-1-2-2.1-1 0.1-1-1-1 0-1-1-1 0-1-1-1 0-5-3-1 0-1-1-1 0-5-3.1-1 0.1-1-1.1-1 0.1-1-1.1-2 0.1-5-3.1-2 0.1-3-2.1-2 0.1-1-1-1 0-1-1.1-2 0.1-1-1.1-2 0.1-3-2.1-2 0.1-1-1.1-2 0.1-1-1.1-2 0.1-1-1.1-2 0.1-1-1.1-3 0.1-1-1.1-2 0.1-1-1.1-3 0.1-1-1.1-3 0.1-1-1.1-3 0.1-1-1.1-3 0.1-1-1.1-3 0.1-1-1.2-4 0.2-1-1.2-5 0.2-1-1.1-5 0.1-1-1.2-6 0.2-1-1.2-8 0.2-1-1.2-15 0.2-1-1.2z"/>
<path fill="#061234" d="M1576.3 780.5l77.2-0.4 78 0.4 129.3 3 131.5 6 62.7 4 65.1 5 65.5 6 56.2 6 57 7 50 7 50.2 8 44.4 8 44 9 42.8 10 33.8 9 33.2 10 29.2 10 28.5 11 65.4 28 23.9 11 20.3 11 18.7 13 13.3 12 12 14.3 9 14.6 7 16.8 4 16.5 1.6 18.8-0.6 20.7-3 18.6-3 10.6-5 12.5-6 11.6-7 10.7-8 10.3-10 10.8-11 10.2-11.1 9-14 10-12.6 8-15.7 9-17.4 9-38.3 17-40.5 15-47.8 15-52.4 14-61.6 14-62.1 12-66.4 11-71 10-75.9 9-81.7 8-90 7-84 5-95.2 4-76.6 2-100.7 1-101-0.8-91.5-2.2-95.2-4-84-5-90-7-81.7-8-75.9-9-71-10-72-12-65.9-13-60.2-14-51.3-14-46.7-15-39.6-15-37.4-17-30.7-17-25-17-9.9-8-12-11-11-12-7-9-8-12.5-6-11.8-5-13.3-3-11.6-2-13-0.9-19.8 0.9-16.2 2-11.8 3-10.9 5-12.5 6-11.1 7-10.2 8-9.4 9-8.7 10-8.2 13.2-9 14-8 16.2-8 66.6-29 37.5-15 37.8-13 44.5-13 48.6-12 52.4-11 61.4-11 73.4-11 71.9-9 76.8-8 82.5-7 90.2-6 79.6-4 83.8-3zM1588.5 793.1l-1 1.2-14-0.1-1 1.1-8-0.1-1 1.1-6-0.1-1 1.1-4-0.1-1 1.1-4-0.1-1 1.1-4-0.1-1 1.1-3-0.1-1 1.1-3-0.1-1 1.1-2-0.1-1 1.1-2 0-1 1-3-0.1-1 1.1-2-0.1-3 2.2-2-0.1-1 1-2-0.1-3 2.1-2-0.1-1 1.1-1 0-5 3.1-1-0.1-1 1.1-1-0.1-5 3.1-1-0.1-1 1.1-1-0.1-1 1.1-1-0.1-2 2.1-3 0.9-5 4.1-1-0.1-5 4.1-1-0.1-3 3.1-1-0.1-4 4.1-1-0.1-6 6.1-1-0.1-10.2 10.2 0.1 1-6.1 6 0.1 1-7.1 8 0.1 1-4 5 0 1-2 2-1 3-2 2 0 1-1 1-1 3-2.1 2 0.1 1-2.1 3 0.1 2-3 5 0 1-1 1 0 2-2 3 0 2-2.1 3 0.1 2-1.1 1 0.1 2-1.1 1 0.1 3-1 1 0 2-1.1 1 0.1 3-1.1 1 0.1 3-1.1 1 0.1 4-1.1 1 0.1 4-1.1 1 0.1 5-1.2 1 0.2 7-1.3 1-0.1 9-0.5 2.3-119 7.2-115 9.9-57 6.1-57 7-148 20.7-24 2.3-17 0.5-11-0.9-10-2.2-8-2.9-13-6.2-5.7-1.8-6.3-4.5-21-18.4-15-10.9-19-10.9-20-8.5-21-6-21-3.2-9-0.3-9 0.6-8 1.5-6 2-7.2 4.6-2.5 3-1.7 4-0.4 4 0.6 4 1.6 4 3.1 5 7.3 8 11.6 9 15.1 9 18.5 9 19.5 8 22.6 8 25.8 8 29.2 8 33.2 8 32.5 7 71.2 13.1 52 8 53 7.1 60 7 60 6 60 5.1 70 4.9 72 4.1 69 3 118 3.1 86 0.8 77-0.3 129-2.6 77-3 76-4 74-5 61-5.1 62-6 62-7 61-8.1 52-8.1 50.7-9 43.9-9 42.1-10 39.3-11 32.9-11 27.1-11 21.7-11 9.7-6 8.1-6 6.6-6 4.2-5 3.6-6 1.5-5-0.2-6-1.1-3-2.1-3-6-4.5-8-3.1-11-1.8-12-0.2-14 1.4-14 2.8-13 3.8-12 4.4-12 5.5-12 6.5-19 12.8-24.8 21.4-6.2 4.3-5 1.4-14 6.6-9 3.1-11 2-13 0.6-16-0.8-21.4-2.2-139.6-19.6-101-11.9-72-7-65-5.2-75-4.8-73-3.6-0.2-0.9-2.6-2-0.2-1.4-0.9 0.4 10.9 21.8 8 19.8 6 18.9 4 16.6 3 18 1.6 19.9 0 18-1.6 17.1-5 0.4-1 1.2-24 0.1-1 1.1-26-0.1-1 1.1-32-0.1-1 1.1-40-0.1-1 1.1-65-0.1-1 1.1-109 0-1-1.1-66 0.1-1-1.1-40 0.1-1-1.1-31 0-1-1.1-16-0.3-1.4-0.4-7.6-13-7-13.5-7-15.6-9-25-6-23.7-3.8-26.2-0.8-21 1.6-24.3 4-21.4 6-19.5 9-20.4 11-18.3 13-16.6 14.5-14.5 16.5-13 17.9-11 21.7-10 21.3-7 23.8-5 22.3-2.3 24-0.3 23 1.8 27.6 4.8 22.6 6 25.4 9 24.5 11 21.9 12 23.1 15 20.9 16 21.2 19 19.8 20.9 17 21.2 14 20.8 0.2-1.9-1.1-1 0.2-1-4.2-5 0.1-1-2.1-2 0.1-1-4.1-5 0.1-1-3.1-3 0.1-1-3.1-3 0.1-1-3.1-3 0.1-1-4.1-4 0.1-1-5.1-5 0-1-7-7 0-1-24.1-24.1-1 0-7-7-1 0-5-5-1 0-4-4.1-1 0.1-7-6-1 0-3-3.1-1 0.1-2-2-1 0-2-2-1 0-2-2-1 0-5-4-1 0-2-2.1-1 0.1-1-1-1 0-2-2.1-3-0.9-2-2.1-1 0.1-1-1.1-3-0.9-2-2.1-1 0.1-1-1.1-1 0.1-1-1.1-1 0.1-1-1.1-1 0.1-5-3.1-1 0.1-1-1.1-1 0.1-5-3.1-1 0.1-1-1.1-1 0.1-1-1.1-2 0.1-5-3.1-2 0.1-3-2.1-2 0.1-3-2.1-2 0.1-1-1.1-2 0.1-3-2.1-2 0.1-1-1.1-2 0.1-1-1.1-2 0.1-1-1.2-2 0.1-1-1.1-3 0.2-1-1.1-2 0.1-1-1.2-3 0.2-1-1.1-3 0.1-1-1.1-3 0.1-1-1.1-3 0.1-1-1.2-3 0.1-1-1.1-4 0.1-1-1.1-5 0.1-1-1.1-5 0.1-1-1.1-6 0.1-1-1.1-8 0.1-1-1.2-15 0.2-1-1.2zM1868.5 953.3l-1 0.2 3 4.9 0.3-1.9zM1871.5 958.3l-0.9 0.2 3.9 6.9 0.4-1.9-1.2-1 0.2-1-1.2-1 0.2-1z"/>
<path fill="#071338" d="M1589.6 781.5l76.9-0.7 100 1.1 107 2.9 90 4 96 6 86 7.1 87 8.9 72 9.1 72 10.9 66 12.1 58 12.9 48 13 25 8 22 8.1 19 8 16 7.9 11 6.3 13 9.1 8.9 8.3 2.1 3 0.3 2-1.3 1.2-3 0.8-27 2.6-22 4-19 5.1-19 6.9-21 9.9-19 11.7-14 10.5-23 20.3-7 5.1-6.4 1.9-12.6 5.4-8 2.7-9 2-11 1.1-19-0.1-25-2.1-165-21.5-62-7-60-5.9-117-9.1-117-6.3-2.6-2.2 0.1-1-1.2-1 0.2-1-2.2-3 0.2-1-2.3-2-0.9-3-2.1-2 0.1-1-1.1-1 0.1-1-4.2-5 0.1-1-2.1-2 0.1-1-4.1-5 0.1-1-3.1-3 0.1-1-3.1-3 0.1-1-3.1-3 0.1-1-4.1-4 0.1-1-5.1-5 0.1-1-7.1-7 0.1-1-24.2-24.2-1 0.1-7-7.1-1 0.1-5-5.1-1 0.1-4-4.1-1 0.1-7-6.1-1 0.1-3-3.1-1 0.1-2-2.1-1 0.1-2-2.1-1 0.1-2-2.1-1 0.1-5-4.1-1 0.1-2-2.1-3-0.9-2-2.1-3-0.9-2-2.1-1 0.1-1-1.1-3-0.9-2-2.1-1 0.1-1-1.1-1 0.1-1-1.1-1 0.1-1-1.1-1 0.1-5-3.1-1 0.1-1-1.1-1 0.1-5-3.1-1 0-1-1-1 0-1-1.1-2 0.2-5-3.1-2 0.1-3-2.1-2 0.1-1-1.1-1 0-1-1.1-2 0.1-1-1-2 0-3-2.1-2 0.1-1-1.1-2 0.1-1-1.1-2 0.1-1-1.1-2 0.1-1-1.1-3 0.1-1-1.1-2 0.1-1-1.1-3 0.1-1-1.1-3 0.1-1-1.1-3 0.1-1-1.1-3 0.1-1-1.1-3 0.1-1-1.1-4 0.1-1-1.2-5 0.2-1-1.1-5 0.1-1-1.2-6 0.2-1-1.2-8 0.2-1-1.2-15 0.2-1-1.2-16 0-1 1.2-14-0.2-1 1.2-8-0.2-1 1.2-6-0.2-1 1.2-4-0.1-1 1.1-4-0.1-1 1.1-4-0.1-1 1.1-3-0.1-1 1.1-3-0.1-1 1.1-2-0.1-1 1.1-2-0.1-1 1.1-3-0.1-1 1.1-2-0.1-3 2.1-2-0.1-1 1.1-2-0.1-3 2.1-2-0.1-1 1.1-1-0.1-5 3.1-1 0-1 1-1 0-5 3-1 0-1 1-1 0-1 1-1 0-2 2-3 1-5 4.1-1-0.1-5 4.1-1-0.1-8 7.1-1-0.1-6 6.1-1-0.1-10.2 10.2 0.1 1-6.1 6 0.1 1-7.1 8 0.1 1-4.1 5 0.1 1-2.1 2-0.9 3-2.1 2 0.1 1-1 1-1 3-2.1 2 0.1 1-2.1 3 0.1 2-3 5 0 1-1.1 1 0.1 2-2.1 3 0.1 2-2.1 3 0.1 2-1.1 1 0.1 2-1.1 1 0.1 3-1.1 1 0.1 2-1.1 1 0.1 3-1.1 1 0.1 3-1.1 1 0.1 4-1.1 1 0.1 4-1.2 1 0.1 5-1.1 1 0.1 7-1.3 1-0.5 10.6-102 5.9-101 8.1-60 5.9-62 7-167 21.7-30 2.2-11-0.1-10-0.9-14-3.1-17.8-7.3-6.6-2-6.8-5-22.8-20.2-14-10.5-18-11.1-20-9.7-20-7.4-21-5.7-21-3.7-27.2-2.7-3.8-1.3-0.5-1.7 0.9-2 6.6-7.2 9-7.1 13-8.2 13-6.9 18-8.2 23-9 21-7.1 30-8.9 39-10.1 45-9.9 42-8.1 47-8 47-7 53-6.9 53-6.1 60-5.9 59-5 123-8.1 119-5 79-2zM1586.4 796.5l16.1-0.2 16 0.9 13 1.3 18.3 3 28.1 7 15.3 5 15.5 6 29.4 14 28.4 17 27.1 20 12.9 11 13 12.3 22 24 10 12.7 10 14.1 16 26.9 7 14.2 6 14.1 9 27.2 3 12.2 3 16.3 2 18 0.5 13-0.5 17-1.2 12-4.8 0.5-1 1.2-24 0-1 1.1-26 0-1 1.1-32-0.1-1 1.1-40-0.1-1 1.1-65-0.1-1 1.1-109 0-1-1.1-66 0.1-1-1.1-40 0.1-1-1.1-31 0-1-1.1-17.1-0.7-14.9-27.2-7-15.7-5-13-8-27.2-3-14.7-2-14-1-12.2-0.3-16 0.6-12 1.7-14.7 5-22.9 4-12.4 5-12.3 6-12 6-10.2 8-11.4 7-8.6 9-9.6 9.7-8.9 10.1-8 10.3-7 12.1-7 12.3-6 12.4-5 12.1-4 11.3-3 14.8-3 14.9-2zM605.1 937.5l10.9 0 3.5 0.8 2.2 1.2 2.1 4 1.3 11 1.5 6 2.9 6.5 4.2 6.5 6 7 7.8 7 9.6 7 11.3 7 13.1 6.9 15 7 28 11 40 12.9 37 10 48 11 51 10 53 8.9 70 10.1 66 7.9 80 8 74 6 77 5.1 132 5.9 131 3 132 0.1 108-2.1 127-5 114-7 115-9.9 105-12.1 50-6.9 44-7 40-7.1 40-7.9 35-7.9 39-10.1 27-7.9 32-11 22-9 18.5-8.9 15.7-9 13.8-10 10.2-10 6.9-10 3.4-9 2-14 1.2-3 3.3-2.3 6-0.9 12 0.6 16 2.5 15 3.9 13 4.5 13 5.8 12 6.7 11 7.7 10 8.7 8 8.6 7 9.4 6 10.2 5 11.3 4 13.3 2 11.1 1 12.9-0.2 13-1.8 19.2-2 9.6-3 10.1-8 18.2-10 15.9-14 16.8-16.3 15.2-19.7 15-23.8 15-26.6 14-28.8 13-33.3 13-38.5 13-40.8 12-42.5 11-43.7 10-49.3 10-56.3 10-57.9 9-59.1 8-59.4 7-58.8 6-69.3 6-70.4 5-70.8 4-70.2 3-66.6 2-74.9 1.3-79 0.2-68-0.6-83.8-1.9-79-3-58.7-3-63.2-4-65-5-65.3-6-56.1-6-57.1-7-57.1-8-56.2-9-49.6-9-48.7-10-43.2-10-42.1-11-37.1-11-35.8-12-31.2-12-29.5-13-27.1-14-26-16-22.3-17-9.9-9-9-9.4-8-9.6-7-10-5-8.5-5-10.3-4-10.7-3-11.1-2-11.8-1-13.5 0.2-20.1 1.8-13.3 2-8.4 3-9.1 5-11.2 5-8.6 6-8.4 7-8 8-7.6 8-6.3 10-6.7 10-5.4 11-5 12-4.4 13-3.6 13-2.6z"/>
<path fill="#08153c" d="M1642.1 781.5l100.4 0.6 60 1.2 91 2.9 84 4.1 78 5 86 7 70 7 75 9.1 68.8 10.1 62.7 11 56.9 12 46.9 12 23.3 7 20.5 7 17.8 7 13 6 10.9 6 8.3 6 5.1 6 1.1 3 0 2-1.1 3-1.6 2-7 5-45.6 21.7-14 7.8-13 8.2-18 13.5-27 24.3-7.5 5.5-27.5 9.5-9 1.9-10 1.1-22 0.2-29-2.3-171-21-119-11.9-108-8.1-113-5.9-2.4-1.5 0.1-1-1.2-1 0.1-1-1.2-1 0.1-1-1.1-1 0.1-1-2.2-2-0.9-3-2.2-2 0.1-1-1.1-1 0.2-1-4.2-5 0.1-1-2.1-2 0.1-1-4.1-5 0.1-1-3.2-3 0.1-1-3.1-3 0.1-1-3.1-3 0.1-1-4.1-4 0.1-1-5.1-5 0.1-1-7.1-7 0.1-1-24.2-24.2-1 0.1-7-7.1-1 0.1-5-5.1-1 0.1-4-4.1-1 0.1-7-6.1-1 0.1-3-3.1-1 0.1-2-2.1-1 0.1-2-2.1-1 0.1-2-2.1-1 0.1-5-4.1-1 0.1-2-2.1-3-0.9-2-2.1-3-0.9-2-2.1-1 0-1-1-3-0.9-2-2.1-1 0-1-1-1 0-1-1-1 0-1-1-1 0-5-3-1 0-1-1-1 0-5-3-1 0-1-1.1-1 0.1-1-1.1-2 0.1-5-3.1-2 0.1-3-2.1-2 0.1-1-1-1 0-1-1.1-2 0.1-1-1.1-2 0.1-3-2.1-2 0.1-1-1.1-2 0.1-1-1.1-2 0.1-1-1.1-2 0.1-1-1.1-3 0.1-1-1.1-2 0.1-1-1.1-3 0.1-1-1.1-3 0.1-1-1.1-3 0.1-1-1.1-3 0.1-1-1.1-3 0-1-1.1-4 0.1-1-1.1-5 0.1-1-1.1-5 0.1-1-1.1-6 0.1-1-1.1-8 0.1-1-1.1-15 0.1-1-1.2-16 0-1 1.2-14-0.1-1 1.1-8-0.1-1 1.1-6-0.1-1 1.1-4-0.1-1 1.1-4-0.1-1 1.1-4-0.1-1 1.1-3-0.1-1 1.1-3-0.1-1 1.1-2 0-1 1-2 0-1 1.1-3-0.2-1 1.1-2-0.1-3 2.2-2-0.1-1 1.1-2-0.1-3 2.1-2-0.1-1 1.1-1-0.1-5 3.1-1-0.1-1 1.1-1-0.1-5 3.1-1-0.1-1 1.1-1-0.1-1 1.1-1-0.1-2 2.1-3 0.9-5 4.1-1 0-5 4-1 0-8 7-1 0-6 6-1 0-10.2 10.2 0.1 1-6.1 6 0.1 1-7.1 8 0.1 1-4.1 5 0.1 1-2.1 2-0.9 3-2.1 2 0.1 1-1.1 1-0.9 3-2.1 2 0.1 1-2.1 3 0.1 2-3.1 5 0.1 1-1.1 1 0.1 2-2.1 3 0.1 2-2.1 3 0.1 2-1.1 1 0.1 2-1.1 1 0.1 3-1.1 1 0.1 2-1.1 1 0.1 3-1.1 1 0.1 3-1.2 1 0.2 4-1.2 1 0.1 4-1.1 1 0.1 5-1.2 1 0.1 7-1.2 1-0.5 9.9-98 5.6-93 7.1-118 11.8-175 21.4-31 2.1-12-0.2-11-0.9-15-3.1-24.7-8.7-7.3-5.4-28-25.1-20-14.6-12-7.4-14-7.7-42-19.8-6.5-4-3.9-4-0.9-2-0.2-3 2.4-5 6.3-6 9.2-6 11.6-6 16.2-7 19-7 21.7-7 32.1-9 37.2-9 42.9-9 43.8-8 43.3-7 49.8-7.1 57-7.1 56-6 54-5 64-5 117-7.1 70-2.9 67-2.1zM1579.9 797.5l15.6-0.6 15 0.3 15.9 1.3 14.5 2 15.6 3 16 4 16.1 5 16.2 6 16.1 7 14.2 7 14.4 8 16 10 26.1 19 11.9 10 14 12.9 12 12.4 11 12.5 19 25 9 13.9 8 14.1 7 14 6 13.8 5 13.5 5 16.6 3 12.5 3 17 1.6 15.8 0.6 13-0.3 14-1.4 15-4.5 0.4-1 1.2-24 0.1-1 1.1-26 0-1 1-32 0-1 1.1-40-0.1-1 1.1-65-0.1-1 1.1-109 0-1-1.1-66 0.1-1-1.1-40 0-1-1.1-31 0-1-1.1-16.7-0.6-14.3-25.9-11-25.5-5-14.7-4-14.4-5-26.1-1.4-14.4-0.6-15 0.6-14 1.4-13.9 5-24 4-12.7 4-10.1 6-12.6 6-10.5 7-10.5 7-8.9 8-9 9.1-8.8 10.8-9 9.8-7 11.4-7 11.5-6 11.3-5 13.9-5 14.1-4 14.1-3zM556.3 959.5l8.2-0.7 7 0.3 6.9 1.4 6.1 2.2 10 5.6 29.1 20.2 19 11 27.2 13 33.5 13 30.7 10 35.5 10 41 10 42.4 9 54.2 10 56.7 9 58.3 8 68.3 8 60.2 6 71.3 6 72.7 5 73.9 4 112 4.3 118 2.2 118-0.1 116-2.3 107.5-4.1 118.7-7 98.5-8 95.7-10 91.1-12 79.4-13 69.5-14 33.7-8 30.1-8 47.8-15 18.9-7 19.2-8 18.8-9 16.3-9 14.1-9 20.7-14.6 8-4.8 10-3.9 10-1.4 8 0.3 9 1.6 9 2.8 9 4 8 4.6 8 5.7 7 6.1 7 7.4 6 8 5 8.2 4 8.4 3 8.2 4 17.9 1 11.5-0.1 11-1.9 22.3-4 16.8-7 17.3-9 15.3-13 16.6-15.9 15.7-18.8 15-21.2 14-25.2 14-27.4 13-31.6 13-33.6 12-38.4 12-40 11-45.3 11-46.6 10-52.9 10-54.1 9-54.8 8-62.8 8-63.9 7-64.3 6-63.7 5-79 5-60.9 3-84.6 3-133 2.1-64-0.1-70.3-1-74.6-2-73.9-3-73-4-58.6-4-114.3-10-63.9-7-55.5-7-55.6-8-49.2-8-49.2-9-43.8-9-43.4-10-42.2-11-37.4-11-35.9-12-31.5-12-29.6-13-27.3-14-23.2-14-20.6-15-16.9-15-14.1-15.8-11-16.1-8-16.1-3-8.3-3-11.1-1.9-11.6-1.1-14.1-0.2-11.9 0.6-10 1.6-10.6 2-8.2 4-11.2 4-8.3 6-9.7 6-7.6 8-8.1 8-6.5 9-5.8 9-4.4 10-3.6z"/>
<path fill="#081740" d="M1571.8 782.5l85.7-0.5 85 0.6 86.5 1.9 103.5 4 88.4 5 81 6 75.9 7 71.3 8 73.7 10 66.7 11 59.8 12 48.9 12 42 13 18.2 7 13 6 10.5 6 7.7 6 4.5 6 0.9 3-0.1 3-0.9 3-1.9 3-6 6-9.6 7-30 19.7-15 11-14 11.5-25.3 23.8-7.7 6.2-4 2.1-5 1.1-19 6.2-10 2.1-10 1.2-24 0.4-32-2.3-178-20.5-115-10.9-100-7.2-110-5.7-2.4-2.7-1-3-1.1-1 0.1-1-2.3-2-0.9-3-2.1-2-0.9-3-2.2-2 0.1-1-2.1-2 0.1-1-2.1-2 0.1-1-4.1-5 0.1-1-3.1-3 0.1-1-3.1-3 0-1-3-3 0-1-4.1-4 0.1-1-5.1-5 0.1-1-7.1-7 0.1-1-24.2-24.2-1 0.1-7-7.1-1 0.1-5-5.1-1 0.1-4-4.1-1 0.1-7-6.1-1 0.1-3-3.1-1 0-2-2-1 0-2-2-1 0-2-2-1 0-5-4-1 0-2-2-3-1-2-2-3-1-2-2-1 0-1-1-3-1-2-2.1-1 0.1-1-1.1-1 0.1-1-1-1 0-1-1-1 0-5-3-1 0-1-1-1 0-5-3.1-1 0.1-1-1.1-1 0.1-1-1.1-2 0.1-5-3.1-2 0.1-3-2.1-2 0.1-1-1.1-1 0.1-1-1.1-2 0.1-1-1.1-2 0.1-3-2.1-2 0-1-1-2 0-1-1-2 0-1-1.1-2 0.1-1-1.1-3 0.1-1-1-2 0-1-1.1-3 0.1-1-1.1-3 0.1-1-1.1-3 0.1-1-1.1-3 0.1-1-1.1-3 0.1-1-1.1-4 0.1-1-1.1-5 0.1-1-1.1-5 0.1-1-1.1-6 0.1-1-1.2-8 0.2-1-1.2-15 0.1-1-1.1-16 0-1 1.1-14-0.1-1 1.2-8-0.2-1 1.2-6-0.2-1 1.2-4-0.1-1 1.1-4-0.1-1 1.1-4-0.1-1 1.1-3-0.1-1 1.1-3-0.1-1 1.1-2-0.1-1 1.1-2-0.1-1 1.1-3-0.1-1 1.1-2-0.1-3 2.1-2 0-1 1-2-0.1-3 2.1-2-0.1-1 1.1-1 0-5 3.1-1-0.1-1 1.1-1-0.1-5 3.1-1-0.1-1 1.1-1-0.1-1 1.1-1-0.1-2 2.1-3 0.9-5 4.1-1-0.1-5 4.1-1-0.1-8 7.1-1-0.1-6 6.1-1-0.1-10.2 10.3 0 1-6 6 0 1-7 8 0 1-4 5 0.1 1-2.1 2-0.9 3-2.1 2 0.1 1-1.1 1-0.9 3-2.1 2 0 1-2 3 0.1 2-3.1 5 0.1 1-1.1 1 0.1 2-2.1 3 0.1 2-2.1 3 0 2-1 1 0 2-1 1 0.1 3-1.1 1 0 2-1 1 0 3-1.1 1 0.1 3-1.1 1 0.1 4-1.1 1 0.1 4-1.1 1 0.1 5-1.2 1 0.1 7-1.3 1-0.4 9.1-111 6.4-111 8.9-89 9-131.8 15.6-39.1 4-29.1 1.5-22-1.2-17-3.4-16-5.5-5-1-4.4-2.4-6.6-5.2-22-20.8-15-12.8-19-14.1-34.9-23.1-7.3-6-4-5-1.6-5 1-5 3.6-5 7.1-6 10.1-6 12.6-6 15-6 17.3-6 30.2-9 31.5-8 36-8 41.2-8 41-7 46.3-7 96.1-12 104.2-10 113.3-8 128.5-6zM1576.1 798.5l15.4-0.9 14 0.1 14.1 0.8 17.1 2 16.8 3 16.6 4 16.5 5 14 5 16.7 7 14.5 7 14.8 8 14.8 9 14.7 10 13.4 10 12.1 10 13.9 12.7 12 12.1 11 12.3 10 12.3 10 13.6 9 13.8 8 13.8 7 13.8 6 13.6 5 13.2 5 16.1 6 27.5 2 16.4 0.8 15.8-0.3 15-1.4 15-4.1 0.4-1 1.1-24 0.2-1 1.1-26-0.1-1 1.1-32 0-1 1-40 0-1 1-65 0-1 1.1-109-0.1-1-1-66 0-1-1-40 0-1-1.1-31 0-1-1.1-16.3-0.6-14.7-26.8-6-13.1-6-15.4-8-26.8-3-14.3-2-13.3-1.5-25.3 0.4-14 1.1-11.5 2-12.6 3-12.9 4-13 4-10.3 5-10.8 6-10.9 7-10.8 7-9.2 8-9.2 9-8.9 9.2-7.9 10.8-8 11-7 11.1-6 10.9-5 13.1-5 13-4 12.4-3zM542 972.5l7.5-0.9 8 0.1 8 1.3 8 2.3 14 6 40.4 20.2 25 11 31.8 12 37.5 12 36.3 10 37.3 9 42.2 9 48 9 55.2 9 56.4 8 56.9 7 67 7.1 65.1 5.9 70.9 5.3 77 4.7 71 3.3 108 3.4 109 1.5 110-0.4 109-2.3 111-4.5 102-6 101-8 89.3-9 80.3-10 79.2-12 70.5-13 66.6-15 47.5-13 42.6-14 20.9-8 21-9 56.1-27.4 12-3.9 11-1.6 8 0.2 7 1.1 7 1.9 7 2.9 7 3.9 7 4.9 6 5.4 6 6.6 5 6.8 4 6.9 4 8.7 2.9 8.6 3.1 16 0.6 19-1.9 22-3.7 16.4-7 17.6-9 15.4-12 15.4-15.1 15.2-18.4 15-20.9 14-24.7 14-26.9 13-31.2 13-33.1 12-37.7 12-39.3 11-40.2 10-45.2 10-51.2 10-52.2 9-59.7 9-61 8-61.9 7-61.7 6-60.5 5-73.4 5-124.6 6-66.5 2-83.6 1.4-134-0.4-73-1.6-70.2-2.4-63.6-3-66.5-4-113.5-9-60.2-6-60.5-7-52.9-7-53.4-8-53-9-47-9-46.3-10-41.1-10-40.2-11-35.6-11-34.1-12-29.9-12-28.2-13-26-14-21.9-14-18.3-14-16.6-15.6-13-15.5-10-15.7-4-8-4-10.1-3-10.3-2-10.6-1.9-27.2 0.5-11 1.4-10 2-8.3 3-8.8 4-8.6 5-8.2 6-7.7 7-7 8-6.2 8-4.6 8-3.3z"/>
<path fill="#091844" d="M1641.4 782.5l82.1 0.4 85.1 1.6 88.3 3 80.8 4 76.7 5 73.4 6 70.3 7 74.3 9 68 10 56.6 10 51.7 11 45.7 12 35.6 12 14 6 11.4 6 8.7 6 5 5 2.9 5 0.8 6-2.5 7-7.4 9-41.4 35.4-31.4 30.6-8.1 7-6.5 3.7-5 1-16 4.9-11 2.4-12 1.5-25 0.5-34-2.2-178-19.4-120-10.9-101-6.9-97-4.7-0.1-0.9-1.2-1 0-1-1.1-1 0.1-1-1.2-1 0.1-1-2.2-2-0.9-3-2.2-2-0.9-3-4.1-5 0-1-2.1-2 0.1-1-4.1-5 0.1-1-3.1-3 0.1-1-3.1-3 0.1-1-3.1-3 0.1-1-4.1-4 0-1-5-5 0-1-7.1-7 0.1-1-24.2-24.2-1 0-7-7-1 0-5-5-1 0-4-4-1 0-7-6-1 0-3-3-1 0-2-2-1 0-2-2-1 0-2-2-1 0-5-4-1 0-2-2.1-3-0.9-2-2.1-3-0.9-2-2.1-1 0.1-1-1.1-3-0.9-2-2.1-1 0.1-1-1.1-1 0.1-1-1.1-1 0.1-1-1.1-1 0.1-5-3.1-1 0.1-5-3.1-1 0.1-1-1.1-1 0-1-1-1 0-1-1-2 0.1-5-3.1-2 0.1-3-2.1-2 0-1-1-1 0-1-1-2 0-1-1-2 0-3-2.1-2 0.1-1-1.1-2 0.1-1-1.1-2 0.1-1-1.1-2 0.1-1-1.1-3 0.1-1-1.1-2 0.1-1-1.1-3 0.1-1-1.1-3 0.1-1-1.1-3 0.1-1-1.1-3 0.1-1-1.1-3 0.1-1-1.2-4 0.1-1-1.1-5 0.1-1-1.1-5 0.1-1-1.1-6 0.1-1-1.1-8 0.1-1-1.1-15 0.1-1-1.2-16 0-1 1.2-14-0.1-1 1.1-8-0.1-1 1.1-6-0.1-1 1.1-4-0.1-1 1.1-4-0.1-1 1.1-4-0.1-1 1.1-3-0.1-1 1.1-3-0.1-1 1.1-2 0-1 1.1-2-0.1-1 1.1-3-0.1-1 1.1-2-0.1-3 2.1-2-0.1-1 1.1-2-0.1-3 2.1-2-0.1-1 1.1-1-0.1-5 3.1-1 0-1 1-1 0-5 3-1 0-1 1-1 0-1 1-1 0-2 2-3 1-5 4.1-1-0.1-5 4.1-1-0.1-8 7.1-1-0.1-6 6.1-1-0.1-10.3 10.3 0.1 1-6 6 0 1-7 8 0 1-4 5 0 1-2 2-1 3-2 2 0 1-1 1-1 3-2 2 0 1-2 3 0.1 2-3.1 5 0 1-1 1 0 2-2 3 0 2-2.1 3 0.1 2-1.1 1 0.1 2-1.1 1 0.1 3-1 1 0 2-1.1 1 0.1 3-1.1 1 0.1 3-1.1 1 0.1 4-1.1 1 0.1 4-1.2 1 0.1 5-1.2 1 0.1 7-1.2 1-0.4 8.3-109 6.1-103 8-84 8.1-139 15.5-38 3.6-33 1.5-24-1.5-13-2.4-18-5.5-4.2-0.7-7.5-4-8.1-7-31.2-30.4-39.5-33.6-7.4-8-3.6-6-1.1-6 1.8-6 4.8-6 7.7-6 10.5-6 15.6-7 16.1-6 22-7 33.3-9 34.6-8 40-8 39.9-7 45.4-7 51.9-7 100-11 108.9-9 120.8-7 111-4zM1588 798.5l16.5-0.1 15 0.8 14 1.6 16.4 2.7 17.5 4 13.9 4 29.8 11 15.3 7 15.3 8 27.6 17 26.6 20 24.6 22.4 12 12.6 10 11.6 9 11.4 10 14.2 8 12.7 8 14.3 7 14.4 6 14.4 5 14.4 4 14.1 3 13.3 2.7 17.2 1.3 13.5 0.4 13.5-0.4 13.5-1.3 13.5-3.7 0.3-1 1.2-24 0.1-1 1.1-26 0-1 1.1-32-0.1-1 1.1-40-0.1-1 1.1-65 0-1 1-109 0-1-1-66 0-1-1.1-40 0.1-1-1.1-31 0-1-1.1-15.8-0.6-14.2-25.6-7-15.4-5-12.7-5-15.1-4-15.1-4.7-27.1-1.2-14-0.2-13 0.6-13 1.5-13.2 5-23.4 4-12.5 5-12.3 6-12.1 6-10.1 7-10.1 8-9.9 9-9.6 9.6-8.8 10.1-8 10.3-7 12.1-7 12.3-6 12.4-5 12.1-4 11.3-3 14.8-3 15.1-2zM538.5 982.5l7-0.5 8 0.5 8 1.4 9 2.4 16 5.9 47 19.3 27 10 36.9 12 39 11 39.1 9.6 41 9 43.7 8.4 46.7 8 54.6 8.2 60 7.9 64 7.3 65 6.3 67 5.5 71 4.8 72 3.9 72 3 103 2.8 105 1.1 104-0.7 105-2.4 102-4 98.8-5.7 96.2-7.4 91-8.8 81.3-9.8 75.9-11 69-12 62.6-13 48.9-12 44.9-13 46.4-16 66-26.6 14-4 13-1.8 7 0.1 7 1 7 1.9 6 2.5 6 3.3 6 4.3 10 10.2 8 12.6 5.3 13.5 3.1 16 0.6 16.9-2.4 24.1-2.6 12.5-6 16.3-9 16.3-12 15.9-14.5 15-18.1 15-20.5 14-24.3 14-26.5 13-30.7 13-32.5 12-37.1 12-38.6 11-39.6 10-44.4 10-50.2 10-51.1 9-51.4 8-58.5 8-58.7 7-68.6 7-57.6 5-68.9 5-68.7 4-67 3-61 2-71.5 1.5-65 0.5-68-0.2-67-1.1-72-2-123.1-5.7-61.6-4-63.7-5-64.4-6-55.3-6-56.5-7-56.5-8-49.9-8-49.8-9-48.9-10-43.4-10-42.3-11-37.3-11-33.1-11-31.8-12-30-13-25.9-13-23.7-14-20-14-17.6-15-14.1-15-11.1-15.1-9-16.9-4-10.5-3-11.5-3-26-0.2-11 0.7-10 1.5-9.2 3-10.4 4-9.3 4-7 6-7.9 6-6 7-5.3 8-4.4 8-2.9z"/>
<path fill="#0a1a48" d="M1587 783.5l98.5-0.3 95.9 1.3 71.4 2 93.2 4 83.1 5 77.4 6 72.9 7 76.3 9 69.2 10 62.3 11 50.8 11 44.2 12 18.2 6 15.4 6 12.9 6 8.7 5 7.9 6 5.2 6 2.6 6 0.2 6-1.1 4-2.4 5-8.3 11-54 56-9 8.2-5 3.4-4 1.7-25 6.3-18 2.5-27 0.6-36-2.1-185-19.1-116-10-93-6-93-4.5-2.3-3-1-3-2.2-2-1-3-2.1-2-0.9-3-2.2-2 0.1-1-2.1-2 0.1-1-2.1-2 0.1-1-4.1-5 0.1-1-3.2-3 0.1-1-6.1-7 0.1-1-4.1-4 0.1-1-5.1-5 0.1-1-7.1-7 0-1-24.2-24.2-1 0-7-7-1 0-5-5-1 0-4-4.1-1 0.1-7-6.1-1 0.1-3-3.1-1 0.1-2-2.1-1 0.1-2-2.1-1 0.1-2-2.1-1 0.1-5-4.1-1 0.1-2-2.1-1 0.1-1-1.1-1 0.1-2-2.1-3-0.9-2-2.1-1 0.1-1-1.1-3-0.9-2-2.1-1 0-1-1-1 0-1-1-1 0-1-1-1 0-5-3-1 0-5-3-1 0-1-1-1 0-1-1-1 0-1-1.1-2 0.1-5-3.1-2 0.1-3-2.1-2 0.1-1-1-1 0-1-1.1-2 0.1-1-1.1-2 0.1-3-2.1-2 0.1-1-1.1-2 0.1-1-1.1-2 0.1-1-1.1-2 0.1-1-1.1-3 0.1-1-1.1-2 0-1-1-3 0.1-1-1.1-3 0-1-1-3 0-1-1-3 0-1-1.1-3 0.1-1-1.1-4 0.1-1-1.1-5 0.1-1-1.1-5 0.1-1-1.1-6 0.1-1-1.2-8 0.2-1-1.2-15 0.1-1-1.1-16 0-1 1.1-14-0.1-1 1.1-8-0.1-1 1.2-6-0.2-1 1.2-4-0.1-1 1.1-4-0.1-1 1.1-4-0.1-1 1.1-3-0.1-1 1.1-3-0.1-1 1.1-2-0.1-1 1.1-2 0-1 1-3-0.1-1 1.1-2-0.1-3 2.1-2 0-1 1-2 0-3 2.1-2-0.1-1 1-1 0-5 3.1-1-0.1-1 1.1-1-0.1-5 3.1-1 0-1 1-1-0.1-1 1.1-1-0.1-2 2.1-3 1-5 4-1 0-5 4-1 0-8 7.1-1-0.1-6 6.1-1-0.1-10.3 10.3 0.1 1-6.1 6 0.1 1-7.1 8 0.1 1-4 5 0 1-2 2-1 3-2 2 0 1-1 1-1 3-2.1 2 0.1 1-2 3 0 2-3 5 0 1-1 1 0 2-2 3 0 2-2.1 3 0.1 2-1.1 1 0.1 2-1.1 1 0.1 3-1.1 1 0.1 2-1.1 1 0.1 3-1.1 1 0.1 3-1.1 1 0 4-1.1 1 0.1 4-1.1 1 0.1 5-1.2 1 0 7-1.2 1-0.3 7.4-106 5.9-97 7.2-85 7.8-136 14.4-39 3.6-35 1.5-14-0.3-13-1.2-13-2.3-23-5.9-4-1.9-4.5-3.2-8.7-8-52.2-54-8.2-10-4.7-9-0.8-7 1.7-6 4.3-6 7.1-6 9.7-6 12.4-6 17.8-7 18.1-6 28.3-8 28.8-7 38-8 38.1-7 43.5-7 42.3-6 93.4-11 112.9-10 111-7 123.7-5zM1584.2 799.5l15.3-0.4 15 0.5 16 1.6 15.3 2.3 29.6 7 15.6 5 15.8 6 15.8 7 14 7 15.8 9 14.2 9 25.9 19 13 11 13 12.2 22 23.8 19 25 9 14 8 14.2 7 14.2 6 14.2 5 14 4 13.7 3 12.6 3 17.6 1.4 14.5 0.6 14-0.4 14-1.4 14-3.2 0.3-1 1.1-24 0.2-1 1.1-26 0-1 1.1-32-0.1-1 1.1-40-0.1-1 1.1-65-0.1-1 1.1-109 0-1-1.1-66 0.1-1-1.1-40 0-1-1-31-0.1-1-1.1-15.3-0.5-14.7-26.7-6-13.1-6-15.3-8-26.6-5-27.2-1.1-12.1-0.5-14 1.6-25.2 2-12.3 3-12.8 4-12.9 5-12.5 6-12.3 6-10.2 7-10.2 8-10 9-9.7 9.7-8.9 10.1-8 10.2-7 10.2-6 11.9-6 11.8-5 14.7-5 25.6-6zM538.4 991.5l15.1 0.7 17 3.8 18 5.8 52.8 18.7 27.8 9 37.8 11 39.6 10.2 40 9.1 44 8.9 46 8.2 49 7.8 57 8.1 60 7.3 63 6.7 66 6 67 5.1 69 4.3 71 3.6 73 2.8 102 2.4 99 0.8 101-0.8 100-2.3 99-4 96-5.4 93-7 87-8.2 80-9.2 74-10.2 68.6-11.2 64.4-12.5 50.6-11.5 45.6-12 48.8-15 73-25.4 16-4 13-1.6 13 0.7 12 3.5 11 6.4 9 8.6 7 10.4 5.5 13.4 2.9 14 0.6 16-3 27.3-2.3 10.7-5.7 15.3-9 16.2-11.8 15.5-14.6 15-16.9 14-20.4 14-22.3 13-26 13-30.2 13-32 12-33.3 11-37.6 11-42.5 11-43.6 10-49.3 10-50.1 9-50.3 8-57 8-57.1 7-56 6-65.4 6-65.2 5-122.6 7-79.8 3-66 1.5-68 0.8-70 0-69-0.9-66-1.7-72-2.7-59.2-3-116.5-8-67.3-6-57.4-6-58.2-7-51.1-7-51.9-8-51.5-9-45.7-9-45.3-10-44-11-38.8-11-34.4-11-33.1-12-31.2-13-27-13-24.7-14-20.9-14-18.5-15-14.9-15-12.3-16-9-16-4.1-10.1-3-10.3-3.9-27.6-0.4-10 0.5-10 1.6-10 2.2-8.2 3.6-8.8 4.4-7.7 5-6.5 6-5.8 7-4.9 7-3.4 8-2.5z"/>
<path fill="#0a1b4c" d="M1566.4 784.5l89.1-0.6 89 0.7 84.9 1.9 100.5 4 86.2 5 79 6 73.7 7 68.9 8 70.6 10 57.8 10 56 12 43.9 12 17.8 6 15 6 12.5 6 9.8 6 7.2 6 4.8 6 2.5 6 0.3 7-1.2 5-2.6 6-8.6 13-34.6 41-14.4 14.6-5 3.6-5 2.3-25 5.8-18 2.5-26 0.7-33-1.5-45-4-137-13.7-90-7.7-105-7.2-110-5.4-1.2-3-1.1-1 0-1-2.2-2-0.9-3-2.2-2-0.9-3-4.2-5 0.1-1-2.1-2 0.1-1-4.1-5 0.1-1-3.1-3 0-1-6.1-7 0.1-1-4.1-4 0.1-1-5.1-5 0.1-1-7.1-7 0.1-1-24.3-24.3-1 0.1-7-7.1-1 0.1-5-5.1-1 0.1-4-4.1-1 0.1-7-6.1-1 0.1-3-3.1-1 0.1-2-2.1-1 0.1-2-2.1-1 0.1-2-2.1-1 0.1-5-4.1-1 0.1-2-2.1-1 0-1-1-1 0.1-2-2.1-3-0.9-2-2.1-1 0-1-1-3-1-2-2-1 0-1-1-1 0-1-1-1 0-1-1-1 0-1-1-1 0-3-2-1 0-5-3-1 0-1-1.1-1 0.1-1-1.1-1 0.1-1-1.1-2 0.1-5-3.1-2 0.1-3-2.1-2 0.1-1-1.1-1 0.1-1-1.1-2 0.1-1-1.1-2 0.1-3-2.1-2 0-1-1-2 0-1-1-2 0-1-1.1-2 0.1-1-1.1-3 0.1-1-1-2 0-1-1.1-3 0.1-1-1.1-3 0.1-1-1.1-3 0.1-1-1.1-3 0.1-1-1.1-3 0.1-1-1.1-4 0.1-1-1.2-5 0.1-1-1-5 0-1-1.1-6 0.1-1-1.1-8 0.1-1-1.1-15 0.1-1-1.2-16 0-1 1.2-14-0.1-1 1.1-8-0.1-1 1.1-6-0.1-1 1.1-4-0.1-1 1.1-4 0-1 1-4-0.1-1 1.1-3 0-1 1-3 0-1 1.1-2-0.1-1 1.1-2-0.1-1 1.1-3-0.1-1 1.1-2-0.1-3 2.1-2-0.1-1 1.1-2-0.1-3 2.1-2-0.1-1 1.1-1 0-1 1-1 0-5 3.1-1-0.1-5 3.1-1-0.1-1 1.1-1-0.1-1 1.1-1-0.1-2 2.1-3 0.9-5 4.1-1 0-5 4-1 0-8 7-1 0-6 6-1 0-10.3 10.3 0.1 1-6.1 6 0.1 1-7.1 8 0.1 1-4.1 5 0.1 1-2.1 2-0.9 3-2.1 2 0.1 1-1 1-1 3-2.1 2 0.1 1-2.1 3 0.1 2-3 5 0 1-1.1 1 0.1 2-2.1 3 0.1 2-2.1 3 0.1 2-1.1 1 0.1 2-1.1 1 0.1 3-1.1 1 0.1 2-1.1 1 0 3-1 1 0 3-1.1 1 0.1 4-1.1 1 0.1 4-1.1 1 0 5-1.1 1 0 7-1.2 1-0.3 6.5-95 5-99 7.1-79 6.9-135 13.5-46 4-38 1.5-15-0.4-13-1.1-12-2-23-5.4-5-2.3-6-4.3-13.6-14-33-39-9.1-13-4.3-10-0.7-7 1.8-7 4.9-7 6.8-6 11.2-7 12.5-6 15-6 17.8-6 28-8 28.7-7 33-7 37.7-7 78.1-12 91.7-11 98-9 103.2-7 108.1-5zM1582.4 800.5l15.1-0.5 15 0.4 14 1.1 16 2.3 14 2.7 16 4 16.1 5 16.1 6 16.1 7 14.1 7 14.4 8 16 10 27.3 20 13 11 12.8 12 22.1 23.8 19 25.1 9 14 7 12.3 7 14 6 14 9 27 4 17 2.3 13.8 1.7 16 0.5 13-0.5 16-1.3 13-2.7 0.2-1 1.1-24 0.3-1 1.1-26 0-1 1-32 0-1 1.1-40-0.1-1 1.1-65-0.1-1 1.1-109 0-1-1.1-66 0.1-1-1.1-40 0-1-1.1-31 0-1-1.1-14.7-0.5-14.3-25.7-7-15.3-5-12.8-8-25.9-3-13.6-2.4-14.7-1.3-14-0.4-13 0.5-13 1.3-13 2.3-13.3 3-12.2 8-22.4 5-10.6 6-10.6 7-10.6 8-10.3 9-9.8 9-8.6 9.3-7.6 11.3-8 21.4-12 11.4-5 13.9-5 14.1-4 12.6-2.7zM532.1 1000.5l7.4-0.6 9 0.4 21 3.8 114.8 34.4 42.6 11 43.8 10 42.8 8.7 43 7.9 94 14.5 58 7.5 61 6.9 61 6 64 5.3 66 4.7 69 4 70 3.2 72 2.5 97 2 97 0.6 98-0.9 96-2.4 95-3.8 92-5.1 89-6.5 86-7.9 76-8.4 74-9.7 68-10.5 63.6-11.6 47.7-10 46.2-11 51.1-14 83.4-25.7 18-4.1 14-1.7 13 0.6 11 2.9 10 5.2 9 8.2 7 10.4 4.5 11.2 2.6 13 0.5 14-1.5 16-4.1 22.4-5.9 15.6-8.1 14.4-11 14.7-14.4 14.9-16.8 14-20.2 14-22.2 13-25.9 13-27.6 12-31.5 12-35.9 12-37.4 11-38.2 10-42.9 10-48.4 10-49.2 9-55.8 9-56.6 8-56.6 7-55.5 6-64.7 6-64.2 5-123 7.1-73.5 2.9-66.5 1.7-133 1-70.5-0.7-62.5-1.4-73.8-2.6-62.4-3-119.9-8-58-5-59.7-6-60.1-7-52.6-7-53-8-47.2-8-47.2-9-46.7-10-41.4-10-36.9-10-36.2-11-34.8-12-30.5-12-28.7-13-24.7-13-21.1-13-19.2-14-16.9-15-14-15.9-10.1-15.1-7.9-16.8-4-14.8-3-19.4-0.8-11 0.3-12 1.8-11 2.7-9 3-6.6 4.7-7.4 5.3-6 6-4.9 7-4 7-2.5z"/>
<path fill="#0b1d51" d="M1555.1 785.5l91.4-0.8 91 0.6 96.9 2.2 76.8 3 90.1 5 80.9 6 84.2 8 75.4 9 67.6 10 60.1 11 48.1 11 21.8 6 19 6 16.2 6 13.6 6 11 6 8.5 6 6.1 6 4 6 2.1 7 0 7-1.4 6-2.9 7-9.8 16-22.6 30-7.9 9-6.3 6-5.5 3.8-5 2.2-25 5.3-18 2.3-27 0.7-35-1.5-46-3.8-142-13.5-85-6.9-106-6.9-99-4.6-2.2-3.1 0-1-2.2-2-1-3-2.1-2-0.9-3-2.2-2 0.1-1-2.1-2 0.1-1-2.1-2 0-1-4.1-5 0.1-1-3.1-3 0.1-1-6.1-7 0-1-4.1-4 0.1-1-5.1-5 0.1-1-7.1-7 0.1-1-24.3-24.3-1 0.1-7-7.1-1 0.1-5-5.1-1 0.1-4-4.1-1 0.1-7-6.1-1 0.1-3-3.1-1 0-2-2-1 0.1-2-2.1-1 0-2-2-1 0-5-4-1 0-2-2-1 0-1-1-1 0-2-2-3-1-2-2-1 0-1-1-3-1-2-2.1-1 0.1-1-1.1-1 0.1-1-1.1-1 0.1-1-1-1 0-1-1-1 0-3-2.1-1 0.1-5-3.1-1 0.1-1-1.1-1 0.1-1-1.1-1 0-1-1-2 0.1-5-3.1-2 0.1-3-2.1-2 0-1-1-1 0-1-1-2 0-1-1-2 0-3-2.1-2 0.1-1-1.1-2 0.1-1-1.1-2 0.1-1-1.1-2 0.1-1-1.1-3 0.1-1-1.1-2 0.1-1-1.1-3 0.1-1-1.1-3 0.1-1-1.1-3 0.1-1-1.1-3 0-1-1-3 0-1-1.1-4 0.1-1-1.1-5 0.1-1-1.1-5 0.1-1-1.1-6 0.1-1-1.1-8 0-1-1.1-15 0.1-1-1.1-16 0-1 1.1-14-0.1-1 1.1-8-0.1-1 1.1-6 0-1 1.1-4-0.1-1 1.1-4-0.1-1 1.1-4-0.1-1 1.1-3-0.1-1 1.1-3-0.1-1 1.1-2 0-1 1-2 0-1 1-3 0-1 1-2 0-3 2.1-2-0.1-1 1.1-2-0.1-3 2.1-2-0.1-1 1.1-1-0.1-1 1.1-1-0.1-5 3.1-1 0-5 3-1 0-1 1-1 0-1 1-1 0-2 2-3 1-5 4.1-1-0.1-5 4.1-1-0.1-8 7.1-1-0.1-6 6.1-1-0.1-10.3 10.4 0 1-6 6 0.1 1-7.1 8 0.1 1-4.1 5 0.1 1-2.1 2-0.9 3-2.1 2 0.1 1-1.1 1-0.9 3-2.1 2 0.1 1-2.1 3 0.1 2-3.1 5 0.1 1-1.1 1 0.1 2-2.1 3 0.1 2-2.1 3 0 2-1 1 0 2-1 1 0 3-1 1 0 2-1.1 1 0.1 3-1.1 1 0.1 3-1.1 1 0.1 4-1.1 1 0 4-1.1 1 0.1 5-1.2 1 0 7-1.2 1-0.2 5.5-94 4.9-91 6.2-73 6.1-141 13.4-47 3.8-40 1.5-16-0.5-14-1.3-12-2-22-4.9-5.6-2.7-6.4-5-14.3-16-20.9-28-9.1-15-2.5-6-1.6-6-0.2-8 2.1-7 4.9-7 6.5-6 10.6-7 11.8-6 17.1-7 17.6-6 24.1-7 28.1-7 32.6-7 31.7-6 76.3-12 90.1-11 96.3-9 101.3-7 105.5-5zM1581.9 801.5l14.6-0.6 15 0.4 15.4 1.2 14.6 2 15.4 3 15.9 4 16 5 16.1 6 16 7 14.1 7 14.4 8 14.4 9 14.5 10 13.1 10 13.1 11 13 12 12 12.3 11 12.5 19 25.1 9 14 7 12.4 7 14.1 6 14.1 5 14 4 13.6 3 12.6 3 17.5 1.5 14.8 0.5 14-0.5 14-1.3 14-2.2 0.2-1 1.1-24 0.3-1 1-26 0-1 1.1-32 0-1 1-40 0-1 1.1-65-0.1-1 1.1-109 0-1-1.1-66 0-1-1-40 0-1-1.1-31-0.1-1-1-14.1-0.5-14.9-26.9-11-25.7-5-14.8-4-14.6-4.9-27-1.6-25 1.5-24.4 2-12.6 3-12.9 4-12.8 4-10.3 6-12.6 6-10.5 7-10.4 7-9 8.5-9.5 9.4-9 9.7-8 9.8-7 11.4-7 11.5-6 11.3-5 13.8-5 14.1-4 12.5-2.7zM531.7 1008.5l8.8-0.6 9 0.4 23 3.9 122.8 33.3 45.2 10.7 46 9.7 87 15.5 95 13.8 58 7.1 62 6.6 63 5.7 64 5.1 66 4.3 69 3.7 138 5 93 1.7 95 0.4 94-1 94-2.4 91-3.6 90-5 86-6.1 85-7.6 75-8 71-9 67-9.9 63-10.8 49-9.6 46.2-10.3 53.8-13.5 86-24 19-4.1 16-1.9 12 0.3 11 2.3 10 4.6 8 6.4 6.7 8.9 4.6 10 2.8 12 0.7 14-1.4 15-4.5 24-5.2 14-7.7 14-11.3 15-13.4 14-16.6 14-20.1 14-22.1 13-25.7 13-27.5 12-31.3 12-35.8 12-37.2 11-38 10-42.7 10-48.1 10-48.9 9-49 8-55.3 8-55.1 7-53.9 6-62.2 6-61.2 5-58.3 4-72.7 4-72.6 3-61 1.7-68 1.1-67 0.3-67-0.5-67-1.4-120-4.4-68.5-3.8-58.3-4-61.2-5-62.2-6-53.9-6-55.1-7-55.3-8-49-8-48.9-9-43.5-9-43.2-10-38.5-10-37.6-11-36.2-12-31.7-12-29.9-13-25.7-13-22.1-13-20.1-14-16.6-14-14.3-15-11-15-8.2-15.5-5.1-15.5-3.5-20-1.2-11-0.1-11 1.3-11 2.1-8 2.9-7 3.6-6.1 5-6 6-5 6-3.5 7-2.7z"/>
<path fill="#0c1f55" d="M1549.9 786.5l92.6-0.9 91 0.5 92 2.1 86 3.3 88.7 5 79.7 6 83 8 74 9 66.2 10 58.5 11 46.5 11 20.9 6 18 6 15.4 6 12.7 6 10.2 6 7.9 6 5.8 6 4.3 7 2 7 0 8-1.5 7-2.6 7-9.1 17-15.7 23-6.6 8-6.2 6-5.6 4-5.5 2.3-25 5-18 2.1-29 0.8-37-1.6-46.2-3.6-139.8-12.6-85-6.6-99-6.2-99-4.6-1.2-3-2.1-2-1-3-2.2-2-0.9-3-2.1-2 0-1-4.1-5 0.1-1-2.1-2 0-1-2-2 0-1-3.1-3 0.1-1-6.1-7 0.1-1-4.1-4 0-1-5-5 0-1-7.1-7 0.1-1-24.3-24.3-1 0.1-7-7.1-1 0.1-5-5.1-1 0.1-4-4.1-1 0-7-6-1 0-3-3-1 0-2-2-1 0-2-2-1 0-2-2-1 0-5-4-1 0-2-2.1-1 0.1-1-1-1 0-2-2.1-3-0.9-2-2.1-1 0.1-1-1.1-3-0.9-2-2.1-1 0.1-1-1.1-1 0.1-1-1.1-1 0.1-1-1.1-1 0.1-1-1.1-1 0.1-3-2.1-1 0.1-5-3.1-1 0-1-1-1 0-1-1-1 0-1-1-2 0-5-3.1-2 0.1-3-2.1-2 0.1-1-1-1 0-1-1.1-2 0.1-1-1.1-2 0.1-3-2.1-2 0.1-1-1.1-2 0.1-1-1.1-2 0-1-1-2 0-1-1-3 0-1-1-2 0-1-1.1-3 0.1-1-1-3 0-1-1.1-3 0.1-1-1.1-3 0.1-1-1.1-3 0.1-1-1.1-4 0.1-1-1.1-5 0-1-1-5 0-1-1.1-6 0.1-1-1.1-8 0.1-1-1.1-15 0.1-1-1.1-16 0-1 1.1-14-0.1-1 1.1-8-0.1-1 1.1-6-0.1-1 1.1-4-0.1-1 1.1-4 0-1 1-4 0-1 1-3 0-1 1.1-3-0.1-1 1.1-2-0.1-1 1.1-2-0.1-1 1.1-3-0.1-1 1.1-2-0.1-3 2.1-2 0-1 1-2 0-3 2-2 0-1 1-1 0-1 1-1 0-5 3.1-1-0.1-5 3.1-1 0-1 1-1 0-1 1-1-0.1-2 2.1-3 1-5 4-1 0-5 4-1 0-8 7.1-1-0.1-6 6.1-1-0.1-10.4 10.4 0.1 1-6 6 0 1-7 8 0 1-4 5 0 1-2 2-0.9 3-2.1 2 0.1 1-1.1 1-0.9 3-2.1 2 0 1-2 3 0.1 2-3.1 5 0 1-1 1 0.1 2-2.1 3 0 2-2 3 0 2-1 1 0 2-1.1 1 0.1 3-1 1 0 2-1.1 1 0.1 3-1.1 1 0.1 3-1.1 1 0 4-1.1 1 0.1 4-1.1 1 0 5-1.1 1-0.1 7-1.1 1-0.2 4.4-95 4.9-89 6-253 21.5-43 1.4-17-0.6-15-1.4-32.3-6.2-6.7-3.5-6.6-5.5-12.5-15-15.1-23-7.9-16-2.2-7-0.9-6 0.6-8 2.6-7 5-7 7.7-7 10.8-7 11.9-6 17.1-7 17.6-6 24.1-7 28.3-7 32.9-7 32.1-6 77.9-12 83.3-10 85.6-8 99.9-7 103.5-5zM1582.3 802.5l15.2-0.5 15 0.3 14.5 1.2 15.5 2.2 14.6 2.8 15.8 4 16 5 16 6 16 7 14.1 7 28.8 17 27.5 20 13.2 11 13 12.1 12 12.3 11 12.4 19 25.1 9 14.1 7 12.4 12 25.9 9 27.1 4 17 2.3 13.6 1.6 15 0.5 14-0.4 14.7-1.4 14.3-1.6 0.1-1 1.1-24 0.3-1 1.1-26 0-1 1.1-32 0-1 1-40 0-1 1-65 0-1 1.1-109-0.1-1-1-66 0-1-1.1-40 0.1-1-1.1-31-0.1-1-1.1-13.4-0.4-14.6-26.2-11-25.4-5-14.5-4-14.3-5-26-1.4-13.6-0.5-13 0.4-13 1.3-13 2.2-13.3 3-12.3 4-12.5 4-10.1 6-12.4 6-10.4 7-10.3 7-8.9 8.9-9.8 9.1-8.6 9-7.4 11.3-8 9.9-6 11.5-6 11.3-5 13.8-5 14.2-4 12-2.6zM540 1015.5l16.5 0.9 22 3.8 121.4 30.3 45 10 45.6 9.1 90 15.5 99 13.7 60 6.9 60 6.1 62 5.5 65 4.9 135 7.7 139 4.7 91 1.5 91 0.2 92-1 90-2.3 88-3.4 88-4.8 85-5.9 82-7 74-7.6 69-8.3 66-9.3 64-10.4 56-10.4 55-11.6 45-10.7 92-23.2 18-3.4 14-1.4 13 0.3 11 2.2 9 3.9 8 6.1 6 7.7 4.5 9.7 2.5 11 0.6 12-1.5 15-5.2 25-4.9 13-8 14-10.7 14-13.7 14-16.9 14-18.8 13-22.3 13-25.9 13-27.6 12-31.5 12-32.8 11-37.1 11-37.9 10-42.4 10-47.9 10-48.7 9-48.6 8-55 8-54.7 7-53.5 6-61.7 6-60.5 5-57.5 4-71.3 4-128 4.7-131 1.7-131-1.4-68-2-63-2.6-123.5-7.4-116.2-10-55.9-6-56.9-7-56.8-8-50.1-8-50-9-44.4-9-44-10-39.2-10-38.3-11-33.9-11-32.6-12-30.8-13-26.5-13-22.8-13-20.7-14-17.1-14-14.8-15-11.4-15-8.2-15-3.1-8-1.9-7-4-20-1.5-12 0-12 1.6-10.3 2.4-7.7 3.6-7.1 4.5-5.9 5.5-5 6-3.7 7-2.8 8-1.8z"/>
<path fill="#0c2059" d="M1549.6 787.5l91.9-1 90 0.6 90 2 88.3 3.4 87.7 5 90.3 7 79.3 8 71.1 9 63.5 10 55.8 11 43.9 11 19.6 6 16.8 6 14.2 6 11.7 6 9.4 6 8.2 7 5.6 7 3.4 7 1.6 8-0.3 8-1.5 7-2.4 7-8.8 18-11.8 18-5 6-5.4 5-6 4-5.2 1.8-26 4.8-18 1.8-30 0.7-38-1.6-184-15.2-79-5.9-97-6-99-4.4-1.1-1 0-1-2.1-2-1.1-3-2.1-2-1-3-2.1-2 0.1-1-2.1-2 0-1-2.1-2 0.1-1-2.1-2 0.1-1-2.1-2 0.1-1-3.1-3 0-1-6.1-7 0.1-1-4.1-4 0.1-1-5.1-5 0-1-7-7 0-1-24.3-24.3-1 0-7-7-1 0-5-5-1 0-4-4-1 0-3-3-1 0-7-6.1-1 0.1-2-2-1 0-2-2-1 0-2-2-1 0-5-4.1-1 0.1-2-2.1-1 0.1-1-1.1-1 0.1-2-2.1-3-0.9-2-2.1-1 0.1-1-1.1-3-0.9-2-2.1-1 0-1-1-1 0-1-1-1 0-1-1-1 0-1-1-1 0-3-2-1 0-5-3-1 0-1-1-1 0-1-1.1-1 0.1-1-1.1-2 0.1-5-3.1-2 0.1-3-2.1-2 0.1-1-1.1-1 0.1-1-1.1-2 0.1-1-1.1-2 0.1-3-2.1-2 0-1-1-2 0-1-1-2 0-1-1.1-2 0.1-1-1.1-3 0.1-1-1.1-2 0.1-1-1.1-3 0.1-1-1.1-3 0.1-1-1.1-3 0.1-1-1.1-3 0-1-1-3 0-1-1.1-4 0.1-1-1.1-5 0.1-1-1.1-5 0.1-1-1.1-6 0.1-1-1.1-8 0-1-1.1-15 0.1-1-1.1-16 0-1 1.1-14-0.1-1 1.1-8 0-1 1-6 0-1 1.1-4-0.1-1 1.1-4-0.1-1 1.1-4-0.1-1 1.1-3-0.1-1 1.1-3-0.1-1 1.1-2 0-1 1-2 0-1 1.1-3-0.1-1 1-2 0-3 2.1-2-0.1-1 1.1-2-0.1-3 2.1-2-0.1-1 1.1-1 0-1 1-1 0-5 3-1 0-5 3.1-1-0.1-1 1.1-1-0.1-1 1.1-1-0.1-2 2.1-3 0.9-5 4.1-1 0-5 4-1 0-8 7-1 0-6 6.1-1-0.1-10.4 10.4 0.1 1-6 6 0 1-7 8 0 1-4 5 0 1-2 2-1 3-2 2 0 1-1 1-1 3-2 2 0 1-2 3 0 2-3 5 0 1-1 1 0 2-2 3 0 2-2.1 3 0.1 2-1.1 1 0.1 2-1.1 1 0.1 3-1.1 1 0.1 2-1.1 1 0.1 3-1.1 1 0 3-1.1 1 0.1 4-1.1 1 0 4-1 1 0 5-1.1 1-0.1 7-1.2 1-0.1 3.4-86 4.2-89 5.7-254 20.5-25 1.1-21 0.2-18-0.7-16-1.7-30-5.7-7-3.9-6.8-6.1-5.8-7-5.5-8-11.3-20-5.6-15-1.4-7-0.3-6 1.3-8 3.8-8 5.6-7 8.2-7 11.2-7 12.1-6 17.3-7 17.7-6 24.3-7 24.2-6 32.6-7 32-6 70.7-11 82-10 84.5-8 98.7-7 102.4-5zM1584 803.5l14.5-0.5 15 0.4 14 1.2 16 2.3 29.2 6.6 16 5 16.1 6 16 7 14 7 16 9 14.3 9 27.4 20 13 11 13 12.2 22 23.7 10 12.5 9 12.6 9 14.1 7 12.5 6 12.1 6 14.1 5 14 4 13.7 3.9 17.5 2.1 13.3 1.4 14.7 0.4 14-0.5 14-1.4 13-0.9 0.1-1 1.1-24 0.3-1 1.1-26 0-1 1.1-32-0.1-1 1.1-40 0-1 1-65 0-1 1-109 0-1-1-66 0-1-1.1-40 0-1-1-31-0.1-1-1.1-12.7-0.4-14.3-25.5-6-12.9-6-14.9-5-15-4-14.7-4.7-26-1.1-13-0.4-13 0.5-12 1.4-13 2.3-13.2 3-11.9 8-22.1 5-10.4 6-10.5 7-10.4 8-10.2 8.5-9.3 9.5-9 9.9-8 10-7 9.9-6 11.5-6 11.7-5.1 13.5-4.9 14.2-4 12.3-2.6 14-2.2zM533.1 1023.5l9.4-0.8 10 0.2 12 1.2 15 2.5 141 32.2 50 10.1 52 9.4 88 13.6 95 12.1 118 11.9 125 9.5 131 6.9 137 4.2 88 1.3 89 0 89-1.1 88-2.3 86-3.3 84-4.5 83-5.7 80-6.7 71-7.1 67-7.8 65-8.7 64-9.9 57-10 54-10.7 141-32.2 19-3.4 16-1.6 12 0.1 11 1.8 9 3.3 8 5.3 6 6.8 4.4 8.4 2.6 10 0.8 12-1.7 16-5.5 25-4.8 12-6.8 12-10.6 14-13.7 14-16.9 14-18.9 13-22.4 13-23.9 12-27.5 12-31.4 12-32.6 11-36.9 11-37.7 10-42.3 10-47.6 10-48.5 9-48.4 8-54.6 8-54.5 7-53 6-61.3 6-59.9 5-56.8 4-70 4-125.6 4.8-129 1.8-128-1.1-66-1.8-68.9-2.7-120.5-7-64.3-5-54.6-5-106.7-12-51.6-7-52.2-8-46.3-8-46.6-9-45.9-10-40.9-10-36.4-10-35.7-11-34.3-12-30-12-26.3-12-24.5-13-21-13-19-14-15.5-14-13.1-15-9.7-15-3.9-8-2.9-8-6.3-30-0.9-10 0.4-10 1.4-8 2.2-6.4 3-5.8 4.5-5.8 4.5-4 6-3.6 7-2.7z"/>
<path fill="#0d225d" d="M1554 788.5l95.5-0.9 95 0.7 87.4 2.2 94.3 4 81.7 5 85.8 7 76.1 8 68.3 9 60.9 10 53.3 11 24 6 20.9 6 18 6 15.3 6 12.8 6 12.1 7 8 6 7 7 4.8 7 2.8 7 1.3 8-0.4 9-1.5 7-2.5 8-7.4 16-9.1 14-8.9 9-5 3.2-5 1.9-27 4.6-19 1.8-30 0.5-40-1.6-262-20-97-5.6-91-3.9 0-0.9-2.2-2-1-3-2.1-2-1-3-2.1-2 0-1-2.1-2 0.1-1-2.1-2 0-1-2.1-2 0.1-1-2.1-2 0.1-1-3.1-3 0-1-6.1-7 0.1-1-4.1-4 0.1-1-5.1-5 0.1-1-7.1-7 0-1-24.3-24.3-1 0-7-7-1 0-5-5-1 0-4-4.1-1 0.1-3-3.1-1 0.1-7-6.1-1 0.1-2-2.1-1 0.1-2-2.1-1 0.1-5-4.1-1 0.1-2-2.1-1 0.1-2-2.1-1 0-1-1-1 0.1-2-2.1-3-1-2-2-1 0-1-1-3-1-2-2-1 0-1-1-1 0-1-1-1 0-1-1-1 0-1-1-5-2-5-3.1-1 0.1-1-1.1-1 0.1-1-1.1-1 0.1-1-1.1-2 0.1-5-3.1-2 0.1-3-2.1-2 0-1-1-1 0-1-1-2 0-1-1-2 0-3-2.1-2 0.1-1-1.1-2 0.1-1-1.1-2 0.1-1-1.1-2 0.1-1-1.1-3 0.1-1-1.1-2 0-1-1-3 0-1-1-3 0-1-1-3 0-1-1-3 0-1-1.1-3 0.1-1-1.1-4 0.1-1-1.1-5 0.1-1-1.1-5 0-1-1-6 0-1-1.1-8 0.1-1-1.1-15 0.1-1-1.1-16 0-1 1-14 0-1 1.1-8-0.1-1 1.1-6-0.1-1 1.1-4 0-1 1-4 0-1 1-4 0-1 1.1-3-0.1-1 1.1-3-0.1-1 1.1-2-0.1-1 1.1-2 0-1 1-3-0.1-1 1.1-2-0.1-3 2.1-2 0-1 1-2 0-3 2.1-2-0.1-1 1.1-1-0.1-1 1.1-1-0.1-5 3.1-5 2-1 1-1 0-1 1-1 0-1 1-1 0-2 2.1-3 0.9-5 4.1-1-0.1-5 4.1-1-0.1-8 7.1-1 0-6 6-1 0-10.4 10.4 0.1 1-6.1 6 0.1 1-7.1 8 0.1 1-4 5 0 1-2 2-1 3-2 2-2 5-2 2 0 1-2 3 0 2-3 5 0 1-1 1 0 2-2 3 0 2-2.1 3 0.1 2-1.1 1 0.1 2-1.1 1 0.1 3-1.1 1 0 2-1 1 0 3-1 1 0 3-1.1 1 0.1 4-1.1 1 0 4-1.1 1 0 5-1.1 1-0.1 7-1.1 1-0.1 2.2-85 4.1-82 5.1-211 16.6-44 2.9-26 1-22 0.1-19-0.8-17-1.9-24-4.2-3.5-1.1-7.5-4.6-7-7-9.6-14.4-8.3-18-3.7-14-0.5-7 0.5-6 2.3-8 4.6-8 7.4-8 9.2-7 12.1-7 12.8-6 18.1-7 18.5-6 25.2-7 25.2-6 61.4-12 72.5-11 75.6-9 86.4-8 100.3-6.8 90-4.3zM1587.1 804.5l14.4-0.3 15 0.6 15 1.4 14.9 2.3 29.4 7 15.5 5 15.6 6 15.7 7 13.8 7 14.2 8 15.8 10 27.1 20 14 12 12 11.3 21 22.7 10 12.6 9 12.6 8 12.5 8 14.2 6 12.2 6 14.3 5 14.4 4 14.2 3 13.5 2.3 14.5 1.4 14 0.4 14-0.4 14-1.5 14-1.2 1.1-24 0.4-1 1.1-26 0-1 1-32 0-1 1.1-40-0.1-1 1.1-65-0.1-1 1.1-109 0-1-1.1-66 0.1-1-1.1-40 0-1-1.1-31-0.1-1-1-12-0.4-14-25-6-12.8-6-14.8-5-14.7-4-14.6-5-27.1-1.4-25 0.4-12.3 1.3-12.7 1.9-11 3.1-13 3.7-11.6 5-12.5 6-12.1 6-10.1 7-10.1 8-9.9 9-9.5 8.9-8.2 10.1-8 10.2-7 12-7 11.8-5.8 12.7-5.2 12-4 25.6-6 13.7-1.9zM535.5 1030.5l9-0.8 10 0 24 2.7 30 5.7 116 25 82.9 15.4 51.1 8.3 52 7.5 110 13.5 118 11.3 124 8.9 128 6.4 134 3.9 86 1.1 86 0 86-1.1 85-2.1 84-3.2 82-4.3 83-5.4 77-6.2 69-6.6 67-7.5 65-8.3 64-9.4 57-9.4 55.7-10.4 144.3-30.7 21-3.4 16-1.6 13 0 11 1.5 9 3 8 4.8 6 6.3 4.4 8.1 2.5 9 0.7 11-1.6 15-6.3 26-4.4 11-6.3 11-10.7 14-13.8 14-15.9 13-19 13-22.4 13-24.1 12-27.6 12-31.6 12-32.9 11-33.5 10-37.6 10-42.1 10-47.4 10-48.2 9-48.2 8-54.4 8-54.1 7-52.8 6-60.8 6-59.4 5-56.2 4-69 4-123.3 4.8-126 2-126-0.9-127.7-3.9-61.7-3-65.1-4-111.5-9-59.2-6-51.7-6-53.1-7-53.5-8-47.5-8-47.6-9-42.4-9-42.1-10-37.6-10-36.7-11-32.5-11-31.2-12-27.4-12-25.6-13-21.9-13-19.8-14-16.2-14-12.9-14-6-8-5-8-4-8-2.7-7-6.9-29-1.2-10 0-9 1-7 2.1-7 3-6 3.8-5 4.8-4.3 6-3.6 7-2.6z"/>
<path fill="#0e2461" d="M1563.4 789.5l93.1-0.8 93 0.9 96 2.6 90 4.1 80.5 5.2 82 7 73.1 8 72.1 10 57.2 10 49.9 11 22.3 6 19.3 6 16.6 6 14.1 6 11.7 6 11 7 8.3 7 6.1 7 4.2 7 2.7 8 1 9-0.7 9-3.7 14-6.4 14-7.4 11-7.9 7.3-4.6 2.7-4.4 1.5-28 4.4-21 1.7-31 0.4-40-1.6-259-18.8-90-5.1-90-3.8-2.1-1.7-1.1-3-2.1-2-1-3-2.1-2 0-1-4.1-5 0.1-1-2.1-2 0-1-2-2 0-1-3.1-3 0.1-1-6.1-7 0-1-4.1-4 0.1-1-5.1-5 0.1-1-7.1-7 0.1-1-24.4-24.4-1 0.1-7-7.1-1 0.1-5-5.1-1 0.1-4-4.1-1 0.1-3-3.1-1 0.1-7-6.1-1 0.1-2-2.1-1 0.1-2-2.1-1 0.1-5-4.1-1 0-2-2-1 0-2-2-1 0-1-1-1 0-2-2-3-1-2-2-1 0-1-1-3-1-2-2.1-1 0.1-1-1.1-1 0.1-1-1.1-1 0.1-1-1.1-1 0.1-1-1.1-5-1.9-7-4.1-1 0-1-1-1 0-1-1-2 0-5-3-2 0-3-2.1-2 0.1-1-1-1 0-1-1.1-2 0.1-1-1.1-2 0.1-3-2.1-2 0.1-1-1.1-2 0-1-1-2 0-1-1-2 0-1-1-3 0-1-1-2 0-1-1.1-3 0.1-1-1.1-3 0.1-1-1.1-3 0.1-1-1.1-3 0.1-1-1.1-3 0-1-1-4 0-1-1.1-5 0.1-1-1.1-5 0.1-1-1.1-6 0.1-1-1.1-8 0-1-1-15 0-1-1.1-16 0-1 1.1-14-0.1-1 1.1-8 0-1 1-6 0-1 1-4 0-1 1.1-4-0.1-1 1.1-4-0.1-1 1.1-3 0-1 1-3 0-1 1-2 0-1 1.1-2-0.1-1 1.1-3-0.1-1 1.1-2-0.1-3 2.1-2 0-1 1-2 0-3 2-2 0-1 1-1 0-7 4.1-5 2-1 1-1 0-1 1-1 0-1 1-1 0-2 2-3 1-5 4-1 0-5 4.1-1-0.1-8 7.1-1-0.1-6 6.1-1 0-10.4 10.4 0 1-6 6 0.1 1-7.1 8 0.1 1-4.1 5 0.1 1-2.1 2-0.9 3-2 2-2 5-2.1 2 0.1 1-2.1 3 0.1 2-4.1 7 0.1 2-2.1 3 0.1 2-2.1 3 0.1 2-1.1 1 0 2-1 1 0 3-1 1 0 2-1.1 1 0.1 3-1.1 1 0.1 3-1.1 1 0 4-1 1 0 4-1.1 1 0 5-1.1 1-0.2 7-1.1 1 0 1.1-77 3.6-81 4.7-209 15.6-47.9 3-28.1 1-23-0.1-19-1-18-2.1-20-3.3-4.6-1.5-7.6-5-7.2-8-8.2-14-5.7-16-1.4-7-0.6-7 0.3-6 1.2-6 3.2-8 5.5-8 8.3-8 9.8-7 12.6-7 13.2-6 18.6-7 18.9-6 21.8-6 25.1-6 61.4-12 73.1-11 76.7-9 88.7-8 90-6 93.9-4.3zM1593.4 805.5l15.1 0.1 14.6 0.9 16.2 2 14.2 2.6 14.5 3.4 16.8 5 28.6 11 28.1 14 15.2 9 13.7 9 15.1 11 12.5 10 24.5 22.6 21 23.3 18 24.5 8 13 7 12.8 11 25 5 14.8 4 14.7 3 14.4 2 13.8 1.2 14.1 0.2 15-0.8 15-1.6 10-24 0.5-1 1-26 0.1-1 1-32 0-1 1.1-40-0.1-1 1.1-65-0.1-1 1.1-109 0-1-1.1-66 0-1-1-40 0-1-1.1-31-0.1-1-1.1-11.1-0.3-14.9-26.6-6-13-6-15.1-8-26.2-3-13.8-2.2-14.3-1.2-13-0.3-13 0.7-13.6 1.5-12.4 2.5-13.2 3-11.2 4-11.7 5-11.8 6-11.6 6-9.8 7-9.8 9-10.7 9-9.2 9.1-8 10.5-8 10.7-7 10.7-6 12.7-6 12.9-5 12.8-4 12.6-3.1 14-2.5 13-1.5zM546.1 1036.5l20.4 0.4 28 3.8 147 29.1 50 8.9 51 8.3 91 12.8 95 11 119 11 123 8.5 128 6.1 133 3.7 83 1 84 0 84-1.1 83-2.1 82-3 81-4.1 78-4.9 78-6.1 70-6.5 66-7 64-7.9 61-8.5 57-8.9 56-9.8 150-29.7 22-3.4 17-1.6 13-0.1 11 1.3 9 2.6 8 4.3 6 5.7 4.4 7.2 2.7 9 0.8 10-1.9 16-6.9 26-4.2 10-6.6 11-11.2 14-13.3 13-16.3 13-18 12-22.8 13-24.4 12-28.1 12-29.3 11-33.1 11-33.8 10-37.8 10-42.4 10-42.8 9-48 9-48 8-54.1 8-53.9 7-52.5 6-60.4 6-59 5-55.7 4-68.1 4-124.3 4.9-126 2.1-125-0.9-125-3.7-119.6-6.4-114.7-9-60.4-6-52.5-6-53.9-7-47.7-7-48.7-8-48.6-9-43.3-9-42.9-10-38.3-10-37.4-11-33.1-11-31.7-12-27.8-12-26.1-13-22.2-13-20.1-14-16.5-14-13-14-10.4-15-6.4-14-7.7-30.4-1.1-10.6 0.5-9 1.5-7 2.5-6 3.6-5.5 4.7-4.5 5.3-3.4 7-2.9 7-1.7z"/>
<path fill="#0e2565" d="M1579.3 790.5l95.2-0.5 94 1.2 93 2.9 87.9 4.4 85.3 6 75.7 7 68.4 8 67.9 10 53.7 10 46.7 11 20.8 6 18 6 15.4 6 12.9 6 10.8 6 10.2 7 7.7 7 5.7 7 4.4 8 2.5 8 0.9 9-0.8 10-3.4 13-5.6 12-6.7 9-7.4 6-7 2.8-21 3.3-15 1.7-17 1-31 0.2-40-1.6-256-17.7-84-4.6-89-3.6-1-0.5-1.1-3-2.1-2-1-3-4.2-5 0-1-2-2 0-1-2.1-2 0.1-1-2.1-2 0.1-1-3.2-3 0.1-1-6.1-7 0.1-1-4.1-4 0-1-5.1-5 0.1-1-7.1-7 0.1-1-24.4-24.4-1 0.1-7-7.1-1 0.1-5-5.1-1 0.1-4-4.1-1 0.1-3-3.1-1 0.1-7-6.1-1 0-2-2-1 0-2-2-1 0-5-4-1 0-2-2-1 0-2-2-1 0-1-1-1 0-2-2.1-3-0.9-2-2.1-1 0.1-1-1.1-3-0.9-2-2.1-1 0.1-1-1.1-1 0.1-1-1.1-1 0.1-1-1.1-1 0-1-1-5-2-7-4-1 0-1-1-1 0-1-1.1-2 0.1-5-3.1-2 0.1-3-2.1-2 0.1-1-1.1-1 0.1-1-1.1-2 0-1-1-2 0-3-2-2 0-1-1-2 0-1-1-2 0-1-1.1-2 0.1-1-1.1-3 0.1-1-1.1-2 0.1-1-1.1-3 0.1-1-1.1-3 0-1-1-3 0-1-1-3 0-1-1-3 0-1-1.1-4 0.1-1-1.1-5 0.1-1-1.1-5 0-1-1-6 0-1-1.1-8 0.1-1-1.1-15 0-1-1-16 0-1 1-14 0-1 1.1-8-0.1-1 1.1-6-0.1-1 1.1-4 0-1 1-4 0-1 1-4 0-1 1.1-3-0.1-1 1.1-3-0.1-1 1.1-2 0-1 1-2 0-1 1-3 0-1 1-2 0-3 2.1-2-0.1-1 1.1-2-0.1-3 2.1-2-0.1-1 1.1-1 0-7 4-5 2-1 1.1-1-0.1-1 1.1-1-0.1-1 1.1-1-0.1-2 2.1-3 0.9-5 4.1-1 0-5 4-1 0-8 7.1-1-0.1-6 6.1-1-0.1-10.4 10.5 0 1-6 6 0 1-7 8 0 1-4 5 0.1 1-2.1 2-0.9 3-2.1 2-1.9 5-2.1 2 0.1 1-2.1 3 0.1 2-4.1 7 0.1 2-2.1 3 0.1 2-2.1 3 0 2-1 1 0 2-1 1 0 3-1 1 0 2-1.1 1 0.1 3-1.1 1 0 3-1 1 0 4-1.1 1 0 4-1.1 1 0 5-1.1 1-0.2 7-1 0.9-75 3.4-72 4-212 15-56 3.2-30 0.6-25-0.6-19-1.6-26.5-3.9-4.5-1.4-4-2.1-7.5-6.5-6.9-10-5.2-12-2.9-12-0.5-12 1.8-10 4.6-10 6-8 7.5-7 9.8-7 10.4-6 14.9-7 15.4-6 18-6 20.8-6 51.5-12 61.2-11 71.3-10 72.5-8 81.6-7 95.5-6 94.2-3.9zM1580.9 807.5l15.6-0.7 15 0.2 16 1.2 15 2.1 16.3 3.2 15.5 4 29 10 16.1 7 14.1 7 29 17 14.5 10 14.5 11 13.1 11 12.9 11.9 22 23.5 10 12.4 9 12.5 8 12.4 8 14.1 6 12.3 6 14.3 5 14.6 4 14.5 5 27.2 1.3 14.3 0.4 14-0.7 15-1.4 13-23.6 0.4-1 1.1-26 0-1 1.1-32 0-1 1-40 0-1 1.1-65-0.1-1 1.1-109 0-1-1.1-66 0-1-1-40 0-1-1.1-31-0.2-1-1-10.2-0.3-14.8-26.3-11-25.2-5-14.5-4-14-5-25.8-1.3-12.2-0.5-13 1.4-24 4.4-23.2 3.9-12.8 4.1-10.7 5-10.8 6-10.8 7-10.6 7-9.2 8-9 9.1-8.9 9.9-8.4 10.5-7.6 20.6-12 10.9-5 13-5 13-4 12.5-3 13.5-2.4zM545.5 1043.5l9-0.7 11 0.2 27 2.7 33 5.5 124 23.3 84 13.8 104 14.3 110 12.3 116 10.1 122 8 126 5.7 128 3.2 81 0.9 82-0.1 81-1 82-2 79-2.9 80-3.9 78-4.9 76-5.7 68-6.1 63-6.5 64-7.5 61-8.1 57-8.4 55.4-9.2 153.6-28.5 23-3.4 18-1.6 14-0.1 11 1.2 9 2.4 8 4.1 6 5.3 4.2 6.6 2.6 8 0.8 10-1.9 15-7.8 27-3.9 9-6.1 10-10.5 13-13.5 13-16.5 13-18.2 12-21.3 12-24.6 12-28.2 12-29.5 11-33.3 11-34.1 10-38 10-42.8 10-43.1 9-48.5 9-48.5 8-47.5 7-53.6 7-52.2 6-60.1 6-58.6 5-122.8 8-122.5 4.9-122 2.2-124-0.7-122.3-3.4-117.7-6-118.1-9-61.7-6-53.3-6-54.6-7-48.4-7-49.1-8-44-8-44.2-9-39.7-9-39.4-10-38.5-11-34-11-30.2-11-28.9-12-25.1-12-23.5-13-19.9-13-16.5-13-14.4-14-11.6-15-7.3-14-8.7-30-1.4-9-0.3-9 1-7 1.9-6 2.9-5.2 4-4.7 5-3.8 6-2.9 7-2.2z"/>
<path fill="#0f276a" d="M1607.4 791.5l92.1 0 89 1.6 91 3.2 83 4.5 77 5.8 81 7.9 71.3 9 62.4 10 49.5 10 42.8 11 19 6 16.3 6 14 6 11.7 6 9.8 6 9.1 7 7 7 5.8 8 3.8 8 2.1 8 0.7 9-1 10-3.1 11-5 10-5.8 7-7.4 5.3-6 2-24 3.4-32 2.3-31 0-40-1.6-253-16.6-84-4.3-82-3.3-1.1-1.2 0-1-2.1-2-1-3-2.1-2 0-1-2.1-2 0.1-1-2.1-2 0-1-2-2 0-1-2.1-2 0.1-1-3.1-3 0-1-6.1-7 0.1-1-4.1-4 0-1-5-5 0-1-7.1-7 0.1-1-24.4-24.4-1 0.1-7-7.1-1 0.1-5-5.1-1 0-4-4-1 0-3-3-1 0-7-6-1 0-2-2-1 0-2-2-1 0-5-4-1 0-2-2.1-1 0.1-2-2.1-1 0.1-1-1.1-1 0.1-2-2.1-3-0.9-2-2.1-1 0-1-1-3-0.9-2-2.1-1 0-1-1-1 0-1-1-1 0-1-1-1 0-1-1-5-2-7-4.1-1 0.1-1-1.1-1 0.1-1-1.1-2 0.1-5-3.1-2 0-3-2-2 0-1-1-1 0-1-1-2 0-1-1-2 0-3-2.1-2 0.1-1-1.1-2 0.1-1-1.1-2 0.1-1-1.1-2 0-1-1-3 0-1-1-2 0-1-1-3 0-1-1-3 0-1-1.1-3 0.1-1-1.1-3 0.1-1-1.1-3 0-1-1-4 0-1-1-5 0-1-1.1-5 0.1-1-1.1-6 0-1-1-8 0-1-1-15 0-1-1.1-16 0-1 1.1-14 0-1 1-8 0-1 1-6 0-1 1-4 0-1 1.1-4-0.1-1 1.1-4 0-1 1-3 0-1 1-3 0-1 1-2 0-1 1.1-2-0.1-1 1.1-3-0.1-1 1.1-2-0.1-3 2.1-2 0-1 1-2 0-3 2.1-2-0.1-1 1-1 0-7 4.1-5 2-1 1-1 0-1 1-1 0-1 1-1 0-2 2.1-3 0.9-5 4.1-1 0-5 4-1 0-8 7-1 0-6 6.1-1-0.1-10.5 10.5 0.1 1-6 6 0 1-7 8 0 1-4 5 0 1-2 2-0.9 3-2.1 2-1.9 5-2.1 2 0 1-2 3 0.1 2-4.1 7 0 2-2 3 0 2-2 3 0 2-1.1 1 0.1 2-1.1 1 0.1 3-1.1 1 0.1 2-1.1 1 0 3-1 1 0 3-1.1 1 0.1 4-1.1 1 0 4-1.1 1 0 5-1.1 1-0.2 6.6-141 6.9-210 14.1-56 3-31 0.6-25-0.6-19.9-1.6-26.1-3.6-4.6-1.4-3.9-2-7.5-6.5-6.2-9.5-4.1-11-2-12 0.4-11 2.6-10 5.3-10 6.7-8 7.8-7 10.2-7 12.7-7 15.6-7 15.9-6 18.6-6 21.4-6 24.7-6 28.3-6 63.2-11 74.3-10 76.6-8 88.8-7 88.6-5 89.6-3.3zM1587 808.5l14.5-0.4 15 0.5 16 1.6 15 2.3 29 7 15.3 5 15.5 6 29.2 14 15.8 9 14 9 27.2 20.1 14 11.9 12 11.3 21 22.7 18 23.7 15 24.8 6 12.1 6 14.2 5 14.5 4 14.3 3 13.8 2.1 13.6 1.4 15 0.4 14-0.6 14-1.6 14-22.7 0.4-1 1.1-26 0-1 1.1-32 0-1 1-40 0-1 1-65 0-1 1-109 0-1-1-66 0-1-1.1-40 0-1-1-31-0.2-1-1.1-9.3-0.2-14.7-26.1-6-12.9-6-14.9-8-25.7-3-13.4-2.3-14-1.2-12-0.4-13 0.4-13 1.3-12 2.2-12.4 3-12 8-22 6-12.1 6-10.2 7-10.1 8-9.9 8-8.5 9.5-8.8 10-8 10.2-7 10.3-6.1 12-6.1 12-5 13-4.5 12-3.3 14-3zM554.4 1049.5l11.1-0.4 12 0.5 32 3.8 162 28 106 15.9 87 10.9 92 9.7 116 9.7 120 7.6 125 5.4 126 3.1 81 0.8 80-0.1 80-1 79-1.9 77-2.8 78-3.7 77-4.6 73-5.3 67-5.8 62-6.1 62-6.9 60-7.5 57-8 57-8.9 158-27.5 25-3.5 19-1.6 14 0 11 1.1 9 2.2 8 3.7 6 4.8 4.4 6.4 2.7 8 0.7 9-0.6 7-1.6 8-8.3 27-4.2 9-5.8 9-11 13-12.8 12-17 13-18.7 12-21.8 12-25.3 12-26.5 11-30 11-33.9 11-34.7 10-38.8 10-39 9-43.5 9-48.9 9-49 8-48.2 7-54.4 7-53.1 6-108.8 10-121.8 8-120.1 4.9-122 2.2-123-0.5-128-3.5-117.9-6.1-117.6-9-106.1-11-55.5-7-48.9-7-49.7-8-44.4-8-44.7-9-39.9-9-39.7-10-35.5-10-34.6-11-30.7-11-29.4-12-25.6-12-23.8-13-20.2-13-16.7-13-14.4-14-10.9-14-6.9-13-9.2-30-1.6-10 0-8 1.1-6 2.2-6 3.2-5 4.4-4.3 5-3.2 6-2.5 7-1.8z"/>
<path fill="#10296e" d="M1563.5 793.5l24 0-14 0-1 1-8 0-1 1.1-6 0-1 1-4 0-1 1-4 0-1 1-4 0-1 1.1-3-0.1-1 1.1-3 0-1 1-2 0-1 1-2 0-1 1-3 0-1 1-2 0-3 2.1-2-0.1-1 1.1-2 0-3 2-2 0-1 1-1 0-7 4.1-5 2-1 1-1 0-1 1-1 0-1 1-1 0-2 2-3 1-5 4.1-1-0.1-5 4.1-1-0.1-8 7.1-1 0-6 6-1 0-10.5 10.5 0.1 1-6.1 6 0.1 1-7 8 0 1-4 5 0 1-2 2-1 3-2 2-2 5-2 2 0 1-2 3 0 2-4 7 0 2-2 3 0 2-2.1 3 0.1 2-1.1 1 0.1 2-1.1 1 0.1 3-1.1 1 0 2-1 1 0 3-1.1 1 0.1 3-1.1 1 0 4-1 1-0.1 4-1 1-0.1 5-1 1-0.2 5.3-144 6.9-225 14.2-41 1.6-33 0.2-32-2-26-3.4-5-1.5-7.1-4.3-5.6-6-4.4-8-2.8-9-1.2-9 0.3-8 1.6-8 3-8 4.2-7 5.7-7 7.3-6.9 8-5.9 10-6.2 11.7-6 27.1-11 32.1-10 40.6-10 45.5-9 56.2-9 62.1-8 67.9-7 74.5-6 73.3-4.5 82-3.5zM1605.5 793.5l0-0.6 68-0.2 102 1.5 93 3.1 85 4.6 82 6.1 75.7 7.5 70.9 9 61.8 10 48.8 10 42.2 11 18.8 6 16.1 6 13.8 6 13.5 7 9.4 6 9 7 6.9 7 5.9 8 3.9 8 2.5 9 0.8 9-0.9 9-2.8 10-4.1 8-6.2 6.9-6.4 4.1-5.6 1.8-25 3.3-34 2.1-31-0.1-40-1.6-244-15.3-82-4.1-83-3.1 0-1-2.1-2-1.1-3-2.1-2 0.1-1-2.1-2 0-1-2.1-2 0.1-1-2.1-2 0-1-2-2 0-1-3.1-3 0.1-1-6.1-7 0-1-4.1-4 0.1-1-5.1-5 0-1-7-7 0-1-24.4-24.4-1 0-7-7-1 0-5-5-1 0-4-4-1 0-3-3-1 0-7-6.1-1 0.1-2-2.1-1 0.1-2-2.1-1 0.1-5-4.1-1 0.1-2-2.1-1 0.1-2-2.1-3-0.9-2-2.1-3-1-2-2-5-2-2-2-1 0-1-1-1 0-1-1-1 0-1-1-1 0-1-1-5-2-7-4.1-1 0-1-1-1 0-1-1-2 0-5-3-2 0-3-2-2 0-1-1-1 0-1-1.1-2 0.1-1-1.1-2 0.1-3-2.1-2 0-1-1-2 0-1-1-2 0-1-1-2 0-1-1.1-3 0.1-1-1-2 0-1-1.1-3 0.1-1-1.1-3 0.1-1-1.1-3 0-1-1-3 0-1-1-3 0-1-1.1-4 0.1-1-1.1-5 0.1-1-1.1-5 0-1-1-6 0-1-1-8 0-1-1.1zM1580.2 810.5l14.3-0.8 15 0 15 1 15 1.9 15.9 2.9 16.1 4 16 4.9 13.8 5.1 16.2 6.9 14.4 7.1 14.6 8.1 16 9.9 28 20.2 13 10.8 13 11.9 22 23.2 10 12.3 9 12.4 15 24.5 6 12 6 14.1 5 14.3 4 14.2 3 13.6 2.4 15.5 1.3 14 0.3 14-0.6 14-1.6 14-21.8 0.4-1 1-26 0.1-1 1-32 0-1 1.1-40 0-1 1-65 0-1 1-109 0-1-1-66 0-1-1.1-40 0-1-1.1-31-0.1-1-1.1-8.3-0.2-14.7-26.1-11-25-5-14.3-3.9-13.6-5.2-26-1.3-12-0.6-13 1.5-24 4.5-23.2 4-12.8 3.9-10 5.1-10.8 6-10.7 7-10.5 7-9.1 8-8.9 9-8.8 9.8-8.2 9.7-7 20.5-12 11-5.1 13-5 12.6-3.9 12.4-3 13-2.4zM563.9 1055.5l23.6 0.5 32 3.7 163 26.6 105 14.9 88 10.6 91 9.1 114 9.3 119 7.2 124 5.2 124 2.9 78 0.8 78-0.1 78-1 78-1.8 77-2.7 76-3.5 74-4.3 72-5 127-11.2 62-6.6 60-7.2 112-15.7 163-26.7 25-3.3 20-1.6 14-0.2 12 1 9.4 2.1 7.6 3.2 6.5 4.8 4.5 6 2.6 7 0.8 9-0.6 7-1.7 8-9.1 27-3.8 8-6 9-10.4 12-13.1 12-15.9 12-19 12-22.2 12-25.7 12-26.9 11-30.5 11-31.2 10-34.9 10-39.1 10-39.3 9-44 9-43.6 8-48.8 8-48 7-54.2 7-53 6-108.3 10-121.1 8-118 4.9-121 2.3-122-0.5-119-3-119-5.9-119.3-8.8-108.4-11-99.2-13-51.1-8-45.4-8-45.7-9-40.7-9-40.5-10-36.1-10-35.3-11-31.2-11-29.9-12-26-12-22.5-12-20.7-13-17.1-13-13.8-13-10.7-13-7.2-13-10-30-1.7-10 0.1-8 1.1-6 2.3-5.4 3.3-4.6 4.7-4.1 5.1-2.9 6.9-2.5 8-1.6z"/>
<path fill="#102a72" d="M1621.5 794.5l83-0.1 92 1.8 84.7 3.3 85.3 5 75.4 6 76.5 8 60.2 8 59.8 10 47.3 10 40.8 11 18.2 6 15.6 6 13.4 6 12.8 6.8 10.9 7.2 8.6 7 6.6 7 5.7 8 3.9 8 2.4 9 0.7 9-0.8 8-2.7 9-4.2 7-5.1 5.1-6.9 3.9-4.1 1.2-29 3.5-33 1.7-31-0.2-40-1.5-240-14.3-80-3.8-78-2.9-2.1-1.7-1-3-2.1-2 0-1-2.1-2 0-1-2-2 0-1-2.1-2 0.1-1-2.1-2 0-1-3.1-3 0.1-1-6.1-7 0-1-9.1-10 0.1-1-7.1-7 0-1-24.4-24.4-1 0-7-7-1 0-5-5-1 0-4-4.1-1 0.1-3-3.1-1 0.1-7-6.1-1 0.1-2-2.1-1 0.1-2-2.1-1 0.1-5-4.1-1 0-2-2-1 0-2-2-3-1-2-2-3-1-2-2-5-2-2-2.1-1 0.1-1-1.1-1 0.1-1-1.1-1 0.1-1-1.1-1 0.1-1-1.1-5-2-7-4-1 0-1-1-1 0-1-1-2 0-5-3.1-2 0.1-3-2.1-2 0.1-1-1.1-1 0-1-1-2 0-1-1-2 0-3-2-2 0-1-1-2 0-1-1.1-2 0.1-1-1.1-2 0.1-1-1.1-3 0.1-1-1.1-2 0-1-1-3 0-1-1-3 0-1-1-3 0-1-1-3 0-1-1.1-3 0-1-1-4 0-1-1-5 0-1-1-5 0-1-1.1-6 0-1-1zM1539.5 795.5l24-0.5 0 0.5-6 0-1 1-4 0-1 1.1-4 0-1 1-4 0-1 1-3 0-1 1-3 0-1 1.1-2-0.1-1 1.1-2 0-1 1-3 0-1 1-2 0-3 2-2 0-1 1-2 0-3 2.1-2-0.1-1 1.1-1 0-7 4-5 2-1 1.1-1-0.1-1 1.1-1-0.1-1 1.1-1-0.1-2 2.1-3 1-5 4-1 0-5 4-1 0-8 7.1-1-0.1-6 6.1-1 0-10.5 10.5 0 1-6 6 0.1 1-7.1 8 0.1 1-4 5 0 1-2 2-1 3-2 2-2 5-2 2 0 1-2 3 0 2-4 7 0 2-2.1 3 0.1 2-2.1 3 0.1 2-1.1 1 0 2-1 1 0 3-1 1 0 2-1.1 1 0.1 3-1.1 1 0 3-1 1 0 4-1.1 1 0 4-1.1 1 0 5-1.1 1-0.1 4-137 6.3-220 13.2-41 1.6-33 0.3-33-1.7-29-3.5-4-1.1-6-3.1-6-5.6-4-6.4-2.8-8-1.2-8 0.3-8 1.5-8 3.1-8 4-7 5.5-7 7.2-7 7.7-6 9.2-6 11.1-6 25.6-11 30.2-10 38.4-10 43.1-9 53.1-9 58.6-8 63.7-7 68.8-6 74.9-5 76-3.7zM1588.4 811.5l14.1-0.3 15 0.5 15 1.4 15.4 2.4 28.9 7 15.2 5 15.4 6 29.1 14 14 8 15.7 10 14.2 10 14.1 11 14 12 12 11.3 20 21.7 18 23.8 8 12.7 7 12.5 6 12.5 5 12.2 5 14.9 3.9 14.4 3 15 1.7 12 1.2 14 0.3 14-0.7 14-1.6 13-20.8 0.3-1 1.1-26 0.1-1 1-32 0-1 1.1-40-0.1-1 1.1-65 0-1 1-109 0-1-1.1-66 0.1-1-1.1-40 0-1-1.1-31-0.2-1-1-7.2-0.2-14.8-26.2-11-24.9-5-14.3-4-13.9-5.2-26.7-1.3-12-0.4-13 0.4-13 1.3-12 2.2-12 3-11.8 8-21.7 5-10.1 6-10.4 7-10.2 8-10 9-9.6 8.9-8.2 10-8 10.1-7 10.1-6 11.9-6 12-5.1 13-4.5 12.1-3.4 13.9-2.9 14-2zM573 1061.5l24.5 0.7 33 3.7 164 25.2 104 14.1 88 10.1 91 8.8 114 8.8 118 6.9 121 4.8 121 2.8 152 0.5 76-0.9 76-1.7 74-2.5 74-3.3 74-4.1 71-4.7 126-10.7 120-13 113-15 164-25.3 27-3.4 21-1.7 14-0.1 12 0.8 10 2 8.1 3.2 5.9 4 5 6 2.7 7 0.7 8-0.6 7-1.8 8-9.7 27-4.1 8-5.6 8-10.7 12-13.6 12-16.6 12-18 11-22.8 12-24 11-27.4 11-31 11-31.8 10-35.5 10-35.7 9-39.7 9-44.3 9-44.1 8-90.7 14-54.1 7-52.8 6-107.9 10-119.9 8-116 4.8-120 2.4-121-0.3-118-3-122.4-5.9-110-8-110.9-11-100.7-13-45.6-7-46.6-8-46.7-9-41.7-9-37.4-9-37.2-10-36.3-11-32.1-11-28.3-11-27.1-12-23.3-12-21.6-13-17.8-13-14.4-13-11-13-6.9-12-10.7-30-1.8-10 0.1-8 1.4-6 2.5-5 3.5-4.3 4.9-3.7 6.1-2.9 7-2.1 8-1.3z"/>
<path fill="#112c76" d="M1637.5 796.5l0-0.7 57 0.1 101 1.9 90 3.6 81 4.9 75.2 6.2 71.8 7.7 60.9 8.3 58.1 10 45.9 10 39.5 11 17.7 6 15.2 6 13 6 11.7 6.3 10.3 6.7 8.7 7 6.9 7 6 8 4.2 8 2.8 9 0.9 9-0.8 8-2.7 8-3.9 6-5.8 5-6.6 3-34 4.1-33 1.5-32-0.3-39-1.4-237-13.4-151-6.2-1-0.3-1.1-3-2.1-2 0-1-2-2 0-1-2.1-2 0-1-2-2 0-1-2.1-2 0.1-1-3.1-3 0-1-6.1-7 0-1-9.1-10 0.1-1-7.1-7 0.1-1-24.5-24.4-1 0-7-7.1-1 0.1-5-5.1-1 0.1-4-4.1-1 0.1-3-3.1-1 0.1-7-6.1-1 0-2-2-1 0-2-2-1 0-5-4-1 0-2-2-1 0-2-2-3-1-2-2-3-1-2-2.1-5-1.9-2-2.1-1 0-1-1-1 0-1-1-1 0-1-1-1 0-1-1-5-2-7-4-1 0-1-1.1-1 0.1-1-1.1-2 0.1-5-3.1-2 0-3-2-2 0-1-1-1 0-1-1-2 0-1-1-2 0-3-2.1-2 0.1-1-1.1-2 0.1-1-1.1-2 0-1-1-2 0-1-1-3 0-1-1-2 0-1-1-3 0-1-1.1-3 0.1-1-1.1-3 0-1-1-3 0-1-1-3 0-1-1-4 0-1-1.1-5 0.1-1-1.1zM1523.7 797.5l27.8-0.7 0 0.7-4 0-1 1-4 0-1 1.1-3 0-1 1-3 0-1 1-2 0-1 1-2 0-1 1.1-3-0.1-1 1.1-2-0.1-3 2.1-2 0-1 1-2 0-3 2-2 0-1 1-1 0-7 4.1-5 2-1 1-1 0-1 1-1 0-1 1-1 0-2 2.1-3 0.9-5 4.1-1 0-2 2-1 0-2 2-1 0-8 7.1-1-0.1-6 6.1-1-0.1-10.5 10.6 0 1-6 6 0 1-4 4 0.1 1-3.1 3 0.1 1-2.1 2 0.1 1-4.1 5-0.9 3-2 2-2 5-2.1 2 0.1 1-2.1 3 0.1 2-4.1 7 0.1 2-2.1 3 0.1 2-1.1 1 0 1-1 1 0 2-1 1 0 2-1 1 0 3-1 1 0 2-1.1 1 0 3-1 1 0 3-1.1 1 0 4-1 1 0 4-1.1 1-0.1 5-1 1-0.1 2.6-130 5.8-216 12.3-42 1.6-33 0.2-33-1.4-33.1-4.1-6.7-3-5.8-5-3.9-6-2.5-7-0.9-7 0.3-8 1.8-8 2.9-7 4.1-7 5.6-7 7.1-7 7.6-6 9.2-6 10.8-6 24.9-11 29.4-10 37.3-10 41.9-9 51.5-9 56.9-8 61.7-7 66.7-6 68.2-4.8 70-3.6zM1583.6 813.5l14.9-0.7 15 0.3 15 1.1 15 2.1 16 3.2 15 3.9 29 10.1 15.9 7 14 7 16 9 14.1 8.9 14.6 10.1 14.3 11 25.1 22.1 22 23.4 18 23.6 8 12.5 7 12.5 6 12.3 5 12.2 5 14.8 3.9 14.6 3.1 15 1.7 12 1.1 14 0.3 14-0.8 14-1.5 13-19.8 0.3-1 1.1-26 0-1 1.1-32 0-1 1-40 0-1 1.1-65-0.1-1 1.1-109 0-1-1.1-66 0-1-1-40-0.1-1-1-31-0.2-1-1.1-6-0.1-14-24.4-12-26.9-5-14.3-3.9-13.4-5.1-25.7-1.3-12.3-0.5-12 0.3-12 1.1-12 4.4-22 3.7-12 4.3-10.9 5-10.6 6-10.6 7-10.4 7.4-9.5 8.2-9 8.4-8.1 9.5-7.9 10.5-7.6 10.4-6.4 11.4-6 11.2-5 13-4.8 25-6.6zM580.3 1067.5l25.2 0.6 35 3.6 169 24.5 107 13.7 85 9.3 89 8.2 113 8.3 114 6.4 119 4.6 120 2.6 149 0.4 149-2.5 145-5.5 142-8.5 123-10 117-12.1 112-14.2 167-24.3 28-3.3 22-1.7 15-0.2 12 0.9 10 1.8 8 2.9 7 4.5 4.2 5 2.8 6.6 0.9 7.4-1.3 10-3.8 12-8.8 22-7.7 12-10.8 12-12.6 11-16.7 12-18.2 11-23.1 12-24.4 11-27.8 11-28.6 10-31.9 10-35.8 10-36 9-40 9-44.8 9-44.5 8-92 14-99.2 12-107.7 10-116.2 7.8-116 4.9-119 2.5-120-0.3-120-2.9-115-5.4-113-8-108.4-10.6-50.5-6-51.9-7-46.2-7-47.2-8-42.2-8-42.6-9-38.1-9-37.9-10-33.8-10-33-11-29.2-11-27.8-12-24-12-22-13-17-12-14.9-13-10.6-12-7.4-12-11.4-30-1.7-9 0-8 1.4-6 2.4-4.7 3.8-4.3 4.2-3 6-2.9 7-2 8-1.4z"/>
<path fill="#122e7a" d="M1643.5 797.5l79 0.4 84 2 84 3.6 75 4.7 74.9 6.3 64.1 7 61 8.4 55.5 9.6 45.7 10 39.4 11 32.4 11.8 13.6 6.2 11.2 6 11 7 9 7 7.1 7 6.1 7.7 4.6 8.3 2.8 8 1.2 8-0.4 8-2.2 7-3.9 6-4.6 4-6.5 3.1-4 1-29 3.1-35 1.5-32-0.2-41-1.4-233-12.5-145-5.7-3.1-3.9 0-1-2.1-2 0-1-2.1-2 0.1-1-2.1-2 0-1-2-2 0-1-3.1-3 0-1-6.1-7 0.1-1-9.1-10 0-1-7.1-7 0.1-1-24.5-24.5-1 0.1-7-7.1-1 0.1-5-5.1-1 0.1-4-4.1-1 0-3-3-1 0-7-6-1 0-2-2-1 0-2-2-1 0-5-4-1 0-2-2-1 0-2-2.1-3-0.9-2-2.1-3-0.9-2-2.1-5-2-2-2-1 0-1-1-1 0-1-1-1 0-1-1-1 0-1-1-5-2-7-4.1-1 0-1-1-1 0-1-1-2 0-5-3-2 0-3-2-2 0-1-1-1 0-1-1.1-2 0.1-1-1.1-2 0.1-3-2.1-2 0-1-1-2 0-1-1-2 0-1-1-2 0-1-1.1-3 0.1-1-1.1-2 0.1-1-1.1-3 0-1-1-3 0-1-1-3 0-1-1-3 0-1-1.1-3 0.1-1-1.1-4 0-1-1zM1512.9 799.5l28.6-0.8 0 0.8-3 0-1 1-3 0-1 1.1-2 0-1 1-2 0-1 1-3 0-1 1-2 0-3 2.1-2-0.1-1 1.1-2-0.1-3 2.1-2 0-1 1-1 0-7 4.1-5 2-1 1-1 0-1 1-1 0-1 1-1 0-2 2-3 1-5 4.1-1-0.1-2 2.1-1-0.1-2 2.1-1 0-3 3-1 0-4 4-1 0-6 6.1-1-0.1-10.5 10.6 0 1-6 6 0 1-7 8 0 1-4 5 0.1 1-2.1 2-0.9 3-2.1 2-1.9 5-2.1 2 0.1 1-2.1 3 0.1 2-4.1 7 0.1 2-2.1 3 0 2-2 3 0 2-1 1 0 2-1.1 1 0.1 3-1.1 1 0 2-1 1 0 3-1 1 0 3-1.1 1 0 4-1 1-0.1 4-1 1-0.1 5-1.1 1 0 1.2-124 5.3-211 11.5-42 1.5-33 0.3-34-1.4-34-3.9-6.1-2.5-5.2-4-3.8-5-2.8-7-1-7 0.5-7 2-8 3-7 4.4-7 5.8-7 7.2-6.8 8-6.2 9.3-6 10.9-6 25-11 29.4-10 36.4-9.8 42.3-9.2 49.7-8.7 50.9-7.3 60.1-7 64.7-6 62.3-4.5 66-3.7zM1581.1 815.5l14.4-0.9 15 0.1 15 0.9 15 1.9 16 3 15 3.7 14 4.3 16.2 6 15.8 6.8 14.5 7.2 14.5 8.1 16 9.9 14.5 10 14.5 11 25 21.9 22 23.2 18 23.3 8 12.4 7 12.4 6 12.3 5 12.1 5 14.8 3.9 14.6 2.9 14 1.8 13 1.2 14 0.2 14-0.7 14-1.6 13-18.7 0.3-1 1-26 0.1-1 1.1-32 0-1 1-40 0-1 1-65 0-1 1.1-109 0-1-1.1-66 0-1-1-40-0.1-1-1-31-0.3-1-1-4.8-0.1-14.2-24.8-12-26.9-8-24.6-5.6-26.7-1.4-12-0.6-12 1.1-23 1.7-11 2.7-12 7.1-21.1 5-10.9 6-10.9 6-9.3 7.4-9.8 7.8-9 8.8-8.7 9-7.8 10.1-7.5 10.9-7 10.9-6 11.1-5.2 12.5-4.8 12.5-3.9 12.4-3.1zM586.4 1073.5l24.1 0.2 32 2.8 40 5 134 18.6 84 10.5 102 11 103 9.2 108 7.6 113 6 115 4.3 116 2.4 145 0.5 145-2.4 142-5.1 139-7.9 121-9.4 118-11.6 111-13.4 170-23.4 30-3.3 23-1.6 15-0.2 12 0.8 10 1.7 9 3 6.2 3.7 4.8 5.2 2.9 6.8 0.7 7-1.4 10-3.8 11-9.4 22-8.1 12-10.4 11-14.3 12-16.1 11-18.8 11-21.9 11-25.1 11-28.5 11-29.4 10-32.9 10-33 9-36.7 9-40.8 9-40.5 8-45.1 8-93.2 14-101.1 12-110.8 10-107.5 7-117.8 4.9-114 2.3-116-0.3-115-2.7-114-5.2-114.6-8-104.4-10-97.1-12-47.6-7-48.4-8-43.3-8-43.5-9-38.9-9-38.7-10-34.4-10-33.6-11-29.6-11-26-11-24.6-12-21-12-17.7-12-15.4-13-10.9-12-7-11-11.8-29-2-9-0.2-7 0.8-5 2.2-5 3.7-4.6 4.5-3.4 5.5-2.6 7-2.2z"/>
<path fill="#122f7e" d="M1654.5 799.5l63 0 87 2.1 78 3.3 78 4.9 69 5.9 68 7.4 60.2 8.4 52.8 9.2 44.4 9.8 39.4 11 32.2 11.7 14 6.3 11.3 6 11.2 7 9.2 7 7.4 7 6.5 8 4.7 8 2.9 8 1.2 8-0.5 7-2 6-3.9 5.4-5 3.9-6.5 2.7-34.5 3.7-35 1.3-32-0.3-41-1.3-228-11.6-139-5.3-2.1-2.5 0-1-2.1-2 0-1-2-2 0-1-2.1-2 0-1-2-2 0-1-3.1-3 0.1-1-6.1-7 0-1-9.1-10 0-1-7-7 0-1-24.5-24.5-1 0.1-7-7.1-1 0-5-5-1 0-4-4-1 0-3-3-1 0-7-6-1 0-2-2-1 0-2-2-1 0-5-4.1-1 0.1-2-2.1-1 0.1-2-2.1-1 0-1-1-1 0-2-2-3-1-2-2-5-2-2-2-1 0-1-1-1 0-1-1-1 0-1-1-1 0-1-1.1-5-1.9-7-4.1-1 0-1-1-1 0-1-1-2 0-5-3.1-2 0.1-3-2.1-2 0.1-1-1.1-1 0-1-1-2 0-1-1-2 0-3-2-2 0-1-1-2 0-1-1.1-2 0.1-1-1.1-2 0-1-1-3 0-1-1-2 0-1-1-3 0-1-1-3 0-1-1-3 0-1-1.1-3 0-1-1zM1505.8 801.5l27.7-0.8 0 0.8-2 0-1 1-2 0-1 1.1-3 0-1 1-2 0-3 2-2 0-1 1-2 0-3 2.1-2-0.1-1 1.1-1 0-1 1-1 0-7 4-5 2-1 1.1-1-0.1-1 1.1-1-0.1-2 2.1-3 1-5 4-1 0-2 2-1 0-2 2.1-1-0.1-3 3.1-1-0.1-4 4.1-1 0-6 6-1 0-10.6 10.6 0.1 1-6 6 0 1-7 8 0 1-4 5 0 1-2 2-1 3-2 2-1.9 5-2.1 2 0 1-2 3 0.1 2-4.1 7 0 2-2 3 0 2-2.1 3 0.1 2-1.1 1 0.1 2-1.1 1 0 3-1 1 0 2-1 1 0 3-1.1 1 0 3-1 1 0 4-1.1 1 0 4-1.1 1-0.1 5-1 0.8-117 4.8-206 10.6-43 1.5-34 0.3-34-1.3-34.7-3.7-6.3-2.6-4.6-3.4-3.9-5-2.4-6-0.8-7 0.8-7 2.1-7 3.5-7 4.7-7 5.6-6.3 7.3-6.7 8-6 19.7-11.6 24-10.6 29-10.1 35.4-9.7 40.6-9 49-8.8 49.2-7.2 58.6-7 61.2-5.8 61-4.6 64-3.8zM1595.1 816.5l14.4 0 14 0.8 15 1.7 14.4 2.5 15.6 3.7 14.6 4.3 28.6 11 14.8 7 14.9 8 28.7 18 27.4 20.8 13 11.3 12 11.5 20 22.1 16 21.7 7 11.2 7 12.8 10 23.1 4.1 12.5 3.9 14.7 3 15.1 1.8 13.2 1 14 0 13-0.8 14-1.5 12-17.5 0.3-1 1-26 0.1-1 1-32 0-1 1.1-40 0-1 1-65 0-1 1-109 0-1-1-66 0-1-1.1-40 0-1-1.1-31-0.2-1-1-3.4-0.1-14.6-25.3-12-27.1-5-14.4-4-14.2-5-26-1.1-12-0.3-12 0.5-11 1.3-12 2.3-12 2.8-11 3.8-11 4.7-11.2 6-11.6 6-9.8 7-9.7 8-9.6 8.8-9.1 9.2-8.1 10.2-7.9 10.7-7 11.1-6.3 12-5.7 12.7-5 12.3-3.9 12.3-3.1 13.7-2.5zM592.7 1079.5l24.8-0.2 35 2.7 42 5 138 18.1 83 9.9 100 10.2 104 8.8 107 7.2 111 5.7 112 3.9 113 2.2 142 0.4 141-2.3 140-4.9 135-7.4 118-8.8 115-10.8 112-12.8 171-22.3 30-3.1 24-1.7 16-0.2 13 0.8 10 1.6 9 2.9 6 3.4 5 5 2.8 5.7 1 7-1.2 9-3.8 11-10.4 23-7.7 11-10.6 11-13.5 11-16.4 11-17.4 10-22.1 11-25.5 11-26.2 10-29.5 10-33.1 10-33.3 9-36.9 9-41.3 9-40.9 8-45.6 8-94.5 14-103.2 12-101 9-107.5 7-114.2 4.8-112 2.3-115-0.2-119-2.7-113-5.2-103-7-107.1-10-98.9-12-48.3-7-49-8-43.8-8-39.3-8-39.7-9-35.7-9-35.5-10-31.6-10-30.8-11-27-11-23.6-11-22.1-12-18.6-12-15.1-12-11.8-12-7.7-11-12.3-28-2.5-9-0.5-7 0.6-5 2-5 3-4 4.3-3.6 5-2.6 7-2.3z"/>
<path fill="#133183" d="M1662.5 801.5l0-0.6 54 0.4 89.7 2.2 78.3 3.5 75 4.8 67 5.9 65 7.2 60 8.5 50.9 9.1 43.1 9.6 37 10.4 32 11.5 14 6.3 12 6.2 11 6.8 9 6.6 8 7.3 6.3 7.3 4.7 7.2 3.4 7.8 1.6 8-0.4 7-2.2 6-4 5-5.4 3.6-6 2.1-35 3.4-34 1.1-33-0.2-42-1.4-217-10.4-139-5.2-3.1-4 0-1-2.1-2 0-1-2-2 0-1-2.1-2 0-1-3-3 0-1-6.1-7 0-1-9.1-10 0-1-7-7 0-1-24.5-24.5-1 0-7-7-1 0-5-5-1 0-4-4-1 0-3-3-1 0-7-6.1-1 0.1-2-2.1-1 0.1-2-2.1-1 0.1-5-4.1-1 0-2-2-1 0-2-2-1 0-1-1-1 0-2-2-3-1-2-2-5-2-2-2.1-1 0.1-1-1.1-1 0.1-1-1.1-1 0.1-1-1.1-5-2-7-4-1 0-1-1-1 0-1-1-1 0-1-1.1-2 0.1-5-3.1-2 0-3-2-2 0-1-1-1 0-1-1-2 0-1-1-2 0-3-2.1-2 0.1-1-1.1-2 0-1-1-2 0-1-1-2 0-1-1-3 0-1-1-2 0-1-1.1-3 0.1-1-1.1-3 0-1-1zM1501.6 803.5l25.9-0.8 0 0.8-3 0-1 1-2 0-3 2.1-2 0-1 1-2 0-3 2-2 0-1 1-1 0-1 1-1 0-7 4.1-5 2-1 1-1 0-1 1-1 0-2 2.1-3 0.9-5 4.1-1 0-2 2-1 0-2 2-1 0-3 3-1 0-4 4.1-1-0.1-6 6.1-1 0-10.6 10.6 0.1 1-6.1 6 0.1 1-7 8 0 1-4 5 0 1-2 2-1 3-2 2-2 5-2 2 0 1-2 3 0 2-4 7 0 2-2 3 0 2-2.1 3 0.1 2-1.1 1 0 2-1 1 0 3-1 1 0 2-1.1 1 0.1 3-1.1 1 0 3-1 1-0.1 4-1 1-0.1 4-1 1-0.1 4.4-111 4.3-202 9.8-44 1.5-34 0.2-34-1.2-34-3.3-6-2-5.6-3.7-4-5-1.9-5-0.7-6 0.8-7 2.3-7 3.8-7 5.1-7 5.7-6 6.8-6 8.7-6.4 20.3-11.6 24.7-10.7 30-10.2 33.3-9.1 40.6-9 44.3-8 48.8-7.3 55.4-6.7 57.6-5.7 60-4.6 62-3.8zM1594 818.5l14.5-0.1 14 0.7 14 1.5 15 2.5 14.9 3.4 13.9 4 14.5 5 14.8 6 15 7 15.2 8 28.9 18 27.8 20.9 25 22.7 19 20.7 17 22.6 7 11.1 7 12.8 10 23.1 4 12.3 4 15.2 2.9 14.6 1.7 13 1 14 0 13-0.8 13-1.6 13-16.2 0.2-1 1.1-26 0.1-1 1-32 0-1 1.1-40 0-1 1-65 0-1 1-109 0-1-1-66 0-1-1.1-40 0-1-1.1-31-0.2-1-1.1-2 0-15-26.1-11.9-26.9-8.1-25.2-3-12.9-2.5-14.9-1.2-12-0.4-12 0.6-12 1.2-11 2.3-12 2.9-11 8.1-21.3 6-11.7 6-9.7 7-9.8 8-9.6 8.7-8.9 8.9-8 10.4-8 10-6.6 11.2-6.4 11.8-5.7 12-4.8 12-4 13-3.3 13-2.5zM599.5 1085.5l12-0.7 15 0.2 37 2.6 44 4.9 142 17.6 81 9.1 101 9.8 103 8.3 104 6.7 107 5.2 109 3.7 110 2 139 0.4 139-2.2 137-4.6 133-7.1 115-8.2 112-10.1 111-12.1 173-21.2 32-3.2 24-1.6 16-0.2 13 0.7 11 1.7 9 2.6 6.8 3.7 5 5 2.7 6 0.7 6-1.4 9-3.7 10-11 23-7.1 10-9.9 10-13.6 11-16.7 11-17.8 10-22.7 11-23.6 10-26.6 10-30 10-33.7 10-33.9 9-37.7 9-37.3 8-81.3 15-94.4 14-103.1 12-101.1 9-107.8 7-111.8 4.7-113 2.3-112-0.1-118-2.7-113-5.1-103.6-7.1-107.4-10-98.9-12-91.3-14-44.2-8-39.8-8-35.8-8-36.4-9-36.2-10-32.1-10-28.6-10-27.8-11-24.2-11-22.6-12-17.5-11-15.7-12-11.2-11-8-11-12.7-27-2.5-8-0.9-7 0.4-5 1.8-5 2.8-4 3.4-3 5-2.9 6-2.2z"/>
<path fill="#133287" d="M1670.5 803.5l0-0.7 47 0.4 90 2.3 74 3.3 72 4.8 67.8 5.9 62 7 56.3 8 50.6 9 43.3 9.6 37.2 10.4 30.9 11 25.9 12.1 11.8 6.9 9.2 6.5 8.7 7.5 6.4 7 5.4 8 3.2 7 1.5 7-0.3 7-1.9 5-3 4-5 3.6-6.4 2.4-34.6 3.3-36 1.2-33-0.2-41.7-1.3-215.3-9.8-131-4.6-2.1-2.6 0-1-2-2 0-1-2.1-2 0-1-2-2 0-1-3.1-3 0-1-6.1-7 0-1-9.1-10 0.1-1-7.1-7 0-1-24.5-24.5-1 0-7-7-1 0-5-5-1 0-4-4.1-1 0.1-3-3.1-1 0.1-7-6.1-1 0-2-2-1 0-2-2-1 0-5-4-1 0-2-2-1 0-2-2-1 0-1-1-1 0-2-2-3-1-2-2.1-5-1.9-2-2.1-1 0-1-1-1 0-1-1-1 0-1-1-5-2-7-4-1 0-1-1.1-1 0.1-1-1.1-1 0-1-1-2 0-5-3-2 0-3-2-2 0-1-1-1 0-1-1.1-2 0.1-1-1.1-2 0.1-3-2.1-2 0-1-1-2 0-1-1-2 0-1-1-2 0-1-1.1-3 0.1-1-1.1-2 0-1-1zM1499.8 805.5l20.7-0.7 0 0.7-1 0-1 1-2 0-1 1.1-2-0.1-3 2.1-2 0-1 1-1 0-7 4.1-1-0.1-1 1.1-5 2-1 1-1 0-1 1-1 0-2 2-3 1-2 2.1-1-0.1-5 4.1-1 0-2 2-1 0-8 7-1 0-6 6.1-1-0.1-10 10.1-0.6 1.6-6 6 0.1 1-7.1 8 0.1 1-2 2 0 1-4 5-1 3-2 2-2 5-2 2 0 1-2 3 0 2-4 7 0 2-2.1 3 0.1 2-2.1 3 0 2-1 1 0 2-1 1 0 3-1 1 0 2-1.1 1 0 3-1 1 0 3-1.1 1 0 4-1 1-0.1 4-1 1-0.1 2.9-104 3.9-199 9.1-44 1.4-34 0.2-34-1.2-34.8-3.3-5.6-2-4.7-3-3.5-4-2.4-5.6-0.5-6.4 1-6 2.2-6 4.1-7 5.2-6.7 6.3-6.3 7.2-6 8.5-6 20-11.2 25.3-10.8 29.8-10 33.2-9 38.7-8.6 43-7.8 48-7.2 51.6-6.4 56.4-5.6 58-4.7 61-3.7zM1595.7 820.5l14.8-0.1 14 0.8 14 1.6 15.2 2.7 14.8 3.5 15 4.5 28.4 11 14.7 7 14.8 8 28.6 18 27.5 20.8 13 11.3 12 11.5 19 20.9 16 21.6 13 22.3 10 23.2 4 12.4 4 15.4 4.3 26.6 0.9 13 0.1 14-0.8 13-1.7 13-14.8 0.2-1 1-26 0.1-1 1.1-32 0-1 1.1-40-0.1-1 1.1-65 0-1 1-109 0-1-1.1-66 0-1-1-40-0.1-1-1-31-0.3-1.5-1-14.5-25-12-26.7-5-14.2-3.8-13.1-5.2-25.9-1.2-11.1-0.5-12 0.5-12 1.2-11.1 2-11.1 3-11.7 3.8-11.1 4.2-10.1 6-11.8 6-9.8 7-9.8 8-9.6 8.7-8.9 9.3-8.3 10-7.7 10.6-7 10.5-6 12.5-6 12.4-4.9 12-3.9 12.7-3.2 13.3-2.5zM623.7 1090.5l25.8 0.6 33 2.7 178 20.5 81 8.7 97 9 98 7.7 103 6.4 106 5.1 108 3.6 108 2 136 0.5 136-2 134-4.3 132-6.7 112-7.6 112-9.6 110-11.3 176-20.4 33-3.2 26-1.5 16-0.2 14 0.8 11 1.6 8.9 2.6 7.1 3.8 4.3 4.2 2.7 5.1 0.9 6.9-1.2 8-3.9 10-9.1 17-2.6 6-7.4 10-10.3 10-14.4 11-15.8 10-18.5 10-23.5 11-24.5 10-27.7 10-27.9 9-31.1 9-34.5 9-38.5 9-38.1 8-83.5 15-89.8 13-95.4 11-103.2 9.2-106.2 6.8-110.8 4.6-112 2.3-112-0.2-118-2.7-110.2-5-104.8-7.2-105.6-9.8-98.8-12-91.2-14-44.1-8-39.6-8-35.8-8-36.2-9-36-10-32-10-28.3-10-27.5-11-23.8-11-22.2-12-16.9-11-14.9-12-7.9-8-5.3-7-12.4-24-4.9-13-0.7-6 0.4-5 1.8-5 3.1-4 3.8-3 5.9-3 6.3-2 7.8-1.5z"/>
<path fill="#14348b" d="M1677.5 805.5l0-0.7 42 0.4 88 2.3 72 3.3 70.1 4.7 63.9 5.7 60 6.8 53.4 7.5 51 9 41.1 9 37.5 10.3 31.1 10.7 26.9 12.1 11 6.2 10.1 6.7 8.7 7 7.1 7 6 8 3.5 7 1.8 7-0.1 6-1.8 5-3.2 4-4.2 3-6.9 2.5-35 3.2-35 1.1-34-0.2-44-1.3-205-8.8-129-4.5-3.1-4 0-1-2.1-2 0-1-2-2 0-1-3.1-3 0-1-6.1-7 0.1-1-9.1-10 0-1-7.1-7 0.1-1-24.6-24.5-1 0-7-7.1-1 0.1-5-5.1-1 0.1-4-4.1-1 0.1-3-3.1-1 0-7-6-1 0-2-2-1 0-2-2-1 0-5-4-1 0-2-2-1 0-2-2.1-1 0.1-1-1.1-1 0.1-2-2.1-3-0.9-2-2.1-5-2-2-2-1 0-1-1-1 0-1-1-1 0-1-1-5-2-7-4.1-1 0-1-1-1 0-1-1-1 0-1-1-2 0-5-3-2 0-3-2.1-2 0.1-1-1.1-1 0-1-1-2 0-1-1-2 0-3-2-2 0-1-1-2 0-1-1.1-2 0.1-1-1.1-2 0-1-1zM1500.1 807.5l15.4-0.5 0 0.5-2 0-3 2-2 0-1 1.1-5 2-1 1-1 0-1 1-1 0-1 1-5 2-1 1.1-1-0.1-1 1.1-1 0-2 2-3 1-2 2-1 0-5 4.1-1-0.1-2 2.1-1-0.1-8 7.1-1 0-6 6-1 0-10 10.1-0.6 1.6-6 6 0 1-7 8 0.1 1-2.1 2 0.1 1-4.1 5-0.9 3-2 2-2 5-2.1 2 0.1 1-2.1 3 0.1 2-4.1 7 0.1 2-2.1 3 0 2-2 3 0 2-1 1 0 2-1.1 1 0.1 3-1.1 1 0 2-1 1 0 3-1 1-0.1 3-1 1 0 4-1.1 1 0 4-1.1 1 0 1.4-97 3.5-194 8.4-45 1.3-35 0.2-34-1.2-34-3.1-5-1.5-5.2-3-3.7-4-2.2-5-0.5-5 1-6 2.3-6 4.2-7 5.9-7 6.3-6 7.6-6 8.9-6 20.5-11 23.9-10 29.9-10 33.4-9 36.7-8.1 43.1-7.9 46.4-7 51.5-6.4 55.8-5.6 55.2-4.4 59-3.7zM1583.4 823.5l14.1-0.9 15 0 15 1 14.8 1.9 15.2 2.9 14 3.5 14.8 4.6 14.2 5.3 15.5 6.7 14.2 7 14.4 8 16.2 10 14.7 10.1 14.5 10.9 13.5 11.1 13 11.8 21 22.1 17 22 7 10.8 7 12.4 10 22.5 4.1 12.3 4 15 2.9 14.2 2 14.8 0.9 14 0 13-0.9 13.8-1.7 12.2-13.3 0.2-1 1-26 0.1-1 1.1-32 0-1 1-40 0-1 1.1-65-0.1-1 1.1-109 0-1-1.1-66 0-1-1-40-0.1-1-1-30.2-0.3-13.8-23.3-12-25.7-9-26.2-5.9-26.8-2.2-22 0.1-11 1-12 4-21.3 7-20.8 10-19.9 7-10.8 7-9.2 8-9.1 9-8.8 9-7.7 10-7.4 20.3-12 10.7-5 12.6-5 12.4-3.9 12.2-3.1zM625.7 1096.5l27.8-0.2 39 2.6 266 28.3 99 8.8 99 7.2 100 6 103 4.6 104 3.2 104 1.8 132 0.4 132-1.9 131-4.1 128-6.2 109-7.1 109-8.9 110-10.7 177-19.5 34-3 26-1.5 16-0.2 14 0.6 11 1.5 9.3 2.3 7.7 3.5 5 4.3 3 5.2 1 6-1.2 8-4 10-9.6 17-2.7 6-6.8 9-10.6 10-13.3 10-16.1 10-16.8 9-23.8 11-24.8 10-28.1 10-28.4 9-31.6 9-35.2 9-73.2 16-78.4 14-89.6 13-95.5 11-101.3 9-108 7-105 4.4-111 2.3-111-0.1-114-2.5-109-4.7-110-7.4-98.3-9-93.4-11-49.8-7-44.3-7-81.1-15-37-8-37.4-9-33.6-9-33.3-10-29.5-10-26.1-10-25.1-11-21.5-11-18.1-11-14.8-11-10.6-10-6.8-9-14.2-27-2.6-8-0.6-7 0.9-5 2.1-4 3.1-3.4 4-2.8 6-2.6 7-2z"/>
<path fill="#15368f" d="M1684.5 807.5l0-0.7 42 0.5 84 2.4 72 3.5 68 4.7 61.3 5.6 59.7 7 52 7.5 46.9 8.5 40.5 9 36.2 10 31.5 11 25.9 11.7 11.2 6.3 9.8 6.5 8.2 6.5 7.1 7 5.4 7 3.6 7 1.6 6-0.2 6-1.5 4-3.3 4-4.7 3-6.2 2-35 3-35 1.1-77-1.3-207-8.4-118-3.7-2.1-2.7 0-1-2-2 0-1-2.1-2 0-1-3-3 0-1-6.1-7 0-1-9.1-10 0-1-7.1-7 0.1-1-24.6-24.6-1 0.1-7-7.1-1 0.1-10-9.1-1 0-7-6-1 0-3-3-1 0-2-2-1 0-2-2-1 0-5-4.1-1 0.1-2-2.1-1 0.1-2-2.1-3-1-2-2-3-1-2-2-5-2-2-2-1 0-1-1-1 0-1-1.1-1 0.1-1-1.1-5-2-7-4-1 0-1-1-1 0-1-1-1 0-1-1-2 0-5-3.1-2 0-3-2-2 0-3-2-2 0-1-1-2 0-3-2.1-2 0-1-1-2 0-1-1zM1502.3 809.5l8.2 0-2 0-7 4.1-5 2-1 1-5 2-1 1-1 0-2 2.1-3 1-2 2-1 0-5 4-1 0-2 2-1 0-8 7.1-1 0-6 6-1 0-10.7 10.7 0.1 1-6 6 0 1-4 4 0 1-3 3 0 1-2 2 0 1-4 5-0.9 3-2.1 2-1.9 5-2.1 2 0.1 1-2.1 3 0.1 2-4.1 7 0 2-2 3 0 2-2 3 0 2-1.1 1 0.1 2-1.1 1 0 3-1 1 0 2-1 1 0 3-1.1 1 0 3-1 1-0.1 4-1 1-0.1 4-1 0.9-280 10.8-45 1.2-36 0.2-33-1.1-34.4-3-5.9-2-4.8-3-3.3-4-1.5-4-0.3-5 1.3-6 2.8-6 4.1-6 5.4-6 6.6-6 7.9-6 9.4-6 21.3-11 24.7-10 28.7-9.3 33-8.8 37-8.1 43-7.8 46.9-7 48.1-5.9 51-5.2 57-4.6 57-3.5zM1587.3 825.5l14.2-0.7 15 0.2 15 1.2 14 2 16 3.3 14 3.8 14 4.5 14.7 5.7 15.3 6.9 14 7.1 30 18.1 29 21.2 14 11.7 12 11.1 20 21.4 16 21 13 21.7 5.2 10.8 4.9 12 3.9 12 4 15.2 2.9 14.8 1.6 13 0.9 14 0 13-0.9 13-1.7 13-11.8 0.2-1 1-26 0.1-1 1-32 0.1-1 1-40 0-1 1-65 0-1 1.1-109-0.1-1-1-66 0-1-1-40-0.1-1-1.1-28.4-0.2-14.6-24.6-12-25.9-8.6-25.5-5.6-25-1.6-12-0.6-11 1-22 1.7-11 2.6-11 7.1-20.6 5-10.6 6-10.6 6.9-10.2 7.1-9 8-8.8 8.5-8.2 9.5-7.8 10-7.2 21-12.1 11-5 13-4.8 24-6.5zM632.6 1102.5l13.9-0.8 16 0.1 43 2.5 275 27.6 98 8.1 98 6.8 96 5.3 98 4.1 99 3 100 1.6 129 0.4 129-1.8 126-3.8 126-5.8 108-6.8 105-8.1 108-10 178-18.5 35-3 28-1.5 17-0.2 15 0.7 12 1.5 9 2.3 7.3 3.3 4.9 4 3 5 1.1 6-1.4 8-3.8 9-10.1 17-3.5 7-6.5 8-9.8 9-12.2 9-16.3 10-17.2 9-21.9 10-25.1 10-28.5 10-28.9 9-32.1 9-31.8 8-35 8-38.9 8-79.3 14-91.2 13-87.8 10-101.6 9-104.4 6.7-105 4.4-110 2.3-110 0-110-2.3-105-4.4-103.6-6.7-101.7-9-95.5-11-89.6-13-83.2-15-37.9-8-38.2-9-34.2-9-30.7-9-30.3-10-26.8-10-23.5-10-22.2-11-18.8-11-14-10-11-10-7.1-9-2.3-5-12.2-21-2.6-7-1-7 0.6-5 1.8-3.9 2.6-3.1 3.9-3 10.5-4.3z"/>
<path fill="#153793" d="M1690.5 809.5l0-0.6 44 0.7 80 2.4 68.9 3.5 63.1 4.5 59.7 5.5 54.3 6.3 52 7.6 45.3 8.1 40.9 9 36.6 10 30.2 10.4 26 11.4 11.5 6.2 9.5 6 8.1 6 7.7 7 5.8 7 3.6 6 1.9 6 0.1 6-1.5 4-3.6 4-5.2 3-5.9 1.7-35 2.7-34 1-80-1.3-196-7.5-116-3.6-3.1-4 0-1-2-2 0-1-3.1-3 0-1-6.1-7 0-1-9.1-10 0-1-7-7 0-1-24.6-24.6-1 0.1-7-7.1-1 0-10-9-1 0-7-6-1 0-3-3.1-1 0.1-2-2.1-1 0.1-2-2.1-1 0.1-5-4.1-1 0-2-2-1 0-2-2-3-1-2-2-3-1-2-2-5-2-2-2.1-1 0-1-1-1 0-1-1-1 0-1-1-5-2-1-1-1 0-5-3-1 0-1-1-1 0-1-1.1-1 0.1-1-1.1-2 0-5-3-2 0-3-2-2 0-3-2-2 0-1-1.1-2 0-3-2zM1481.7 812.5l21.8-0.9 0 0.9-5 2-1 1.1-1 0-1 1-1 0-1 1-1 0-1 1-1 0-1 1-1 0-2 2-3 1-2 2.1-1-0.1-5 4.1-1 0-2 2-1 0-3 3-1 0-4 4.1-1-0.1-6 6.1-1 0-10 10-0.6 1.7-6 6 0 1-4 4 0 1-3 3 0 1-2 2 0 1-4 5-1 3-2 2-1.9 5-2.1 2 0 1-2 3 0.1 2-4.1 7 0 2-2 3 0 2-1 1 0 1-1.1 1 0.1 2-1.1 1 0 2-1 1 0 3-1 1 0 2-1.1 1 0 3-1 1 0 3-1.1 1 0 4-1 1-0.1 3.3-268 9.8-46 1.2-36 0.1-33-1-34-2.7-6.1-1.7-4.9-2.7-3.2-3.3-1.9-4-0.5-5 1-5 2.3-5 4-6 5.3-6 6.7-6 16.3-11.2 20.6-10.8 24.4-10 27.3-9 31.7-8.6 36-8.1 39.1-7.3 42.9-6.7 45-5.8 50-5.4 50-4.4 53.9-3.7zM1593.8 827.5l14.7-0.3 14 0.6 14 1.4 14.3 2.3 27.8 7 14.6 5 14.9 6 14.9 7 15.1 8 29 18 28.4 21.1 25 22.4 18.1 19.5 15.9 21.1 13 22.2 9.3 21.7 4.3 14 3.4 13.6 2.5 13.4 1.6 13 0.8 13-0.1 13-0.9 13-1.8 13-10.1 0.1-1 1.1-26 0.1-1 1-32 0-1 1.1-40 0-1 1-65 0-1 1-109 0-1-1-66 0-1-1.1-40 0-1-1.1-26.5-0.2-14.5-24.2-12-25.7-9-26.4-3.2-12.7-2.6-14-1.4-11-0.5-11 0.2-11 1.1-11 4.4-21.3 7.5-20.7 5.5-11.1 6-10.1 6.9-9.8 7.3-9 8.5-9 8.7-8 10.1-8 10.3-7 10.2-6 11.9-6 12-5 11.6-4 24.8-6zM653.5 1107.5l30 0 41 2.5 265 25.2 95 7.6 94 6.3 95 5.2 97 4 98 2.9 98 1.6 126 0.4 125-1.6 124-3.4 125-5.5 106-6.3 103-7.6 109-9.5 180-17.7 36-2.8 27-1.4 17-0.2 15 0.6 12 1.4 9.8 2.3 7.2 3 5.4 4 3.3 5 1 6-1.1 7-3.9 9-11.3 18-3.1 6-5.7 7-10 9-12.5 9-15 9-17.5 9-22.4 10-23 9-25.8 9-29 9-32.4 9-31.9 8-35.4 8-39.3 8-80.4 14-84.8 12-97.9 11-97.3 8.4-103 6.5-102 4.2-107 2.1-109 0-106-2.2-108-4.6-99.3-6.4-102.2-9-95.7-11-89.6-13-83-15-37.8-8-34-8-34.5-9-30.8-9-30.4-10-26.8-10-23.3-10-20.2-10-18.7-11-13.7-10-7.8-7-5.3-6-14.1-23-5.6-12-1-5 0-4 0.9-4 2.4-4 3.5-3.3 4.8-2.7 6.2-2.3 7.3-1.7z"/>
<path fill="#163997" d="M1695.5 811.5l50 0.5 73 2.4 63 3.3 62 4.5 56.5 5.3 52.5 6.2 49 7.1 45 8 39.9 8.7 36.1 9.7 30.5 10.3 25.8 11 21.4 12 8.3 6 8 7 5.3 6 3.8 6 2 6 0.1 5-1.5 4-3.7 3.9-4 2.3-6 1.8-35 2.8-34 1-79-1.2-198-7-105-3-2.1-2.6 0-1-2-2 0-1-3.1-3 0-1-3-3 0-1-3.1-3 0-1-9.1-10 0.1-1-7.1-7 0-1-24.6-24.6-1 0-7-7-1 0-10-9-1 0-7-6.1-1 0.1-3-3.1-1 0.1-2-2.1-1 0-2-2-1 0-5-4-1 0-2-2-1 0-2-2-3-1-2-2-3-1-2-2.1-5-2-2-2-1 0-1-1-1 0-1-1-1 0-1-1-5-2-1-1-1 0-7-4.1-1 0-1-1-1 0-1-1-2 0-5-3-2 0-1-1-1 0-1-1.1-2 0.1-3-2.1-2 0-1-1zM1487.1 814.5l12.4-0.5 0 0.5-5 2-1 1-1 0-1 1.1-1 0-1 1-1 0-2 2-3 1-2 2-1 0-5 4.1-1 0-2 2-1 0-3 3-1 0-4 4-1 0-6 6.1-1-0.1-10.7 10.8 0 1-6 6 0.1 1-7 8 0 1-2 2 0 1-4 5-1 3-2 2-2 5-2 2 0 1-2 3 0 2-4 7 0 2-2 3 0 2-2.1 3 0 2-1 1 0 2-1 1 0 3-1 1 0 2-1.1 1 0 3-1 1-0.1 3-1 1 0 4-1.1 1 0 1.7-256 8.9-47 1.1-36 0.1-33-1.1-34-2.6-6-1.8-4.1-2.3-3.1-3-2-4-0.3-5 1.3-5 2.6-5 4.6-6 12.1-11 16.9-11 20.1-10 24.9-9.8 28.7-9.2 30.2-8 36.4-8 37.7-6.9 40-6.2 45.3-5.9 46.7-5 52-4.5 52-3.6zM1587.9 830.5l13.6-0.7 14 0.1 14 0.9 15 2 14 2.7 15 3.9 14 4.5 14.7 5.6 15.3 6.8 14.2 7.2 30.1 18 29.7 21.5 13.8 11.5 12.2 11.1 19 20.1 16 20.8 13 21.7 5 10.5 4.6 11.8 7.4 26 2.7 14 1.7 14 0.8 13-0.1 14-1.1 13-1.8 12-8.2 0.1-1 1-26 0.2-1 1-32 0-1 1.1-40 0-1 1-65 0-1 1-109 0-1-1-66-0.1-1-1-40-0.1-1-1-24.5-0.2-14.5-24.1-11.8-24.9-8.7-25-5.8-25-2.5-22 0.8-21.2 1.6-10.8 2.4-10.8 7-20.5 5-10.7 5.7-10 6.3-9.5 7.4-9.5 8.1-9 8.5-8.2 9.4-7.8 9.6-6.9 10-6.3 11-5.9 11-5 12-4.6 24-6.6zM660.2 1113.5l14.3-0.7 17 0 46 2.4 275 24.6 95 7.1 93 5.8 90 4.5 93 3.7 92 2.5 93 1.5 123 0.3 122-1.4 123-3.3 120-5.1 100-5.6 102-7.2 106-8.7 182-16.9 37-2.7 29-1.4 18-0.2 15 0.6 12 1.4 10 2.2 7 2.7 6 4.1 3.3 4.8 1.1 6-1.3 7-4.2 9-11.3 17-3.3 6-5.9 7-9.1 8-12.9 9-15.4 9-18.1 9-20.7 9-23.6 9-26.5 9-29.8 9-33.4 9-33 8-72.1 15-76.2 13-87.6 12.1-89 9.9-101 8.6-103 6.3-100 4-104 2.1-103-0.1-108-2.2-107-4.5-99-6.4-100-8.8-96.2-11-83.3-12-79.1-14-69.3-15-31.8-8-32.1-9-28.7-9-28.2-10-24.6-10-21.2-10-17.9-10-14.8-10-9.4-8-6.9-8-3.3-6-12.9-20-2.9-7-1-6 0.4-4 1.7-4 2.5-3 4.1-3 4.9-2.3 7-2.2z"/>
<path fill="#173b9c" d="M1701.5 813.5l58 1.1 64 2.3 60 3.3 57.3 4.3 52.7 5 52 6.2 47 6.8 44.6 8 38.4 8.4 35 9.3 30 9.9 25 10.4 22.1 12 8.7 6 7.2 6 5.6 6 4 6 2 5 0.2 5-1.5 4-3.3 3.4-4.8 2.6-6.2 1.7-34 2.5-33 0.9-81-1-193-6.4-98-2.7-3.1-4 0-1-3-3 0-1-3.1-3 0-1-3.1-3 0.1-1-9.1-10 0-1-7.1-7 0-1-24.6-24.6-1 0-7-7-1 0-10-9.1-1 0.1-7-6.1-1 0-3-3-1 0-2-2-1 0-2-2-1 0-5-4-1 0-2-2-1 0-2-2.1-3-0.9-2-2.1-3-1-2-2-5-2-2-2-1 0-1-1-1 0-1-1-1 0-1-1-5-2-1-1.1-1 0-1-1-1 0-1-1-1 0-5-3-1 0-1-1-2 0-5-3.1-2 0-3-2-2 0-1-1zM1472.3 817.5l21.2-1 0 1-5 2-2 2.1-3 1-2 2-1 0-2 2-1 0-2 2-1 0-2 2.1-1-0.1-3 3.1-1 0-4 4-1 0-6 6-1 0-10.7 10.8 0 1-6 6 0 1-7 8 0.1 1-2 2 0 1-4 5-1 3-2 2-2 5-2 2 0 1-2 3 0 2-4 7 0 2-2.1 3 0.1 2-2.1 3 0 2-1 1 0 2-1 1 0 3-1.1 1 0 2-1 1 0 3-1.1 1 0 3-1 1-0.1 4-1 1.1-244 8-47 1-37 0-32-1-33-2.4-6-1.5-4.4-2.2-3.4-3-2-4-0.3-4 1.3-5 2.7-5 4-5 5-5 7.1-5.8 16.1-10.2 20.4-10 22.8-9 26.7-8.6 30-8.1 32.3-7.3 36.8-7 38.9-6.2 42.9-5.8 44.6-5 47.5-4.4 48.7-3.6zM1599.3 832.5l13.2-0.1 14 0.7 14 1.7 14 2.4 27.2 7.3 14.1 5 14.3 6 29.4 15 30 18.9 28 21.1 24 21.7 18 19.8 15 20.5 11.8 21 8.2 20.2 7 26.1 2.2 12.7 1.6 14 0.6 13-0.2 13-1.1 12-1.8 12-6.3 0.1-1 1-26 0.1-1 1.1-32 0-1 1-40 0-1 1.1-65 0-1 1-109 0-1-1-66-0.1-1-1-40-0.1-1-1-22.3-0.2-14.7-24.3-12-25.3-9-26-3.4-13.4-2.6-13.8-1.8-21.2 0.3-11 1.1-11 4.4-20.1 3.7-10.9 4.2-10 5.1-10.1 6-9.9 7-9.7 8-9.6 8.5-8.7 9-8 9.5-7.3 10-6.7 11-6.3 11.8-5.7 23.2-8.5 13-3.4 12-2.4 13-1.7zM682.3 1118.5l31.2-0.1 44 2.3 265 22.5 92 6.6 89 5.3 91 4.5 89 3.4 90 2.4 92 1.5 120 0.4 120-1.3 119-3 119-4.7 100-5.4 100-6.6 104-8.2 180-15.7 39-2.7 30-1.4 19-0.1 15 0.6 13 1.4 10 2.2 7.8 3.1 5.5 4 3.1 5 0.8 5-1.5 7-3.8 8-12.7 18-3.4 6-5.4 6-9.5 8-11.8 8-15.9 9-16.5 8-21.2 9-24.1 9-27.2 9-27.1 8-30 8-33.3 8-72.9 15-77.3 13-88.1 12-92.7 10-95.8 7.9-100 6-98 3.9-101 1.9-102-0.1-107-2.2-103.6-4.4-101.4-6.5-96.5-8.5-96.2-11-83.4-12-78.9-14-69-15-31.6-8-31.9-9-28.4-9-27.7-10-21.9-9-20.9-10-17.5-10-14-10-6.7-6-4.4-5-3.4-6-12-17-4.9-10-1-5 0.1-4 1.5-4 2.2-3 3.8-3 4.7-2.4 13.3-3.6z"/>
<path fill="#173ca0" d="M1708.5 816.5l0-0.7 28 0.5 77 2.5 62 3.4 58 4.3 52.9 5 50.1 6 46 6.7 41.5 7.3 37.4 8 34.6 9 30.5 9.8 25.5 10.2 21.3 11 9.2 6 7.7 6 5.9 6 3.7 5 2.2 5 0.4 5-1.5 4-3 3-4.4 2.4-6 1.7-34 2.4-32 1-82-0.9-280-8.2-2-2.4-0.1-1-3-3 0-1-3.1-3 0-1-3-3 0-1-9.1-10 0-1-7.1-7 0.1-1-24.7-24.6-1 0-7-7.1-1 0.1-5-5.1-1 0.1-4-4.1-1 0-3-3-1 0-7-6-1 0-2-2-1 0-2-2-1 0-5-4-1 0-2-2.1-1 0.1-2-2.1-1 0-1-1-1 0-2-2-3-1-2-2-5-2-2-2-1 0-1-1.1-1 0.1-1-1.1-5-2-1-1-1 0-1-1-1 0-1-1-1 0-1-1-1 0-1-1-5-2-1-1.1-2 0.1-5-3.1zM1479.9 819.5l9.6-0.5 0 0.5-1 0-2 2-3 1-2 2.1-1 0-2 2-1 0-2 2-1 0-2 2-1 0-8 7.1-1 0-6 6-1 0-10.7 10.8 0 1-6 6 0 1-4 4 0 1-3 3 0 1-2 2 0.1 1-4.1 5-0.9 3-2 2-2 5-2.1 2 0.1 1-2 3 0 2-4.1 7 0.1 2-2.1 3 0 2-2 3 0 2-1 1 0 2-1.1 1 0 3-1 1 0 2-1 1-0.1 3-1 1 0 3-1 1-0.1 3.5-235 7.1-83 0.9-31-1-33-2.4-6-1.6-4.6-2.5-3-3-1.3-3-0.2-4 1.1-4 2.8-5 4.2-5 11.8-10 16.3-10 20.9-9.9 23-8.8 26.3-8.3 30.4-8 32.3-7.1 36.7-6.9 38.1-6 41.2-5.5 44-4.9 47-4.2 48-3.5zM1596.1 835.5l13.4-0.3 14 0.5 14 1.4 14 2.2 14 3.2 14 4 14.4 5 13.6 5.6 29 14.5 30.4 18.9 28.6 21.3 13 11 12 11.3 17 18.4 15 20.2 11.9 20.8 8.1 19.8 7 26.2 2.3 13 1.6 14 0.5 13-0.3 13-1 12-1.9 12-4.2 0-1 1.1-26 0.1-1 1-32 0.1-1 1-40 0-1 1.1-65 0-1 1-109 0-1-1.1-66 0-1-1-40-0.1-1-1-19.9-0.2-15.1-24.7-12-25.3-9-26-5.4-24-2.2-21 0.1-10 0.9-11 1.6-10 2.6-11 7.3-20 5.1-10.2 6-10.1 6.8-9.7 7.2-8.8 8-8.5 9-8.3 9.3-7.4 10.2-7 10.5-6.2 11.4-5.8 11.6-4.9 11.8-4.1 24.4-6zM690 1124.5l15.5-0.8 18 0 48 2.1 277 21.9 91 6.1 89 5 85 3.8 84 3 85 2.1 84 1.3 117 0.4 116-1.2 117-2.8 114-4.3 97-4.9 97-6.1 101-7.4 185.8-15.2 39.2-2.6 30-1.2 34 0.5 12.2 1.3 10.8 2.2 7.9 2.8 6 4 3.4 5 0.8 5-1.6 7-4.2 8-12.7 17-3.5 6-5.6 6-8.6 7-12 8-14.4 8-16.7 8-21.6 9-21.8 8-27.6 9-27.5 8-30.6 8-34 8-69.2 14-78.4 13-81.6 11-93.1 10-90.4 7.5-95 5.8-101 4-101 2-102 0-104-2.2-100-4.1-96.9-6-94.1-8-90.9-10-86.6-12-76-13-71.6-15-32.6-8-29.4-8-29.6-9-26.1-9-23-9-19.9-9-18.7-10-13.7-9-7.5-6-5-5-5.2-8-10.7-14-5.8-10-1.6-5-0.4-4 0.8-4 1.6-3 2.9-3 4.9-3 12.1-3.8z"/>
<path fill="#183ea4" d="M1713.5 818.5l43 0.6 64 2.5 57 3.2 55 4.2 50 4.9 47 5.6 45 6.6 41.4 7.4 37.1 8 33.5 8.8 28.9 9.2 25.2 10 21.5 11 8.4 5.5 7.1 5.5 6 6 3.5 5 1.9 5-0.1 4-1.5 3-3.2 3-4.7 2.3-7 1.6-34 2.1-32 0.9-82-0.8-266-7.3-4.1-4.8 0-1-3-3 0-1-3.1-3 0-1-9.1-10 0-1-7-7 0-1-24.7-24.7-1 0.1-7-7.1-1 0.1-5-5.1-1 0-4-4-1 0-3-3-1 0-7-6-1 0-2-2-1 0-2-2-1 0-5-4.1-1 0-2-2-1 0-2-2-1 0-1-1-1 0-2-2-3-1-2-2-5-2-2-2.1-1 0-1-1-1 0-1-1-5-2-1-1-5-2-9-5.1-2 0-1-1zM1469 822.5l15.5-0.8 0 0.8-1 0-2 2-1 0-2 2.1-1 0-2 2-1 0-2 2-1 0-8 7.1-1-0.1-6 6.1-1 0-10.8 10.8 0.1 1-6 6 0 1-7 8 0 1-2 2 0 1-4 5-0.9 3-2.1 2-1.9 5-2.1 2 0.1 1-2.1 3 0.1 2-4.1 7 0 2-2 3 0 2-2 3 0 2-1.1 1 0 2-1 1 0 3-1 1 0 2-1.1 1 0 3-1 1 0 3-1.1 1 0 1.8-222 6.3-84 0.7-29-0.8-33-2.2-6.9-1.8-4-2-3.2-3-1.5-3-0.1-4 1.3-4 2.5-4 4.3-5 11.6-9.4 16.3-9.6 19.4-9 22.3-8.4 25-7.9 29.1-7.7 31.4-7 33.5-6.4 36-5.8 40-5.5 41-4.7 44-4.2zM1596.4 838.5l13.1-0.4 14 0.5 14 1.3 14 2.3 14 3.1 14 4 26.9 10.2 14.9 7 15 8 29.2 18.1 29 21.4 13 10.9 12 11.2 17 18.4 14.9 20 11.1 19.4 8.1 19.6 6.9 26 2.3 13 1.5 14 0.5 13-0.3 12.9-1.1 12.1-2 12-1.9 0-1 1-26 0.2-1 1-32 0.1-1 1-40 0-1 1-65 0-1 1.1-109-0.1-1-1-66 0-1-1.1-40-0.1-1-1-17.4-0.1-14.6-23.6-12-24.8-9-25.1-6-25.5-2.3-21 0.9-20 3.9-20 7.1-20 5.4-10.9 6-10.1 6.3-9 7.4-9 8.3-8.8 8.9-8.2 18.9-14 10.2-6.1 11.7-5.9 11.8-5 11.4-4 24.1-6zM713.1 1129.5l34.4-0.3 48 2.2 264 19.7 88 5.6 85 4.6 83 3.7 82 2.8 166 3.3 113 0.5 114-1.1 113-2.5 113-4 92-4.4 96-5.6 102-7 185-14.3 40-2.4 31-1.2 35 0.6 13 1.3 11 2.1 8 2.9 5.5 3.5 3.5 4.6 1 5.4-1.3 6-4.3 8-14 18-3 5-5.8 6-8.9 7-12.6 8-15.1 8-15.2 7-22.4 9-22.6 8-25.4 8-28.3 8-62.1 15-71 14-74.1 12-83.3 11-85.3 9-97.3 7.9-93 5.5-96 3.7-99 1.8-98 0-98-2-99-4-96.9-5.9-95.1-8-91.3-10-80.2-11-77.2-13-72.3-15-32.9-8-29.5-8-29.5-9-26.1-9-22.7-9-19.5-9-16.5-9-13.3-9-9.8-9-3.8-6-14-18-4.6-9-0.9-4 0.2-4 1.6-4 2.6-3 3.7-2.6 5-2.3 13-3.2z"/>
<path fill="#1940a8" d="M1720.5 821.5l0-0.8 18 0.4 76 2.7 58 3.3 55 4.2 48 4.7 46 5.5 44 6.5 40 7.1 37 7.9 32.6 8.5 28.5 9 24.9 9.8 20.4 10.2 9.5 6 6.4 5 5.1 5 3.6 5 1.5 4 0 4-1.5 3-3.6 3-4.6 2-5.8 1.3-34 2.1-31 0.9-82-0.7-255-6.5-6.1-7.1 0-1-3.1-3 0-1-4-4 0-1-12.1-13 0-1-24.7-24.7-1 0.1-7-7.1-1 0-5-5-1 0-4-4-1 0-3-3-1 0-7-6.1-1 0.1-2-2.1-1 0.1-2-2.1-1 0-5-4-1 0-2-2-1 0-2-2-3-1-2-2-3-1-2-2.1-5-2-2-2-1 0-1-1-1 0-1-1-1 0-1-1-1 0-1-1-1 0-1-1-1 0-1-1-1 0-1-1.1-1 0-1-1zM1478.4 824.5l3.1 0-1 0-2 2-1 0-2 2-1 0-2 2.1-1 0-8 7-1 0-6 6.1-1 0-10.8 10.8 0 1-6 6 0.1 1-7 8 0 1-4 5 0 1-2 2-1 3-2 2-2 5-2 2 0 1-2 3 0 2-4 7 0 2-2 3 0 2-2.1 3 0 2-1 1 0 2-1 1 0 3-1 1-0.1 2-1 1 0 3-1 1-0.1 3-1 1.2-211 5.5-83 0.5-30-0.9-31-2.1-5-1.2-4.6-2-3.6-3-1.5-3-0.2-3 1.2-4 2.5-4 4.5-5 11.6-9 15.8-9 20-9 21.8-8 26.2-8 29.3-7.5 30-6.6 34-6.3 35.5-5.6 38.5-5.2 42-4.7 43-4zM1599.6 841.5l13.9-0.2 13 0.6 14 1.5 13 2.2 13 3 14 4.1 13.6 4.8 14.3 6 29.4 15 30.2 19 28.5 21.3 12.6 10.7 11.4 10.8 17 18.7 14 19.4 10.5 19.1 7.5 19.5 6.4 25.5 2.1 13 1.2 13 0.4 13-0.6 13-1.5 13.3-2 9.7-26 0.2-1 1-32 0-1 1.1-40 0-1 1-65 0-1 1-109 0-1-1-66 0-1-1.1-40-0.1-1-1-14.6-0.1-14.4-23-12-24.3-9-24.5-6.2-25.2-2.5-21 0.7-20 1.5-10 2.5-10.5 7-19.5 5-10.1 6-10.1 6.9-9.8 7.1-8.6 8-8.4 9-8.3 9.8-7.7 10.2-6.9 21-11.4 23-8.8 24-5.9 13-1.9zM742.2 1134.5l33.3 0.3 45 2.1 255 17.9 161 9.1 161 6.1 162 3.3 110 0.5 111-0.9 109-2.3 111-3.6 91-4.1 92-5 103-6.7 184-13.2 42-2.4 31-1.1 36 0.6 14 1.4 10.5 2 8.5 2.9 5.1 3.1 3.9 5 0.9 5-1.5 6-3.8 7-14.8 18-4 6-3.9 4-8.9 7-11.1 7-13.2 7-17.4 8-20.1 8-22.8 8-25.7 8-28.8 8-63.4 15-67.1 13-75.3 12-85.3 11-88.2 9-85.6 6.8-91 5.3-98 3.7-96 1.7-96-0.1-104-2.2-100-4.2-94.8-6-92.8-8-89.6-10-78.9-11-75.9-13-66.7-14-32.6-8-29.2-8-26-8-25.9-9-22.4-9-19.1-9-15.8-9-11.1-8-6.2-6-4-6-11.1-13-5-7-2.5-5-1.2-4-0.2-4 0.8-3 1.8-3 3.5-3 5.8-3 6.1-1.9 17-2.9z"/>
<path fill="#1941ac" d="M1724.5 823.5l40 0.8 58 2.4 52 3.1 50 4 47 4.7 43 5.2 41 6 39 6.9 37 7.9 31.3 8 28.8 9 23.4 9 20.5 10 14.9 10 5.3 5 3.1 4 1.7 4 0 4-1.6 3-4 3-5.4 2-5 1-34 1.9-30 0.8-83-0.6-241-5.7-2-1.4 0-1-3.1-3 0-1-3-3 0-1-9.2-10 0.1-1-7.1-7 0-1-24.7-24.7-1 0-7-7-1 0-5-5-1 0-4-4-1 0-3-3.1-1 0.1-7-6.1-1 0-2-2-1 0-2-2-1 0-5-4-1 0-2-2-1 0-2-2-3-1-2-2.1-3-1-2-2-5-2-2-2-1 0-1-1-1 0-1-1-1 0-1-1-1 0-1-1.1-1 0-1-1zM1470.3 827.5l6.2 0-1 1-1 0-2 2-1 0-3 3.1-1 0-4 4-1 0-6 6-1 0-10.8 10.9 0 1-6 6 0 1-4 4 0.1 1-3 3 0 1-2 2 0 1-4 5-1 3-2 2-2 5-2 2 0 1-2 3 0 2-4 7 0 2-2 3 0 2-2.1 3 0 2-1 1 0 2-1 1 0 3-1.1 1 0 2-1 1 0 3-1.1 1 0 2.4-198 4.8-84 0.4-27-0.8-32-2-5-1.1-5-1.9-3.6-2.8-1.6-3-0.2-3 1.4-4 2.7-4 3.9-4 10.6-8 16.1-9 18.2-8 22.1-8 24.4-7.4 28-7.2 29.2-6.4 32-6 34.8-5.6 36-4.9 79-8.4zM1591.3 845.5l13.2-0.9 14 0.1 14 0.9 14 1.9 14 2.8 13 3.4 14 4.6 13.5 5.2 13.5 6.1 15.5 7.9 31.5 19 30 21.6 13 10.7 12 11 17 18 14.2 18.7 10.9 19 4.5 10 3.6 10 3.8 13.2 3 13.5 3.2 25.3 0.4 13-0.5 13-1.4 12-2.2 12-23.5 0.1-1 1.1-32 0-1 1-40 0.1-1 1-65 0-1 1-109 0-1-1-66-0.1-1-1-40-0.1-1-1-11.7-0.1-14.3-22.7-12-24-9-24-6-23.3-2.8-20 0.1-19 1.3-10 2-10 6.3-19 4.6-10 5.5-9.9 6-9.1 7-9 8-9 8-7.7 18-14.2 20.4-12.1 21.6-9.3 23-6.7zM747.1 1140.5l35.4-0.7 51 1.9 268 17.4 167 8.6 149 5.2 149 2.6 106 0.5 106-0.9 106-2.1 105-3.3 87-3.6 87-4.5 97-5.8 187-12.6 75-3.3 37 0.5 13 1.2 11.5 1.9 8.5 2.5 6.5 3.5 3.8 4 1.4 5-1.2 6-3.8 7-16.3 19-3.4 5-4 4-7.8 6-11.3 7-13.4 7-15.6 7-20.5 8-23.3 8-52.1 15-60 14-67.9 13-76.6 12-78.7 10-77.8 8-90 7.2-90 5.3-93 3.6-96 1.8-96 0-98.4-1.9-98.6-3.9-92-5.6-89.9-7.5-84.2-9-82.3-11-72.8-12-69.4-14-60.2-15-27.2-8-24.1-8-21.1-8-20.5-9-15.2-8-12.3-8-8.1-7-4.3-6-15.6-18-4.5-8-1.1-4 0-3 1.3-4 2.5-3 3-2.2 5-2.3 13.4-3.5z"/>
<path fill="#1a43b0" d="M1730.5 826.5l0-0.7 18 0.5 67 2.6 52 3.1 50 4 45.7 4.5 41.2 5 41.1 6 36 6.3 34 7 31.1 7.7 26.9 8 24.8 9 20.2 9.3 15.8 9.7 5.8 5 3.3 4 2 4 0.2 3-1.1 3-3.4 3-4.6 2-5 1.2-30 1.9-30 1-84-0.3-233-5.1 0-0.7-3.1-3 0-1-3-3 0-1-9.1-10 0-1-7.1-7 0-1-24.7-24.7-1 0-7-7-1 0-5-5-1 0-4-4.1-1 0.1-3-3.1-1 0-7-6-1 0-2-2-1 0-2-2-1 0-2-2-1 0-2-2-1 0-2-2.1-1 0.1-2-2.1-3-1-2-2-3-1-2-2-5-2-2-2-1 0-1-1.1-1 0-1-1-1 0-1-1zM1463.9 830.5l8.6-0.5 0 0.5-1 0-3 3-1 0-4 4.1-1 0-6 6-1 0-10.8 10.9 0 1-6 6 0 1-7 8 0.1 1-2 2 0 1-4 5-1 3-2 2-2 5-2 2 0 1-2 3 0 2-4 7 0 2-2.1 3 0 2-2 3 0 2-1 1 0 2-1.1 1 0 3-1 1 0 2-1 1-0.1 3-1 1.7-188 4.1-82 0.2-28-0.9-29-1.9-5.2-1.2-4.6-2-2.6-2-1.7-3-0.2-3 1-3 2.7-4 3.9-4 11.1-8 14.9-8 18.7-8 19.8-7 23.3-7 27.4-7 27.5-6 31.8-6 66.2-9.9 73.9-8.1zM1598.5 848.5l13-0.5 14 0.5 13 1.2 13 2.1 13 2.8 13.7 3.9 26.5 10 14.8 7 15 8 30.7 19 29.3 21.5 12.4 10.5 11.6 10.8 17 18.7 13 18.2 10 18.6 7 19.1 6 25.4 2.7 24.2 0.2 13-0.7 12-1.3 11-2.3 12-20.6 0.1-1 1-32 0.1-1 1-40 0-1 1.1-65 0-1 1-109 0-1-1-66-0.1-1-1-40-0.1-1-1-8.4-0.1-14.6-22.8-11.7-23.2-9.2-24-6.1-23.5-3-20.5 0.3-19 3.4-19 6.5-19 4.8-10.2 5.7-9.8 6.3-9.2 7-8.8 16-16.1 9-7.4 10-7 10.6-6.5 10.4-5.4 11-4.9 12-4.4 24-6.2zM775 1145.5l36.5-0.2 50 1.9 257 15.6 154 7.6 145 4.8 145 2.6 103 0.4 102-0.7 102-1.8 104-3 171-7.4 280-17 77-3.1 37 0.6 14 1.2 12 1.9 8.9 2.6 5.9 3 4 4 1.6 5-1.3 6-4.1 7-24.1 27-8 6-10 6-11.7 6-15.7 7-20.8 8-20.7 7-26.7 8-26.1 7-61.3 14-63.9 12-70.8 11-79 10-78.6 8-88.4 7-88.2 5.1-94 3.6-93 1.7-94-0.1-94-1.8-93-3.6-96-5.8-86.6-7.1-85-9-82.5-11-72.8-12-64.6-13-29.9-7-30.6-8-23.8-7-24.3-8-21.2-8-18.1-8-15.2-8-12.1-8-5.6-5-3.6-5-12.4-13-5.6-7-4.1-8-0.6-4 0.6-3 1.7-3 3.3-3 4-2.2 6-2.2 15-2.9z"/>
<path fill="#1b45b5" d="M1736.5 829.5l0-1 75 2.9 52 3.1 49 3.9 42 4.1 42 5.1 39 5.7 35.8 6.2 33.2 6.8 29.2 7.2 27.4 8 22.5 8 20.2 9 15.1 9 4.9 4 3.7 4 2.1 4 0.3 3-1.2 3-3.2 2.6-5 2.1-6 1.2-57 2.6-85-0.2-219-4.3-5.1-6 0-1-4-4 0-1-5.1-5 0-1-7.1-7 0.1-1-24.8-24.7-1 0-7-7.1-1 0.1-5-5.1-1 0.1-4-4.1-1 0-3-3-1 0-7-6-1 0-2-2-1 0-2-2-1 0-2-2.1-1 0.1-2-2.1-1 0-2-2-1 0-2-2-3-1-2-2-3-1-2-2-5-2-2-2.1zM1458.9 833.5l9.6-0.6 0 0.6-1 0-4 4-1 0-6 6.1-1 0-10.9 10.9 0.1 1-6 6 0 1-4 4 0 1-3 3 0 1-2 2 0 1-4 5-0.9 3-2 2-2 5-2 2 0 1-2 3 0 2-4.1 7 0 2-2 3 0 2-2 3 0 2-1.1 1 0 2-1 1 0 3-1 1 0 2-1.1 1 0 2.9-175 3.5-82 0-54-2.4-5.1-1-5.4-2-3-2-1.9-3-0.2-3 1.1-3 5-6 9.4-7 14.7-8 16.4-7.1 21-7.5 23-6.9 25.5-6.5 54.5-11.2 63.7-9.8 70.9-8zM1596 852.5l13.5-0.7 13 0.1 13 1 13 1.9 13 2.6 13 3.5 13.7 4.6 13.3 5.3 14.6 6.7 15.3 8 31.1 19 29.1 21 12.9 10.7 12 11 16 17.3 13.2 18 9.9 18 7 19 6 25 1.8 13 0.9 12 0.2 13-0.8 12-1.4 11-2.3 12-17.5 0.1-1 1-32 0.1-1 1-40 0-1 1.1-65 0-1 1-109 0-1-1.1-66 0-1-1-40-0.2-1-1-4.9 0-14.1-21.7-12-23.2-9-22.9-6.4-23.2-3.2-20-0.1-18 2.9-19 6.2-19 4.6-9.9 5.1-9.1 6-9 7-9 7.9-8.8 8-7.7 9-7.5 9.7-7 20.3-11.8 21.7-9.2 23.3-6.5zM813.7 1150.5l33.8 0.4 45 1.8 237 13.5 145 6.7 143 4.7 139 2.4 100 0.5 100-0.5 101-1.7 99-2.6 164-6.6 280-15.6 79-3 38 0.7 15 1.3 11 1.8 8.2 2.2 6.8 3.2 4.1 3.8 1.7 5-1.4 6-4.3 7-24.5 26-8.3 6-10.4 6-26.3 12-18.6 7-21.2 7-50.3 14-57.6 13-64.8 12-72.2 11-72.2 9-79.5 8-90.2 7-89.4 5-86.6 3.2-92 1.6-91-0.1-94-1.9-95.6-3.8-94.4-5.8-86.1-7.2-83.5-9-81.2-11-71.5-12-63.2-13-29.2-7-29.6-8-23-7-23.2-8-17.6-7-17.1-8-13.8-8-9.1-7-4.8-6-14.8-15-5.4-7-2-4-0.9-4 0.3-3 1.7-3.4 3-2.9 5-2.7 14-3.9 19-2.2z"/>
<path fill="#1b46b9" d="M1740.5 831.5l34 0.9 51 2.4 45 3 44 3.7 40 4.1 39 4.9 35 5.1 33.7 5.9 32.3 6.7 29 7.1 24.8 7.2 22.7 8 18.2 8 13.7 8 5 4 3.7 4 1.6 3 0.3 3-1.4 3-2.4 2-4.6 2-5.6 1.3-57 2.6-84 0-206-3.7-1-0.2 0-1-3.1-3 0-1-4-4 0-1-5.1-5 0-1-7-7 0-1-24.8-24.8-1 0.1-7-7.1-1 0-5-5-1 0-4-4-1 0-3-3-1 0-7-6-1 0-2-2.1-1 0.1-2-2.1-1 0-2-2-1 0-2-2-1 0-2-2-1 0-2-2-3-1-2-2-3-1-2-2.1-3-1-1-1-1 0-2-2zM1455.3 836.5l9.2-0.6 0 0.6-1 1-1 0-6 6.1-1 0-10.9 10.9 0 1-5.9 6 0 1-4 4 0 1-3 3 0 1-2 2 0 1-4 5-0.9 3-2.1 2-1.9 5-2.1 2 0.1 1-2.1 3 0.1 2-4.1 7 0 2-2 3 0 2-2.1 3 0 2-1 1 0 2-1 1 0 3-1 1-0.1 2-1 1 0 1.1-165.1 2.9-81.9-0.3-43-1.8-7-0.8-4.8-1.1-4.6-2-2.4-2-1.4-3 0.3-3 1.6-3 6-6 9-6 13.7-7 17.1-7 19.5-6.6 21.9-6.4 24-6 53.1-10.7 59-9 65-7.5zM1596.5 856.5l13-0.8 13 0.1 13 1 13 1.8 13 2.6 13 3.5 14 4.7 12.7 5.1 15.1 7 15.2 8 31 19 29.1 21 12.9 10.7 11 10.1 16 17.4 13 18.1 9.4 17.7 6.6 19 5.5 25 2.3 24-0.8 23-1.7 12-2.3 11-14 0.1-1 1-32 0.1-1 1-40 0-1 1-65 0-1 1.1-109-0.1-1-1-66 0-1-1.1-40-0.1-1-1-1 0-14-21.1-12-22.8-9-22.2-6.8-23.9-3.3-20-0.2-17 1.1-10 1.8-9 5.8-18 4.6-9.9 5-8.9 6-9 7-9 15.7-16.2 17.9-14 20.4-11.9 21-9 23-6.5zM814.5 1156.5l39-0.6 54 1.5 259 13.4 146 6.1 123 3.5 123 2 96 0.5 96-0.5 95-1.4 96-2.4 155-5.7 279.7-14.4 79.3-2.6 38 0.6 15 1.2 12.1 1.8 9.9 2.6 6.9 3.4 3.8 4 1.2 4-1.5 6-3.8 6-6.5 7-11.8 11-7.3 8-7.1 5-10.5 6-24.4 11-18.9 7-21.6 7-47.7 13-53.9 12-65.6 12-73.7 11-74.4 9-82.2 7.9-78 5.9-85 4.6-87 3.2-87 1.5-89-0.1-91-1.8-87-3.3-85-4.9-88.2-7-78.1-8-78.2-10-69.7-11-67-13-54.3-13-24.9-7-22-7-19.3-7-18.8-8-13.7-7-10.7-7-3.6-3-4-5-13.8-13-5.5-6-4.6-8-0.7-3 0.3-3 1.5-3 3.2-3 8.8-4 14.3-3.1z"/>
<path fill="#1c48bd" d="M1745.5 834.5l0-0.4 22 0.7 54 2.6 85 6.3 76 8.6 35.8 5.2 31.2 5.4 31 6.2 28 6.7 25 7.1 22 7.6 18.5 8 12.2 7 8 7 1.8 3 0.3 3-1.5 3-2.8 2-5.5 2-5.1 1-52.9 2.3-84 0.2-193-3.1-3-2.4 0-1-4.1-4 0-1-5.1-5 0-1-7-7 0-1-24.8-24.8-1 0-7-7-1 0-5-5-1 0-4-4-1 0-3-3-1 0-7-6.1-1 0-2-2-1 0-2-2-1 0-2-2-1 0-2-2-1 0-2-2-1 0-2-2-3-1-2-2.1-3-1-2-2zM1452.8 839.5l7.7-0.5 0 0.5-4 4-1 0-10.9 11 0 1-6 6 0.1 1-4 4 0 1-3 3 0 1-2 2 0 1-4 5-1 3-2 2-2 5-2 2 0 1-2 3 0 2-4 7 0 2-2 3 0 2-2.1 3 0 2-1 1 0 2-1 1-0.1 3-1 1 0 2-1 0.2-154 2.4-79-0.5-46-2.2-9.7-2.9-2.8-2-1.5-3 0-2 1.4-3 5.9-6 9.3-6 12.1-6 14.8-6 18.5-6.3 20-5.8 24-6 49-10 57-8.9 62-7.3zM1600 860.5l12.5-0.6 13 0.2 13 1.1 12 1.8 25 6 26 9.7 14.5 6.8 15.1 8 32.4 19.9 29 21.1 12 10 11 10.3 15 16.5 12.1 17.2 8.9 17.3 6.3 18.7 5 24 2.1 24-1.1 23-4.1 22-10.2 0.1-1 1-32 0-1 1.1-40 0-1 1-65 0-1 1-109 0-1-1-66-0.1-1-1-37-0.1-14.3-21-12-22-9.5-23-6.8-23-3.6-20-0.4-17 2.6-18 5.8-18 4.2-9.2 5-9 6-9.1 7-8.9 8-8.8 8-7.6 18-14 19.6-11.4 21.4-9.1 23-6.4zM848 1161.5l37.5-0.2 50 1.4 263 12.4 158 5.8 150 3.3 149 1.1 152-1.2 153-3.5 153-5.7 251-11.9 45-1.5 36-0.3 32.6 1.3 22.4 3.2 8 2.3 6 3.1 3.3 3.4 1.2 4-1.5 6-4.2 6-5.8 6-13.6 12-6.6 7-7.2 5-9 5-25 11-38.7 13-49.2 13-56 12-62.5 11-69.2 10-67.4 8-80.6 7.7-81 5.9-82.1 4.4-85.9 3-84 1.3-85-0.1-90-1.8-87.6-3.4-85.1-5-87-7-77-8-76.9-10-68.4-11-61-12-53.5-13-42.6-13-18.8-7-15.9-7-13-7-8.4-6-5.4-6-15.7-14-5.3-6-2.6-4-1.4-4 0-3 1.1-3 2.8-3 3.2-2 11.9-4 17.6-2.6z"/>
<path fill="#1d49c1" d="M1750.5 837.5l0-0.6 13 0.5 56 2.7 83 6.3 71.9 8.1 63.4 10 30 6 25.7 6 25.1 7 20.8 7 16.8 7 12.7 7 7.1 6 1.9 3 0.4 3-1.8 3-3 1.9-10 2.6-51 2.2-83 0.4-180-2.5-5.1-5.6 0-1-5-5 0-1-7.1-7 0-1-24.8-24.8-1 0-7-7-1 0-5-5-1 0-4-4-1 0-3-3.1-1 0.1-7-6.1-1 0-2-2-1 0-2-2-1 0-2-2-1 0-2-2-1 0-2-2-1 0-2-2.1-3-1-2-2zM1451.4 842.5l6.1-0.4 0 0.4-1 1-1 0-10.9 11 0 1-6 6 0 1-4 4 0.1 1-3 3 0 1-2 2 0 1-4 5-1 3-2 2-2 5-2 2 0 1-2 3 0 2-4 7 0 2-2.1 3 0 2-2 3 0 2-1 1 0 2-1.1 1 0 3-1 1.3-142 1.9-77-0.7-37-1.4-7-0.9-5.4-1.2-4.5-2-2.2-2-0.9-2 0-2 1.5-3 5.1-5 7.7-5 12.2-6 15.1-6 18.1-6 41.8-11 47.5-9.5 53-8.2 58-6.9zM1608.3 864.5l24.2 0.4 24.5 3.6 24.5 6.8 25 10 29 15.2 33 20.9 27 20.1 20.9 19 14.1 16.2 11.2 16.8 7.8 16.3 6 19.7 4.1 22 1.5 23-1.4 22-4.2 21-6 0-1 1-32 0.1-1 1-40 0.1-1 1-65 0-1 1-109 0-1-1-66-0.1-1-1-32.3-0.1-14.7-21.2-12-21.8-9.3-22-7-23-3.7-20-0.4-17 1-9 1.8-9 6-18 4.6-9.5 5.6-9.5 6.3-9 7.1-8.6 16-15.5 9-7.1 9.9-6.8 20.1-11 11.7-5 11.3-3.9 23-5.6zM896.6 1166.5l79.9 1.8 242 10.4 143 4.9 147 3.1 145 1 143-1 146-3 146-4.9 247-10.7 47-1.3 36-0.2 34 1.3 13 1.4 10 1.8 8.3 2.4 5.9 3 3 3 1.4 4-0.4 3-1.3 3-4.4 6-6.2 6-14.5 12-5.7 6-7.5 5-9.4 5-23.6 10-36.7 12-46.4 12-52.1 11-63.4 11-63.1 9-68.1 8-73.9 7-82.1 6-78.8 4.2-84 2.9-84 1.3-85-0.1-89-1.8-88.5-3.5-83.6-5-85.8-7-75.9-8-75.6-10-61.6-10-60.5-12-33.8-8-29.2-8-25-8-23.2-9-14.5-7-9.7-6-3.7-3-3.4-4-14.5-12-7.1-7-4.5-7-0.7-3 0.4-3 1-2 2.4-2.5 7-3.7 11-2.9 16-2.2 20-1.2z"/>
<path fill="#1d4bc5" d="M1755.5 840.5l0-0.6 7 0.3 56 2.7 80 6.2 68 7.7 61.2 9.7 26.8 5.3 25 5.8 22 6 21.2 6.9 17 7 11 6 7.1 6 1.5 3 0.1 2-1.1 2-2.6 2-5.2 2-5.1 1-48.9 2.2-81 0.4-167-1.9-4-3.7-0.1-1-5-5 0-1-7.1-7 0-1-24.8-24.8-1 0-7-7-1 0-5-5-1 0-4-4.1-1 0-3-3-1 0-7-6-1 0-2-2-1 0-2-2-1 0-2-2-1 0-2-2.1-1 0-5-4zM1451 845.5l2.5 0-8.9 9 0 1-6 6 0 1-4 4 0 1-3 3 0.1 1-2.1 2 0.1 1-4 5-1 3-2 2-2 5-2 2 0 1-2 3 0 2-4 7 0 2-2.1 3 0 2-2 3 0 2-1 1-0.1 2-1 1 0 2.4-131 1.3-74-0.8-39.1-1.9-5-1-5.3-2-2.6-2-1.1-2 0.1-2 0.8-2 4.9-5 7.9-5 10.4-5 15-5.9 15.7-5.1 39.3-10.3 43.1-8.7 50.8-8 55.1-6.7zM1605.8 869.5l12.7-0.5 12 0.4 23.7 3.1 23.3 6 25 9.7 15 7.2 14.8 8.1 32.2 20 27.5 20 11.5 9.7 10 9.6 14 15.9 11 16.4 7.3 15.4 5.7 19.1 4 21.9 1.4 23-1.6 22-4.5 21-1.3 0-1 1-32 0.1-1 1-40 0.1-1 1-65 0-1 1-109 0-1-1-66-0.1-1-1-27.1-0.1-14.2-20-12-21-9.7-21.9-7-22.1-4.3-21-0.7-15 2.2-17 2.3-9 3.3-9 4.2-9.2 5-8.8 12.4-17 15.6-15.8 18-13.8 19.8-11.4 21.2-8.8 23-6.2zM896 1172.5l39.5-0.7 55 1.1 263 10.1 147 4.3 130 2.3 128 0.7 134-0.9 135-2.6 136-4.2 240-9.3 48-1.2 37-0.2 36 1.4 13 1.3 11.2 1.9 7.8 2.2 6 2.8 4 4 0.9 4-1.7 5-4.8 6-6.7 6-15.3 12-6.3 6-16.1 9-22.1 9-38.2 12-44.2 11-49 10-59.2 10-64.7 9-70.8 8-72.8 6.6-75 5.2-78 3.9-78 2.6-80 1.2-81-0.2-84-1.7-83-3.2-77.3-4.4-80.7-6.3-76.3-7.7-71-9-64.1-10-57.5-11-30.9-7-30.7-8-23-7-22.1-8-15.7-7-10.6-6-4-3-4.8-5-15.4-12-7.3-7-3.9-6-0.7-5 1.4-3 2-2 7.9-4 10.7-2.7 15-2z"/>
<path fill="#1e4dc9" d="M1760.5 843.5l0-0.5 5 0.2 53 2.7 75 5.9 65 7.4 57 9 48.8 10.3 22.3 6 18.7 6 15 6 11.3 6 6.1 5 1.7 3 0 2-1.2 2-3.1 2-10.6 2.7-45 1.9-79 0.6-154-1.4-7.1-7.8 0-1-7.1-7 0.1-1-24.9-24.8-1 0-7-7-1 0-5-5.1-1 0-4-4-1 0-3-3-1 0-7-6-1 0-2-2-1 0-2-2.1-1 0-2-2-1 0-2-2-1 0-2-2zM1439.2 849.5l10.3-0.8 0 0.8-5 5 0 1-5.9 6 0 1-4 4 0 1-3 3 0 1-2 2 0 1-4 5-0.9 3-2 2-2 5-2 2 0 1-2 3 0 2-4.1 7 0 2-2 3 0 2-2 3-0.1 2-1 1 0 2-1 1.4-120 0.9-71-1.1-27-1-8-1-7.8-2.2-3.1-2-1.2-2 0-2 1-2 3.9-4 6.2-4 10.2-5 12.8-5 15.3-5 34.1-9 38.7-8 45.9-7.5 50-6.4zM1608.8 874.5l11.7-0.4 12 0.4 23 3.2 23 6.1 24.7 9.7 29.3 15.3 33.2 20.7 25.9 19 10.9 9.3 10 9.6 13.7 16.1 10.1 16 6.5 15 5.4 20 3.4 22 0.6 21-2.1 21-4.8 20-28.8 0.1-1 1-40 0-1 1-65 0.1-1 1-109 0-1-1.1-66 0-1-1-21.3-0.1-14.5-20-12.2-20.8-9.6-21.2-6.9-21-4.5-21-1-15 2-16.3 5.1-16.7 4.1-9 5-9 5.8-8.6 6.7-8.4 15.3-15.5 18-13.7 20-11.4 21-8.6 22-5.9zM936.8 1177.5l39.7-0.3 53 1 247 8.5 134 3.6 123 1.9 123 0.7 125-0.7 127-2.2 137-3.8 225-7.8 48-1.1 38-0.1 37 1.4 14 1.3 12 1.9 9.5 2.7 5.5 2.7 3.3 3.3 1 4-1.9 5-5.1 6-7.1 6-15.2 11-6.5 6-14.6 8-19.8 8-35.2 11-44.9 11-50.2 10-54.7 9-66.7 9-63.8 7-67.7 6-72.6 5-78.3 3.9-75 2.4-79 1.1-79-0.2-82-1.7-80-3.1-76-4.4-77-6-69.8-7-71.8-9-64.1-10-56.9-11-30.3-7-26.3-7-25.3-8-18.1-7-10.7-5-8.4-5-6.5-6-15.2-11-8.1-7-4.7-6-1.3-5 1.7-4 5.8-4 8.9-3 13.1-2.4 16.7-1.6z"/>
<path fill="#1f4ecd" d="M1765.5 846.5l0-0.4 10 0.4 46 2.6 68 5.5 59.5 6.9 54.5 8.5 45.2 9.5 19.1 5 19.2 6 15.1 6 9.4 5 5.8 5 1 2-0.1 2-1.4 2-2.3 1.4-9.3 2.6-8.7 0.8-34 1.2-77 0.8-141-1 0-0.8-5.1-5 0-1-7-7 0-1-24.9-24.8-1 0-7-7.1-1 0-10-9-1 0-3-3-1 0-3-3-1 0-3-3.1-1 0.1-2-2.1-1 0-2-2-1 0-2-2-1 0zM1441.1 852.5l5.4-0.5 0 0.5-14.9 18 0 1-2 2 0 1-4 5-1 3-2 2-1.9 5-2.1 2 0.1 1-2.1 3 0.1 2-4.1 7 0 2-2 3 0 2-2.1 3 0 2-1 1 0 1.3-118 0.4-78-1.8-8.9-0.9-6.1-1.4-4.1-1.6-2.8-3 0.3-3 3.6-4 6.2-4 10.6-5 26.2-9 31-8 36-7.3 42-6.8 45.5-5.9zM1604.5 880.5l23-0.8 23 2.3 23.2 5.5 24.1 9 14.7 6.9 15 8.1 33 20.1 27 19.3 11 9.2 9.9 9.4 13.1 15 10.3 16 6.4 15 5.3 19.9 3.2 22.1 0.3 21-2.5 20.7-5.1 19.3-22.9 0.1-1 1-40 0-1 1-65 0-1 1.1-109-0.1-1-1-66-0.1-1-1-14.8 0-14.2-18.9-12-19.8-9.7-20.3-7.2-20-4.8-20-1.7-15 1.3-16 4.4-16 3.7-8.9 4.3-8.1 5.7-8.9 6-8 14.3-15.1 16.7-13.5 18.8-11.5 20-9 21.2-6.4zM994.4 1182.5l80.1 1.1 217 6.6 123 3 121 1.8 118 0.6 117-0.6 118-1.7 125-3 224-6.8 85-0.9 39 1.4 16 1.5 11 1.8 8.6 2.2 6.5 3 3.3 3 1.1 4-1.9 5-5.6 6-7.7 6-16.2 11-5.6 5-12.8 7-20.4 8-32.9 10-41.8 10-46 9-55.8 9-60.4 8-65 7-70.1 6-67.3 4.4-74.3 3.6-71.7 2.2-76 1-76-0.3-83-1.7-79.1-3.2-82.7-5-73.2-6-67.1-7-68.9-9-61.4-10-49.5-10-25-6-25.2-7-21-7-16.9-7-10.7-6-5.6-5-20.3-14-6.7-6-3.6-5-0.8-3 0.2-2 2.8-4 5.7-3.2 9.7-2.8 12.3-2 18-1.7z"/>
<path fill="#1f50d2" d="M1769.5 849.5l56 3 59.4 5 53.6 6.2 50.1 7.8 43.7 9 32.4 9 13.5 5 10.3 5 5.4 4 1.5 2 0.6 2-2 3-4.5 2.1-10 1.9-10 0.5-84 1.8-142-0.6-11.1-11.7 0-1-24.9-24.9-1 0-7-7-1 0-10-9-1 0-3-3-1 0-7-6.1-1 0-2-2-1 0-2-2zM1433.2 856.5l10.3-0.9 0 0.9-8.9 10 0 1-3 3 0 1-2 2 0 1-4 5-1 3-2 2-2 5-2 2 0 1-2 3 0 2-4 7 0 2-2 3 0 2-2.1 3 0 2-101 0.2-75-1.9-8-0.8-6.4-1.5-4.3-2-1.7-2 0.3-3 2.6-3 4.3-3 7.9-4 22.2-8 29.1-7.7 35-7.3 36.3-6 39.7-5.3zM1622.2 885.5l21.3 1.2 21 3.9 21 6.6 22 9.6 30.4 16.7 31.6 20.3 22 16.7 10 8.9 8 8.2 11 13.9 8.7 15 5.4 15 4.5 20 2.1 20-0.3 20-2.9 19-5.3 18-16.2 0-1 1-40 0.1-1 1-65 0-1 1-109 0-1-1-66-0.1-1-1-7.4 0-14.6-18.8-12-19.2-10-20.2-7.9-21.8-5-21-1.2-14 0.5-8 1.4-8 5.1-16 4.1-8.6 5-8.4 6-8.4 7-8.4 16-15.1 18.4-13.1 20.6-10.9 21-7.6 22-4.8zM998.2 1188.5l36.3-0.7 47 0.4 343 8.2 119 1.6 116 0.5 102-0.5 105-1.4 333-8 85-0.7 42 1.5 27.4 3.1 8.6 2 7.3 3 3.7 3 1.3 4-2.1 5-5.9 6-8.4 6-17.5 11-6 5-11.8 6-18.6 7-30.6 9-38.5 9-47.4 9-51.2 8-54.2 7-66.6 7-60.5 5.1-70 4.5-72 3.3-69 2-71 0.9-70-0.2-77.4-1.6-73.6-2.8-73-4.2-66-5-70.8-7-64.5-8-58.4-9-47.4-9-26.6-6-23-6-19.5-6-16.2-6-14.2-7-6-5-21.9-14-8.3-7-3.2-5-0.2-4 1-2 2.1-2 6-3 9.1-2.5 12-2z"/>
<path fill="#2052d6" d="M1775.5 853.5l0-0.8 34 1.9 66 5.4 51 5.9 47 7.2 40 8.1 30.5 8.3 13.6 5 8.1 4 5.1 4 1.2 3-1.1 2-1.3 1-5.1 2-16 2.1-82 1.7-125-0.2-9.1-9.6 0-1-24.9-24.9-1 0-7-7-1 0-10-9-1 0-3-3.1-1 0-3-3-1 0-3-3zM1437.6 859.5l2.9 0-2 2 0 1-4 4 0 1-2.9 3 0 1-2 2 0 1-4 5-1 3-2 2-2 5-2 2 0 1-2 3 0 2-4 7 0 2-2.1 3 0 2-2 2.9-84-0.3-67-1.6-9.3-1-6.7-1.6-4-1.9-1.7-2.5 1.2-3 3.5-3 12.1-6 21-7 23.6-6 29.3-6 36-6 37-4.9zM1612.3 892.5l21.2-0.4 21 2.5 21 5.3 22.1 8.6 29.1 15 34.1 21 24.7 18 9.3 8 8.7 8.6 11.7 14.4 8.1 14 5.4 15 4.3 20 1.8 20-0.6 19-3.3 19-5.9 18-8.5 0-1 1-40 0.1-1 1-65 0-1 1-109 0-1-1-65-0.1-14-17-12.2-18-10.2-19-8.2-20-5.5-19-2.8-17 0.7-14 3.7-15 3.2-8 4.3-8.3 10.9-15.7 14.1-14.8 16.4-13.2 18.1-11 19.5-8.7 20-6zM1050.7 1193.5l39.8-0.3 52 0.5 332 6.5 182 1.2 187-1.3 315-6.3 86-0.5 42 1.4 29 2.9 10 2.2 7.5 2.7 4.2 3 1.2 2 0.3 2-0.9 3-3 4-10.5 8-20.6 12-10.1 7-8.8 4-13.6 5-31.1 9-35.2 8-43 8-45.4 7-54.9 7-57.7 6-59.9 5-68.5 4.4-66 3-69 2-69 0.9-70-0.3-75-1.6-73-2.9-73-4.3-65.7-5.2-59.8-6-63.7-8-51.3-8-46.6-9-44-11-18.6-6-12.4-5-7.7-4-5-4-25.2-15-6.4-5-4.1-5-0.9-4 0.8-2 1.8-2 5.3-3 7.5-2.3 11-2.1 14.2-1.6z"/>
<path fill="#2153da" d="M1779.5 856.5l41 2.3 53.9 4.7 46.1 5.5 41 6.4 34.6 7.1 28.8 8 10.4 4 5.8 3 3.9 3 1.2 3-1.7 2.2-5 2.1-8.9 1.7-9.1 0.7-76 1.5-106 0.2-7.1-7.4 0-1-24.9-24.9-1 0-7-7-1 0-10-9.1-1 0-3-3-1 0-3-3zM1433.4 863.5l4.1-0.4 0 0.4-6 7 0 1-3.9 5 0 1-2 2-1 3-2 2-2 5-2 2 0 1-2 3 0 2-4 7-0.1 2-2 3 0 2-1 0.5-66.9-0.5-58.1-1.4-9-0.8-8.4-1.8-4.1-2-1.4-2 0.5-2 3.1-3 9.7-5 14.2-5 22.6-6 23.8-5 31-5.4 32.3-4.6zM1614.9 899.5l20.6-0.4 20 2.4 21 5.5 21 8.4 28.9 15.1 34 21 22.1 16.2 9 7.9 8 8 10.9 13.9 7.6 14 5.2 17 3.3 18.8 1 19.2-1.6 19-4.1 18-6.3 16-40 0.1-1 1-65 0-1 1-109 0-1-1-55.1-0.1-3.9-4.2-13.1-15.8-11.9-17.4-9.6-17.6-7.6-18-5.7-19-2.8-16 0.4-13 3.3-14 7-15.3 5-7.9 6-7.8 13.3-14 16.2-13 17.5-10.7 18.5-8.3 19.5-5.9zM1130 1198.5l76.5 0.6 273 4.4 172 1.1 162-0.9 300-4.8 87-0.2 45 1.4 30 3 10 2 7.2 2.4 4.8 3 1.4 2 0.4 2-0.9 3-2.3 3-4.7 4-6.1 4-24.2 13-9.2 6-20.6 8-28.6 8-31.7 7-38.5 7-46.8 7-48.6 6-60 6-61.6 4.8-58 3.5-62 2.7-67 1.8-65 0.7-66-0.4-73-1.7-70-2.9-72-4.4-62.9-5.1-66.2-7-52.5-7-48.5-8-43.1-9-32.8-9-20.6-8-7.4-5-22.6-12-9.5-6-4.7-4-2.3-3-0.9-3 0.4-2 2.6-3 6.1-3 10.9-2.7 13-1.9 35-2.5z"/>
<path fill="#2155de" d="M1785.5 860.5l0-0.6 28 1.9 53 4.7 41.6 5 35.4 5.5 32.1 6.5 22.2 6 14.9 6 4.2 3 1.2 3-1.6 2-5.1 2-15.9 2.1-71 1.6-87 0.3-5-5 0-1-25-24.9-1 0-7-7-1 0-5-5.1-1 0-4-4-1 0zM1431.9 867.5l2.6 0-3 3 0 1-2 2 0 1-2 2 0 1-2 2-0.9 3-2 2-2 5-2 2 0 1-2 3 0 2-4.1 7 0 2-1 1 0 1-1 0.9-100.6-1.9-13.5-2-5.1-2-1.6-2 0.4-2 1.9-2 7.2-4 14-5 19-5 23.3-4.9 23-4zM1615.2 907.5l19.3-0.8 20 2.1 19 4.7 20.7 8 28.9 15 34.2 21 21.2 15.6 8.3 7.4 7.7 7.9 9.9 13.1 6.6 13 4.7 17 2.8 19 0.3 18-2.1 18-4.6 17-7.1 16-29.5 0-1 1-65 0.1-1 1-109 0-1-1.1-43.3 0-10.6-11-12.2-15-10.9-16.3-9-16.7-7-17-5-17-2.4-14 0.4-12 3.2-13 6.8-14.3 10-14.2 13-13.5 14.9-12 16.1-10 17-8 18-5.8zM1135 1204.5l89.5-0.5 271 3.2 165 0.7 158-0.8 255-3.1 77 0.1 47.5 1.4 32.8 3 10.7 2 9 3 4.2 3 1.2 3-0.9 3-2.5 3-10.1 7-28.7 14-8 5-15.6 6-25.1 7-32.3 7-33.9 6-40.9 6-49.9 6-51.4 5-53.1 4.1-61 3.6-58 2.5-62 1.5-60 0.6-60.9-0.3-66.1-1.5-64.8-2.5-61.2-3.5-58.3-4.5-60.5-6-48.2-6-45.5-7-41.2-8-31.6-8-19.9-7-10.2-6-30.4-15-7.3-5-4.1-5-0.4-2 0.5-2 3.1-3 6-2.6 8-2.1 25.5-3.3z"/>
<path fill="#2257e2" d="M1790.5 864.5l0-0.6 18 1.2 48.4 4.4 36.6 4.5 33 5.1 26.3 5.4 18.4 5 12.2 5 3.6 3 0.3 2-2.1 2-6.4 2-18.3 1.9-125 1.7-28-28.5-1 0-7-7.1-1 0-5-5-1 0zM1425.2 872.5l5.3-0.7 0 0.7-1 1 0 1-2 2 0 1-2 2-1 3-2 2-1.9 5-2.1 2 0.1 1-2.1 3 0 2-4 7 0 2-71-1.4-15-2.2-3.9-1.4-2.1-2-0.1-1 1.2-2 4.7-3 7.4-3 13.3-4 32.3-7zM1625.3 915.5l17.2 0.1 18 2.7 18 5.2 19 8.1 29.3 15.9 30.2 19 19.4 15 7.3 7 6.2 7 7.6 11 5.4 12 4.3 19 1.8 19-0.9 17-3 16-5.6 15.9-7.6 14.1-16.4 0-1 1-65 0.1-1 1-109-0.1-1-1-29 0-12-11.5-11-12.4-11-14.9-9-14.9-7.3-15.3-5.8-16-3.9-16-0.6-9 1.3-11 3.6-11 7.1-13 10.6-13.5 13.1-12.5 14.9-11.1 15.3-8.9 16.7-7.1 17-4.7zM1211.7 1209.5l81.8-0.2 227 1.8 133 0.5 133-0.5 228-1.8 83 0.2 49 1.5 34 2.9 12 2.1 8.6 2.5 5 3 1.5 3-1 3-2.7 3-9.3 6-34.2 15-9.2 5-11.3 4-22.4 6-23.5 5-34.6 6-35 5-42.3 5-52.6 5-54.3 4-53.7 3-53 2-58 1.4-57 0.4-56-0.4-60-1.4-63-2.6-56.9-3.4-57.1-4.6-52.8-5.4-46.1-6-42.5-7-33-7-14.9-4-12.1-4-11.7-6-30.2-13-7.5-4-5.8-4-3.3-4-0.2-3 2.5-3 6.6-3 8-2 12.8-2 34.2-2.6z"/>
<path fill="#2358e6" d="M1795.5 868.5l17.3 1 37.7 3.7 51.7 7.3 20.3 4 15.5 4 10.6 4 3.2 2 1.3 2-1.1 2-5 2-15.5 2.1-99 1.8 0-0.9-25-25-1 0-7-7-1 0zM1424.2 877.5l3.3-0.5 0 0.5-2 2-1 3-2 2-2 5-2 2 0 1-2 3 0 2-1 1-2 5-41-1.2-11.7-1.8-3.1-1-2.8-2 0.2-2 4.1-3 14-5 21.6-5zM1626.1 925.5l16.4-0.3 17 2.3 17 4.8 18 7.5 27 14.7 30.1 19 17.8 14 12.2 13 7.4 12 4.2 12 3.3 19 0.3 19-2.2 16-4.4 15-6.7 14-9.2 13-64.8 0-1 1-23 0-86 0-1-1-10.6 0-9.8-8-9.6-8.9-8.4-9.1-7.6-9.2-9-13-8-14.2-6-13.6-4.9-15-2.2-10-0.4-9 1.5-9.1 3.6-9.9 7-12 9.4-11.5 12.2-11.5 13.4-10 13.6-8 14.8-6.5 14-4.1zM1249.3 1215.5l92.2-0.9 295 0.9 312-0.9 86 0.4 53 1.6 37.2 2.9 12.4 2 7.6 2 6.2 3 1.9 3-0.4 2-2.4 3-9.7 6-11.5 5-30.1 11-8.1 4-8.8 3-15.4 4-24.2 5-30.2 5-29.2 4-44.3 5-39 3.5-50 3.5-45 2.4-101 3-103-0.1-55-1.3-50.4-2-52.3-3-51.7-4-49.5-5-39-5-31.5-5-29.7-6-21.5-6-10.8-5-37.3-14-12.8-7-3-3-1-3 1.9-3 3.5-2 7.1-2.3 11-2.1 28-2.8z"/>
<path fill="#235aeb" d="M1801.5 873.5l0-0.4 3 0.2 31.2 3.2 41.4 6 26.1 6 7.6 3 2.6 2 0.4 1-1.6 2-2.6 1-15.1 2.4-16 0.8-48 0.7-23-22.9-1 0zM1420.4 884.5l2.1-0.4 0 1.4-6 10 0 2-1 1 0 1-1 0.5-12.1-1.5-4.2-1-3.8-2 0-2 4.7-3 8.9-3zM1636.2 936.5l15.3 0.6 15 3 15.6 5.4 17.4 8.3 28.6 16.7 20.7 14 14.7 12.9 5.3 6.1 4.2 6 5.1 11 3.5 17 0.7 17-1.8 16-4.1 14-6.8 14-8.8 12-10.6 10-40.7 0-1 1-93 0-17-11-16-13.3-14-15-12-16.7-6.3-11-5-11-4.2-12-2.7-11-0.2-7 1.3-8 2.4-7 4.2-8 7.5-10.3 10-10.5 12-10 12-8.1 12-6.3 12-4.5 12-2.9zM1354.2 1220.5l93.3-0.6 402 0 125 1 51 1.6 36.6 3 12.4 2 7.6 2 5.8 3 1.2 3-1 2-3.4 3-12.5 6-17.4 6-30.1 9-13.4 5-12.2 3-20.8 4-49.8 7-38.7 4-36.7 3-83.6 4.6-89 2.1-90-0.6-93-3.4-42.8-2.7-44.2-3.7-39.5-4.3-29.1-4-28.5-5-20.2-5-10.1-4-39.3-12-15.2-6-6.9-4-2.7-3 0.1-3 2.2-2 4.4-2 8.8-2.2 27-3.4 39-2.1z"/>
<path fill="#245cef" d="M1808.5 879.5l17.8 2 23.1 4 13.8 4 3.2 2 0.3 1-2.5 2-9.6 2-27.1 1.8zM1638.7 950.5l12.8 0.1 14 2.6 14 4.8 15 7.3 23.9 14.2 18.7 13 12.1 11 4.3 5.2 3.8 5.8 3.8 10 2.3 17-0.7 15-3.2 14-5.2 12-7.8 11.3-9.9 9.7-11.1 7.4-9 4.1-10 3.2-10 1.9-11 0.8-11-0.3-11-1.4-11.5-2.7-11.5-3.9-11-4.8-10-5.5-10.2-6.8-9.8-7.9-9-8.6-8-9.1-6.9-9.4-6-10-7.5-17-2.7-9-0.6-5 0.4-6 1.6-6 2.7-6 4-6.6 6.7-8.4 8.7-9 9.4-8 9.2-6.4 9-5 9-3.7 10-2.7zM1585.3 1225.5l224.2 0.3 115 1.9 38 1.9 29.4 2.9 10.3 2 5.3 1.7 3.6 2.3 0.8 2-2.2 3-7.3 4-11.3 4-18.3 5-44.5 10-18.8 5-25.1 4-25.3 3-61.6 5-76 3.4-77 0.9-76-1.5-47-2.1-46-3.2-35.9-3.5-35.9-5-64.6-15-22.4-6-15.5-6-4.2-3-1.1-2 0.2-1 1.7-2 4.4-2 13.3-2.9 19-2.2 29.2-1.9 81.8-2.2z"/>
<path fill="#255df3" d="M1641.8 969.5l9.7-0.6 10 1.2 11 3.2 11 5 15.3 9.2 16.8 12 10 9 6.2 8 3.4 8 1.2 9-0.4 11-2.1 10-3.4 8.3-5 7.9-6.2 6.8-7.8 5.8-6 3.2-7 2.7-7 1.8-8 1-8 0.2-8-0.7-16-3.7-16-6.9-14.2-9.4-12.9-12-10.5-14-6.2-12-2.8-9 0.8-8 3.6-8 4.6-7 7.2-9 6.5-7 5.7-5 11.3-7 6.9-2.6zM1528.1 1233.5l158.4-0.9 77 0.6 57.1 1.3 39.9 1.8 25.3 2.2 16.9 3 4.8 2 1.4 2-1.3 2-5.8 3-9.8 3-13.1 3-36.1 6-45.3 5.5-67.3 6.5-16.7 1-48 1.3-51-0.5-36.9-1.8-98.1-10.1-28-3.9-22.6-4-16.8-4-8.5-3-4.3-3-0.1-2 1.1-1 8.9-3 12.8-2 39.9-3z"/>
</g>
</svg>
</body>
</html>
